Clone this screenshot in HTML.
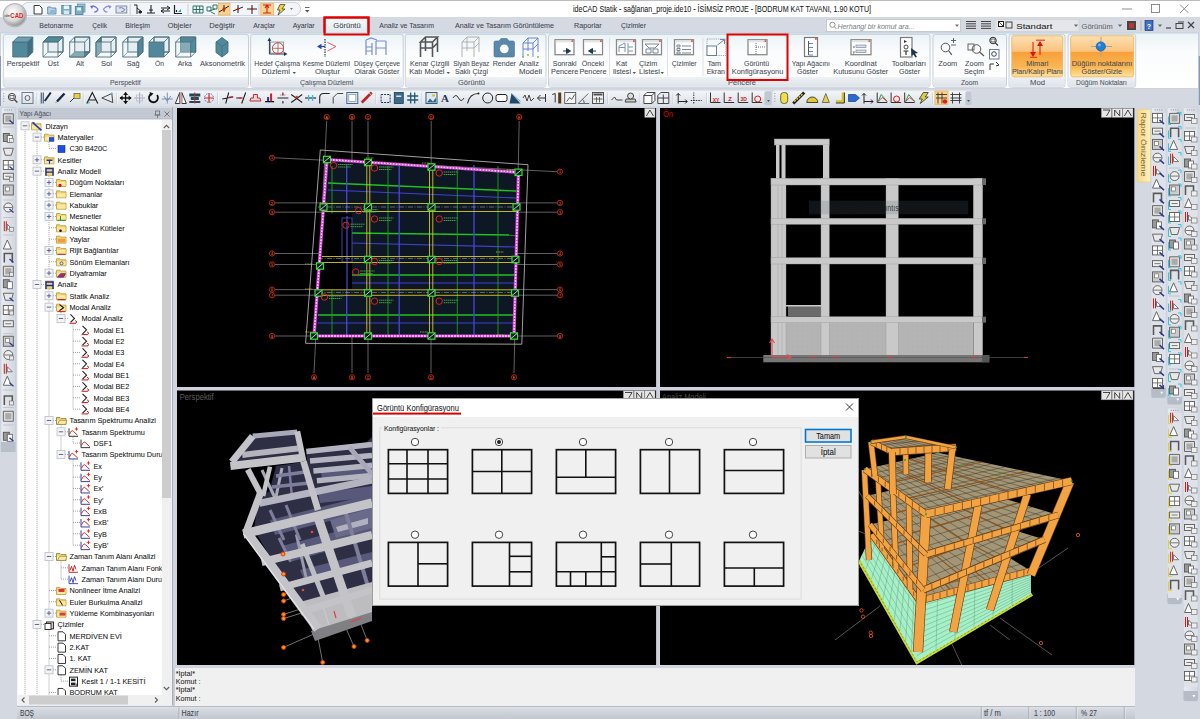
<!DOCTYPE html>
<html><head><meta charset="utf-8"><title>ideCAD Statik</title>
<style>html,body{margin:0;padding:0;width:1200px;height:719px;overflow:hidden;background:#d3d8e1;}
svg{display:block;font-family:"Liberation Sans",sans-serif;}</style></head>
<body><svg width="1200" height="719" viewBox="0 0 1200 719">
<defs>
<linearGradient id="gRib" x1="0" y1="0" x2="0" y2="1"><stop offset="0" stop-color="#eaf3f6"/><stop offset="0.35" stop-color="#fbfcfd"/><stop offset="1" stop-color="#ffffff"/></linearGradient>
<linearGradient id="gGrpLbl" x1="0" y1="0" x2="0" y2="1"><stop offset="0" stop-color="#eef1f5"/><stop offset="1" stop-color="#dde3ea"/></linearGradient>
<linearGradient id="gTb" x1="0" y1="0" x2="0" y2="1"><stop offset="0" stop-color="#f4f6f9"/><stop offset="1" stop-color="#d9dee6"/></linearGradient>
<linearGradient id="gStat" x1="0" y1="0" x2="0" y2="1"><stop offset="0" stop-color="#e3e6eb"/><stop offset="0.3" stop-color="#d3d7de"/><stop offset="1" stop-color="#c3c8d0"/></linearGradient>
<linearGradient id="gOrange" x1="0" y1="0" x2="0" y2="1"><stop offset="0" stop-color="#fde0b2"/><stop offset="0.38" stop-color="#fbc27e"/><stop offset="0.4" stop-color="#f8a03a"/><stop offset="0.75" stop-color="#fab552"/><stop offset="1" stop-color="#fde39c"/></linearGradient>
<linearGradient id="gTab" x1="0" y1="0" x2="0" y2="1"><stop offset="0" stop-color="#f6f9fb"/><stop offset="1" stop-color="#dfe9ee"/></linearGradient>
<linearGradient id="gYel" x1="1" y1="0" x2="0" y2="0"><stop offset="0" stop-color="#fdf0c0"/><stop offset="1" stop-color="#f8d77f"/></linearGradient>
<radialGradient id="gLogo" cx="0.4" cy="0.35" r="0.7"><stop offset="0" stop-color="#ffffff"/><stop offset="0.6" stop-color="#d8d8d8"/><stop offset="1" stop-color="#8a8a8a"/></radialGradient>
<linearGradient id="gCol" x1="0" y1="0" x2="1" y2="0"><stop offset="0" stop-color="#e9ecf1"/><stop offset="1" stop-color="#d2d7df"/></linearGradient>
</defs>
<rect x="0" y="0" width="1200" height="719" fill="#d3d8e1"/>
<rect x="0" y="0" width="1200" height="17" fill="#ffffff"/>
<text x="573" y="12" font-size="8.2" fill="#1a1a1a" text-anchor="start" font-weight="normal" textLength="298" lengthAdjust="spacingAndGlyphs" stroke="#1a1a1a" stroke-width="0.06">ideCAD Statik - sağlanan_proje.ide10 - İSİMSİZ PROJE - [BODRUM KAT TAVANI,  1.90 KOTU]</text>
<line x1="1122" y1="9" x2="1132" y2="9" stroke="#808080" stroke-width="0.9"/>
<rect x="1151.5" y="4.5" width="8" height="8" fill="none" stroke="#808080" stroke-width="0.9"/>
<line x1="1180" y1="4.5" x2="1188.5" y2="13" stroke="#808080" stroke-width="0.9"/>
<line x1="1188.5" y1="4.5" x2="1180" y2="13" stroke="#808080" stroke-width="0.9"/>
<rect x="22" y="2.3" width="278.5" height="13.4" rx="6.5" fill="#f1f4f8" stroke="#c3cad5" stroke-width="0.9"/>
<rect x="0" y="17" width="1200" height="16" fill="#d4d9e2"/>
<path d="M325,34 L325,19 Q325,17.5 327,17.5 L366,17.5 Q368,17.5 368,19 L368,34 Z" fill="url(#gTab)" stroke="#bcc8d4" stroke-width="0.8"/>
<text x="39.3" y="28.4" font-size="7.3" fill="#41444e" text-anchor="start" font-weight="normal" textLength="34.0" lengthAdjust="spacingAndGlyphs" stroke="#41444e" stroke-width="0.06">Betonarme</text>
<text x="92.3" y="28.4" font-size="7.3" fill="#41444e" text-anchor="start" font-weight="normal" textLength="14.7" lengthAdjust="spacingAndGlyphs" stroke="#41444e" stroke-width="0.06">Çelik</text>
<text x="125.3" y="28.4" font-size="7.3" fill="#41444e" text-anchor="start" font-weight="normal" textLength="24.7" lengthAdjust="spacingAndGlyphs" stroke="#41444e" stroke-width="0.06">Birleşim</text>
<text x="167.7" y="28.4" font-size="7.3" fill="#41444e" text-anchor="start" font-weight="normal" textLength="24.0" lengthAdjust="spacingAndGlyphs" stroke="#41444e" stroke-width="0.06">Objeler</text>
<text x="209.3" y="28.4" font-size="7.3" fill="#41444e" text-anchor="start" font-weight="normal" textLength="25.7" lengthAdjust="spacingAndGlyphs" stroke="#41444e" stroke-width="0.06">Değiştir</text>
<text x="253.3" y="28.4" font-size="7.3" fill="#41444e" text-anchor="start" font-weight="normal" textLength="21.7" lengthAdjust="spacingAndGlyphs" stroke="#41444e" stroke-width="0.06">Araçlar</text>
<text x="292.7" y="28.4" font-size="7.3" fill="#41444e" text-anchor="start" font-weight="normal" textLength="22.0" lengthAdjust="spacingAndGlyphs" stroke="#41444e" stroke-width="0.06">Ayarlar</text>
<text x="333.3" y="28.4" font-size="7.3" fill="#41444e" text-anchor="start" font-weight="normal" textLength="27.4" lengthAdjust="spacingAndGlyphs" stroke="#41444e" stroke-width="0.06">Görüntü</text>
<text x="379.3" y="28.4" font-size="7.3" fill="#41444e" text-anchor="start" font-weight="normal" textLength="54.7" lengthAdjust="spacingAndGlyphs" stroke="#41444e" stroke-width="0.06">Analiz ve Tasarım</text>
<text x="455" y="28.4" font-size="7.3" fill="#41444e" text-anchor="start" font-weight="normal" textLength="99" lengthAdjust="spacingAndGlyphs" stroke="#41444e" stroke-width="0.06">Analiz ve Tasarım Görüntüleme</text>
<text x="574" y="28.4" font-size="7.3" fill="#41444e" text-anchor="start" font-weight="normal" textLength="27.7" lengthAdjust="spacingAndGlyphs" stroke="#41444e" stroke-width="0.06">Raporlar</text>
<text x="621" y="28.4" font-size="7.3" fill="#41444e" text-anchor="start" font-weight="normal" textLength="25" lengthAdjust="spacingAndGlyphs" stroke="#41444e" stroke-width="0.06">Çizimler</text>
<rect x="324.5" y="17.5" width="44" height="17" fill="none" stroke="#e00000" stroke-width="2"/>
<rect x="826.5" y="19.5" width="134" height="12" fill="#ffffff" stroke="#c5cbd4" stroke-width="1"/>
<circle cx="832.5" cy="24.8" r="2.6" fill="none" stroke="#888" stroke-width="0.9"/>
<line x1="834.4" y1="26.8" x2="836.5" y2="29" stroke="#888" stroke-width="1"/>
<text x="837.4" y="28.5" font-size="7.6" fill="#80848c" text-anchor="start" font-weight="normal" textLength="77" lengthAdjust="spacingAndGlyphs" stroke="#80848c" stroke-width="0.06" font-style="italic">Herhangi bir komut ara...</text>
<path d="M955,24.5 L959,24.5 L957,27 Z" fill="#777"/>
<line x1="966" y1="21.5" x2="976" y2="21.5" stroke="#333" stroke-width="0.9"/>
<line x1="966" y1="23.8" x2="976" y2="23.8" stroke="#333" stroke-width="0.9"/>
<line x1="966" y1="26.1" x2="976" y2="26.1" stroke="#333" stroke-width="0.9"/>
<line x1="966" y1="28.4" x2="976" y2="28.4" stroke="#333" stroke-width="0.9"/>
<line x1="981" y1="21.5" x2="991" y2="21.5" stroke="#333" stroke-width="0.9"/>
<line x1="981" y1="23.8" x2="991" y2="23.8" stroke="#333" stroke-width="0.9"/>
<line x1="981" y1="26.1" x2="991" y2="26.1" stroke="#333" stroke-width="0.9"/>
<line x1="981" y1="28.4" x2="991" y2="28.4" stroke="#333" stroke-width="0.9"/>
<rect x="995" y="19.5" width="84" height="12" fill="#e4e6ea" stroke="#cfd3d9" stroke-width="0.8"/>
<rect x="998" y="21" width="6" height="6" fill="#222"/>
<rect x="999" y="22" width="4" height="4" fill="#fff"/>
<line x1="999" y1="22" x2="1003" y2="26" stroke="#222" stroke-width="0.8"/>
<rect x="1006" y="22" width="6" height="6" fill="none" stroke="#333" stroke-width="0.9"/>
<text x="1016.3" y="28.5" font-size="7.6" fill="#222" text-anchor="start" font-weight="normal" textLength="36" lengthAdjust="spacingAndGlyphs" stroke="#222" stroke-width="0.06">Standart</text>
<path d="M1074,24.5 L1078,24.5 L1076,27 Z" fill="#666"/>
<text x="1081.6" y="28.5" font-size="7.6" fill="#666" text-anchor="start" font-weight="normal" textLength="31" lengthAdjust="spacingAndGlyphs" stroke="#666" stroke-width="0.06">Görünüm</text>
<path d="M1118,24.5 L1122,24.5 L1120,27 Z" fill="#666"/>
<rect x="1127" y="21" width="9" height="9" fill="#444"/>
<rect x="1129" y="23" width="5" height="5" fill="#b33"/>
<line x1="1141" y1="20" x2="1141" y2="31" stroke="#aab" stroke-width="0.8"/>
<rect x="1145" y="20.5" width="8" height="10" fill="#3b6fd0" stroke="#224" stroke-width="0.6"/>
<text x="1149" y="28.5" font-size="7" fill="#fff" text-anchor="middle" font-weight="bold">?</text>
<path d="M1158,24.5 L1162,24.5 L1160,27 Z" fill="#666"/>
<line x1="1166" y1="28" x2="1171" y2="28" stroke="#444" stroke-width="1.2"/>
<rect x="1176" y="23.5" width="7" height="5" fill="none" stroke="#444" stroke-width="1"/>
<line x1="1178" y1="22" x2="1184" y2="22" stroke="#444" stroke-width="1"/>
<line x1="1188" y1="22" x2="1194" y2="28" stroke="#444" stroke-width="1.2"/>
<line x1="1194" y1="22" x2="1188" y2="28" stroke="#444" stroke-width="1.2"/>
<rect x="0.5" y="33" width="1198" height="55.5" fill="url(#gRib)" stroke="#c8ced8" stroke-width="0.8"/>
<line x1="1" y1="33.5" x2="1198" y2="33.5" stroke="#cfe6ee" stroke-width="1"/>
<rect x="3.3" y="34.3" width="245.2" height="53" rx="2.5" fill="url(#gRib)" stroke="#c3c9d2" stroke-width="0.9"/>
<path d="M3.8,77 L248.0,77 L248.0,85 Q248.0,86.8 246.0,86.8 L5.8,86.8 Q3.8,86.8 3.8,85 Z" fill="url(#gGrpLbl)"/>
<rect x="250.7" y="34.3" width="152.5" height="53" rx="2.5" fill="url(#gRib)" stroke="#c3c9d2" stroke-width="0.9"/>
<path d="M251.2,77 L402.7,77 L402.7,85 Q402.7,86.8 400.7,86.8 L253.2,86.8 Q251.2,86.8 251.2,85 Z" fill="url(#gGrpLbl)"/>
<rect x="405.3" y="34.3" width="140.7" height="53" rx="2.5" fill="url(#gRib)" stroke="#c3c9d2" stroke-width="0.9"/>
<path d="M405.8,77 L545.5,77 L545.5,85 Q545.5,86.8 543.5,86.8 L407.8,86.8 Q405.8,86.8 405.8,85 Z" fill="url(#gGrpLbl)"/>
<rect x="548.5" y="34.3" width="381.5" height="53" rx="2.5" fill="url(#gRib)" stroke="#c3c9d2" stroke-width="0.9"/>
<path d="M549.0,77 L929.5,77 L929.5,85 Q929.5,86.8 927.5,86.8 L551.0,86.8 Q549.0,86.8 549.0,85 Z" fill="url(#gGrpLbl)"/>
<rect x="933" y="34.3" width="73.5" height="53" rx="2.5" fill="url(#gRib)" stroke="#c3c9d2" stroke-width="0.9"/>
<path d="M933.5,77 L1006.0,77 L1006.0,85 Q1006.0,86.8 1004.0,86.8 L935.5,86.8 Q933.5,86.8 933.5,85 Z" fill="url(#gGrpLbl)"/>
<rect x="1009" y="34.3" width="56.0" height="53" rx="2.5" fill="url(#gRib)" stroke="#c3c9d2" stroke-width="0.9"/>
<path d="M1009.5,77 L1064.5,77 L1064.5,85 Q1064.5,86.8 1062.5,86.8 L1011.5,86.8 Q1009.5,86.8 1009.5,85 Z" fill="url(#gGrpLbl)"/>
<rect x="1068" y="34.3" width="67.7" height="53" rx="2.5" fill="url(#gRib)" stroke="#c3c9d2" stroke-width="0.9"/>
<path d="M1068.5,77 L1135.2,77 L1135.2,85 Q1135.2,86.8 1133.2,86.8 L1070.5,86.8 Q1068.5,86.8 1068.5,85 Z" fill="url(#gGrpLbl)"/>
<text x="110" y="84.6" font-size="7.3" fill="#51545c" text-anchor="start" font-weight="normal" textLength="30.7" lengthAdjust="spacingAndGlyphs" stroke="#51545c" stroke-width="0.06">Perspektif</text>
<text x="300" y="84.6" font-size="7.3" fill="#51545c" text-anchor="start" font-weight="normal" textLength="53.3" lengthAdjust="spacingAndGlyphs" stroke="#51545c" stroke-width="0.06">Çalışma Düzlemi</text>
<text x="458" y="84.6" font-size="7.3" fill="#51545c" text-anchor="start" font-weight="normal" textLength="27" lengthAdjust="spacingAndGlyphs" stroke="#51545c" stroke-width="0.06">Görüntü</text>
<text x="728" y="84.6" font-size="7.3" fill="#51545c" text-anchor="start" font-weight="normal" textLength="28" lengthAdjust="spacingAndGlyphs" stroke="#51545c" stroke-width="0.06">Pencere</text>
<text x="961" y="84.6" font-size="7.3" fill="#51545c" text-anchor="start" font-weight="normal" textLength="17" lengthAdjust="spacingAndGlyphs" stroke="#51545c" stroke-width="0.06">Zoom</text>
<text x="1030" y="84.6" font-size="7.3" fill="#51545c" text-anchor="start" font-weight="normal" textLength="15" lengthAdjust="spacingAndGlyphs" stroke="#51545c" stroke-width="0.06">Mod</text>
<text x="1076" y="84.6" font-size="7.3" fill="#51545c" text-anchor="start" font-weight="normal" textLength="51" lengthAdjust="spacingAndGlyphs" stroke="#51545c" stroke-width="0.06">Düğüm Noktaları</text>
<text x="6.7" y="65.8" font-size="7.3" fill="#474a56" text-anchor="start" font-weight="normal" textLength="32.6" lengthAdjust="spacingAndGlyphs" stroke="#474a56" stroke-width="0.06">Perspektif</text>
<text x="47.8" y="65.8" font-size="7.3" fill="#474a56" text-anchor="start" font-weight="normal" textLength="10.9" lengthAdjust="spacingAndGlyphs" stroke="#474a56" stroke-width="0.06">Üst</text>
<text x="76" y="65.8" font-size="7.3" fill="#474a56" text-anchor="start" font-weight="normal" textLength="8" lengthAdjust="spacingAndGlyphs" stroke="#474a56" stroke-width="0.06">Alt</text>
<text x="101" y="65.8" font-size="7.3" fill="#474a56" text-anchor="start" font-weight="normal" textLength="11" lengthAdjust="spacingAndGlyphs" stroke="#474a56" stroke-width="0.06">Sol</text>
<text x="126.7" y="65.8" font-size="7.3" fill="#474a56" text-anchor="start" font-weight="normal" textLength="13.0" lengthAdjust="spacingAndGlyphs" stroke="#474a56" stroke-width="0.06">Sağ</text>
<text x="155" y="65.8" font-size="7.3" fill="#474a56" text-anchor="start" font-weight="normal" textLength="9" lengthAdjust="spacingAndGlyphs" stroke="#474a56" stroke-width="0.06">Ön</text>
<text x="177.7" y="65.8" font-size="7.3" fill="#474a56" text-anchor="start" font-weight="normal" textLength="14.3" lengthAdjust="spacingAndGlyphs" stroke="#474a56" stroke-width="0.06">Arka</text>
<text x="200" y="65.8" font-size="7.3" fill="#474a56" text-anchor="start" font-weight="normal" textLength="45" lengthAdjust="spacingAndGlyphs" stroke="#474a56" stroke-width="0.06">Aksonometrik</text>
<text x="254.3" y="65.8" font-size="7.3" fill="#474a56" text-anchor="start" font-weight="normal" textLength="45.7" lengthAdjust="spacingAndGlyphs" stroke="#474a56" stroke-width="0.06">Hedef Çalışma</text>
<text x="261.7" y="74.05" font-size="7.3" fill="#474a56" text-anchor="start" font-weight="normal" textLength="28.3" lengthAdjust="spacingAndGlyphs" stroke="#474a56" stroke-width="0.06">Düzlemi</text>
<text x="302.7" y="65.8" font-size="7.3" fill="#474a56" text-anchor="start" font-weight="normal" textLength="47.3" lengthAdjust="spacingAndGlyphs" stroke="#474a56" stroke-width="0.06">Kesme Düzlemi</text>
<text x="315" y="74.05" font-size="7.3" fill="#474a56" text-anchor="start" font-weight="normal" textLength="25" lengthAdjust="spacingAndGlyphs" stroke="#474a56" stroke-width="0.06">Oluştur</text>
<text x="354" y="65.8" font-size="7.3" fill="#474a56" text-anchor="start" font-weight="normal" textLength="46" lengthAdjust="spacingAndGlyphs" stroke="#474a56" stroke-width="0.06">Düşey Çerçeve</text>
<text x="354.5" y="74.05" font-size="7.3" fill="#474a56" text-anchor="start" font-weight="normal" textLength="45.0" lengthAdjust="spacingAndGlyphs" stroke="#474a56" stroke-width="0.06">Olarak Göster</text>
<text x="410" y="65.8" font-size="7.3" fill="#474a56" text-anchor="start" font-weight="normal" textLength="39.3" lengthAdjust="spacingAndGlyphs" stroke="#474a56" stroke-width="0.06">Kenar Çizgili</text>
<text x="409.3" y="74.05" font-size="7.3" fill="#474a56" text-anchor="start" font-weight="normal" textLength="35.2" lengthAdjust="spacingAndGlyphs" stroke="#474a56" stroke-width="0.06">Katı Model</text>
<text x="453.3" y="65.8" font-size="7.3" fill="#474a56" text-anchor="start" font-weight="normal" textLength="36.0" lengthAdjust="spacingAndGlyphs" stroke="#474a56" stroke-width="0.06">Siyah Beyaz</text>
<text x="455" y="74.05" font-size="7.3" fill="#474a56" text-anchor="start" font-weight="normal" textLength="33" lengthAdjust="spacingAndGlyphs" stroke="#474a56" stroke-width="0.06">Saklı Çizgi</text>
<text x="492.7" y="65.8" font-size="7.3" fill="#474a56" text-anchor="start" font-weight="normal" textLength="23.3" lengthAdjust="spacingAndGlyphs" stroke="#474a56" stroke-width="0.06">Render</text>
<text x="518.9" y="65.8" font-size="7.3" fill="#474a56" text-anchor="start" font-weight="normal" textLength="19.9" lengthAdjust="spacingAndGlyphs" stroke="#474a56" stroke-width="0.06">Analiz</text>
<text x="519" y="74.05" font-size="7.3" fill="#474a56" text-anchor="start" font-weight="normal" textLength="23" lengthAdjust="spacingAndGlyphs" stroke="#474a56" stroke-width="0.06">Modeli</text>
<text x="552.7" y="65.8" font-size="7.3" fill="#474a56" text-anchor="start" font-weight="normal" textLength="24.0" lengthAdjust="spacingAndGlyphs" stroke="#474a56" stroke-width="0.06">Sonraki</text>
<text x="551.1" y="74.05" font-size="7.3" fill="#474a56" text-anchor="start" font-weight="normal" textLength="27.2" lengthAdjust="spacingAndGlyphs" stroke="#474a56" stroke-width="0.06">Pencere</text>
<text x="581.7" y="65.8" font-size="7.3" fill="#474a56" text-anchor="start" font-weight="normal" textLength="22.3" lengthAdjust="spacingAndGlyphs" stroke="#474a56" stroke-width="0.06">Önceki</text>
<text x="579.4" y="74.05" font-size="7.3" fill="#474a56" text-anchor="start" font-weight="normal" textLength="27.2" lengthAdjust="spacingAndGlyphs" stroke="#474a56" stroke-width="0.06">Pencere</text>
<text x="616.0" y="65.8" font-size="7.3" fill="#474a56" text-anchor="start" font-weight="normal" textLength="11.0" lengthAdjust="spacingAndGlyphs" stroke="#474a56" stroke-width="0.06">Kat</text>
<text x="613" y="74.05" font-size="7.3" fill="#474a56" text-anchor="start" font-weight="normal" textLength="18" lengthAdjust="spacingAndGlyphs" stroke="#474a56" stroke-width="0.06">listesi</text>
<text x="639.1" y="65.8" font-size="7.3" fill="#474a56" text-anchor="start" font-weight="normal" textLength="18.2" lengthAdjust="spacingAndGlyphs" stroke="#474a56" stroke-width="0.06">Çizim</text>
<text x="639.1" y="74.05" font-size="7.3" fill="#474a56" text-anchor="start" font-weight="normal" textLength="20.7" lengthAdjust="spacingAndGlyphs" stroke="#474a56" stroke-width="0.06">Listesi</text>
<text x="671.7" y="65.8" font-size="7.3" fill="#474a56" text-anchor="start" font-weight="normal" textLength="25.0" lengthAdjust="spacingAndGlyphs" stroke="#474a56" stroke-width="0.06">Çizimler</text>
<text x="707.4" y="65.8" font-size="7.3" fill="#474a56" text-anchor="start" font-weight="normal" textLength="13.8" lengthAdjust="spacingAndGlyphs" stroke="#474a56" stroke-width="0.06">Tam</text>
<text x="706.7" y="74.05" font-size="7.3" fill="#474a56" text-anchor="start" font-weight="normal" textLength="18.3" lengthAdjust="spacingAndGlyphs" stroke="#474a56" stroke-width="0.06">Ekran</text>
<text x="744" y="65.8" font-size="7.3" fill="#474a56" text-anchor="start" font-weight="normal" textLength="25" lengthAdjust="spacingAndGlyphs" stroke="#474a56" stroke-width="0.06">Görüntü</text>
<text x="731.7" y="74.05" font-size="7.3" fill="#474a56" text-anchor="start" font-weight="normal" textLength="51.6" lengthAdjust="spacingAndGlyphs" stroke="#474a56" stroke-width="0.06">Konfigürasyonu</text>
<text x="791.7" y="65.8" font-size="7.3" fill="#474a56" text-anchor="start" font-weight="normal" textLength="38.3" lengthAdjust="spacingAndGlyphs" stroke="#474a56" stroke-width="0.06">Yapı Ağacını</text>
<text x="797" y="74.05" font-size="7.3" fill="#474a56" text-anchor="start" font-weight="normal" textLength="21" lengthAdjust="spacingAndGlyphs" stroke="#474a56" stroke-width="0.06">Göster</text>
<text x="844.7" y="65.8" font-size="7.3" fill="#474a56" text-anchor="start" font-weight="normal" textLength="32.1" lengthAdjust="spacingAndGlyphs" stroke="#474a56" stroke-width="0.06">Koordinat</text>
<text x="833.3" y="74.05" font-size="7.3" fill="#474a56" text-anchor="start" font-weight="normal" textLength="55.0" lengthAdjust="spacingAndGlyphs" stroke="#474a56" stroke-width="0.06">Kutusunu Göster</text>
<text x="891.7" y="65.8" font-size="7.3" fill="#474a56" text-anchor="start" font-weight="normal" textLength="34.3" lengthAdjust="spacingAndGlyphs" stroke="#474a56" stroke-width="0.06">Toolbarları</text>
<text x="899" y="74.05" font-size="7.3" fill="#474a56" text-anchor="start" font-weight="normal" textLength="21" lengthAdjust="spacingAndGlyphs" stroke="#474a56" stroke-width="0.06">Göster</text>
<text x="938.3" y="65.8" font-size="7.3" fill="#474a56" text-anchor="start" font-weight="normal" textLength="19.0" lengthAdjust="spacingAndGlyphs" stroke="#474a56" stroke-width="0.06">Zoom</text>
<text x="965.1" y="65.8" font-size="7.3" fill="#474a56" text-anchor="start" font-weight="normal" textLength="18.7" lengthAdjust="spacingAndGlyphs" stroke="#474a56" stroke-width="0.06">Zoom</text>
<text x="964.0" y="74.05" font-size="7.3" fill="#474a56" text-anchor="start" font-weight="normal" textLength="20.3" lengthAdjust="spacingAndGlyphs" stroke="#474a56" stroke-width="0.06">Seçim</text>
<text x="1026.3" y="65.8" font-size="7.3" fill="#474a56" text-anchor="start" font-weight="normal" textLength="22.0" lengthAdjust="spacingAndGlyphs" stroke="#474a56" stroke-width="0.06">Mimari</text>
<text x="1012" y="74.05" font-size="7.3" fill="#474a56" text-anchor="start" font-weight="normal" textLength="50.7" lengthAdjust="spacingAndGlyphs" stroke="#474a56" stroke-width="0.06">Plan/Kalıp Planı</text>
<text x="1071.7" y="65.8" font-size="7.3" fill="#474a56" text-anchor="start" font-weight="normal" textLength="60.6" lengthAdjust="spacingAndGlyphs" stroke="#474a56" stroke-width="0.06">Düğüm noktalarını</text>
<text x="1081.5" y="74.05" font-size="7.3" fill="#474a56" text-anchor="start" font-weight="normal" textLength="40.5" lengthAdjust="spacingAndGlyphs" stroke="#474a56" stroke-width="0.06">Göster/Gizle</text>
<path d="M292.5,72 L296.0,72 L294.25,74 Z" fill="#555"/>
<path d="M446.5,72 L450.0,72 L448.25,74 Z" fill="#555"/>
<path d="M632.5,72 L636.0,72 L634.25,74 Z" fill="#555"/>
<path d="M660.5,72 L664.0,72 L662.25,74 Z" fill="#555"/>
<line x1="609.5" y1="38" x2="609.5" y2="76" stroke="#d5d9df" stroke-width="0.8"/>
<line x1="667.5" y1="38" x2="667.5" y2="76" stroke="#d5d9df" stroke-width="0.8"/>
<line x1="703" y1="38" x2="703" y2="76" stroke="#d5d9df" stroke-width="0.8"/>
<rect x="1011.8" y="35.8" width="51" height="41" rx="2" fill="url(#gOrange)" stroke="#e9b25a" stroke-width="0.8"/>
<rect x="1070.7" y="35.8" width="63" height="41" rx="2" fill="url(#gOrange)" stroke="#e9b25a" stroke-width="0.8"/>
<text x="1026.3" y="65.8" font-size="7.3" fill="#474a56" text-anchor="start" font-weight="normal" textLength="22" lengthAdjust="spacingAndGlyphs" stroke="#474a56" stroke-width="0.06">Mimari</text>
<text x="1012" y="74.05" font-size="7.3" fill="#474a56" text-anchor="start" font-weight="normal" textLength="50.7" lengthAdjust="spacingAndGlyphs" stroke="#474a56" stroke-width="0.06">Plan/Kalıp Planı</text>
<text x="1071.7" y="65.8" font-size="7.3" fill="#474a56" text-anchor="start" font-weight="normal" textLength="60.6" lengthAdjust="spacingAndGlyphs" stroke="#474a56" stroke-width="0.06">Düğüm noktalarını</text>
<text x="1081.5" y="74.05" font-size="7.3" fill="#474a56" text-anchor="start" font-weight="normal" textLength="40.5" lengthAdjust="spacingAndGlyphs" stroke="#474a56" stroke-width="0.06">Göster/Gizle</text>
<rect x="727.5" y="34.5" width="60" height="45.5" fill="none" stroke="#e00000" stroke-width="2"/>
<rect x="1" y="90.8" width="770.5" height="15" rx="2" fill="url(#gTb)" stroke="#e4e8ee" stroke-width="0.6"/>
<rect x="764.4" y="91.3" width="7.3" height="14" fill="#c2c8d1" rx="1.5"/>
<rect x="772.7" y="90.8" width="199" height="15" rx="2" fill="url(#gTb)" stroke="#e4e8ee" stroke-width="0.6"/>
<rect x="965.4" y="91.3" width="6.3" height="14" fill="#c2c8d1" rx="1.5"/>
<rect x="1" y="107.5" width="14.5" height="344" rx="2" fill="url(#gCol)" stroke="#c5cbd5" stroke-width="0.6"/>
<rect x="1" y="442" width="14.5" height="10" fill="#b9bfc9"/>
<rect x="17" y="107" width="156" height="598" fill="#e8ebf0"/>
<rect x="17.5" y="107.5" width="154.5" height="12" fill="#c3c9d3"/>
<text x="19.5" y="116" font-size="7.6" fill="#50545c" text-anchor="start" font-weight="normal" textLength="31.5" lengthAdjust="spacingAndGlyphs" stroke="#50545c" stroke-width="0.06">Yapı Ağacı</text>
<line x1="17.5" y1="119.2" x2="172" y2="119.2" stroke="#a3abb6" stroke-width="0.8"/>
<rect x="155.5" y="111" width="4" height="4" fill="none" stroke="#777" stroke-width="0.9"/>
<line x1="157.5" y1="115" x2="157.5" y2="118" stroke="#777" stroke-width="0.9"/>
<line x1="154.5" y1="115" x2="160.5" y2="115" stroke="#777" stroke-width="0.9"/>
<line x1="164.5" y1="111.5" x2="169.5" y2="116.5" stroke="#777" stroke-width="1"/>
<line x1="169.5" y1="111.5" x2="164.5" y2="116.5" stroke="#777" stroke-width="1"/>
<rect x="17.5" y="119.5" width="154" height="586" fill="#ffffff"/>
<rect x="161.8" y="120" width="10" height="575" fill="#f0f0f0"/>
<rect x="162" y="130" width="9" height="368" fill="#cdcdcd"/>
<path d="M163.8,128 L166.5,125.3 L169.2,128" fill="none" stroke="#606060" stroke-width="1.1"/>
<path d="M163.8,687 L166.5,689.7 L169.2,687" fill="none" stroke="#606060" stroke-width="1.1"/>
<rect x="17.5" y="695" width="144.3" height="10" fill="#f0f0f0"/>
<rect x="29" y="695.5" width="99" height="9" fill="#cdcdcd"/>
<path d="M24.5,697.5 L22,700 L24.5,702.5" fill="none" stroke="#606060" stroke-width="1.1"/>
<path d="M155,697.5 L157.5,700 L155,702.5" fill="none" stroke="#606060" stroke-width="1.1"/>
<rect x="161.8" y="695" width="10" height="10" fill="#f0f0f0"/>
<rect x="172" y="107" width="1.2" height="598" fill="#a9b0bb"/>
<svg x="17.5" y="119.5" width="144.3" height="575.5" overflow="hidden"><g transform="translate(-17.5,-119.5)">
<line x1="25" y1="130.8" x2="25" y2="700" stroke="#a0a0a0" stroke-width="1" stroke-dasharray="1,1"/>
<line x1="37" y1="130.8" x2="37" y2="700" stroke="#a0a0a0" stroke-width="1" stroke-dasharray="1,1"/>
<line x1="49.0" y1="142.13333333333333" x2="49.0" y2="148.46666666666667" stroke="#a0a0a0" stroke-width="1" stroke-dasharray="1,1"/>
<line x1="49.0" y1="176.13333333333333" x2="49.0" y2="273.1333333333333" stroke="#a0a0a0" stroke-width="1" stroke-dasharray="1,1"/>
<line x1="49.0" y1="289.4666666666667" x2="49.0" y2="613.1333333333333" stroke="#a0a0a0" stroke-width="1" stroke-dasharray="1,1"/>
<line x1="49.0" y1="629.4666666666667" x2="49.0" y2="715.1333333333333" stroke="#a0a0a0" stroke-width="1" stroke-dasharray="1,1"/>
<line x1="61.0" y1="312.1333333333333" x2="61.0" y2="318.4666666666667" stroke="#a0a0a0" stroke-width="1" stroke-dasharray="1,1"/>
<line x1="73.0" y1="323.4666666666667" x2="73.0" y2="409.1333333333334" stroke="#a0a0a0" stroke-width="1" stroke-dasharray="1,1"/>
<line x1="61.0" y1="425.4666666666667" x2="61.0" y2="454.4666666666667" stroke="#a0a0a0" stroke-width="1" stroke-dasharray="1,1"/>
<line x1="73.0" y1="436.8" x2="73.0" y2="443.1333333333334" stroke="#a0a0a0" stroke-width="1" stroke-dasharray="1,1"/>
<line x1="73.0" y1="459.4666666666667" x2="73.0" y2="545.1333333333333" stroke="#a0a0a0" stroke-width="1" stroke-dasharray="1,1"/>
<line x1="61.0" y1="561.4666666666667" x2="61.0" y2="579.1333333333333" stroke="#a0a0a0" stroke-width="1" stroke-dasharray="1,1"/>
<line x1="61.0" y1="674.8" x2="61.0" y2="681.1333333333333" stroke="#a0a0a0" stroke-width="1" stroke-dasharray="1,1"/>
<line x1="25.0" y1="125.8" x2="32.5" y2="125.8" stroke="#a0a0a0" stroke-width="1" stroke-dasharray="1,1"/>
<rect x="21.0" y="121.8" width="8" height="8" fill="#f4f4f4" stroke="#b7bec8" stroke-width="0.8"/>
<line x1="22.8" y1="125.8" x2="27.2" y2="125.8" stroke="#4a5a8a" stroke-width="0.9"/>
<path d="M31.5,122.8 L35.0,122.8 L36.0,123.8 L41.0,123.8 L41.0,129.8 L31.5,129.8 Z" fill="#f3d36b" stroke="#b59a3a" stroke-width="0.8"/>
<rect x="32.1" y="125.3" width="8.4" height="4" fill="#fbe9a2"/>
<line x1="32.5" y1="122.3" x2="41.5" y2="130.3" stroke="#1f3fbf" stroke-width="1.6"/>
<text x="45.5" y="128.6" font-size="8.0" fill="#111111" text-anchor="start" font-weight="normal" textLength="22.3" lengthAdjust="spacingAndGlyphs" stroke="#111111" stroke-width="0.06">Dizayn</text>
<line x1="37.0" y1="137.13333333333333" x2="44.5" y2="137.13333333333333" stroke="#a0a0a0" stroke-width="1" stroke-dasharray="1,1"/>
<rect x="33.0" y="133.13333333333333" width="8" height="8" fill="#f4f4f4" stroke="#b7bec8" stroke-width="0.8"/>
<line x1="34.8" y1="137.13333333333333" x2="39.2" y2="137.13333333333333" stroke="#4a5a8a" stroke-width="0.9"/>
<path d="M44.5,134.13333333333333 L48.0,134.13333333333333 L49.0,135.13333333333333 L54.0,135.13333333333333 L54.0,141.13333333333333 L44.5,141.13333333333333 Z" fill="#f3d36b" stroke="#b59a3a" stroke-width="0.8"/>
<rect x="45.1" y="136.63333333333333" width="8.4" height="4" fill="#fbe9a2"/>
<rect x="49.0" y="137.13333333333333" width="5" height="4.5" fill="#1d4fe0"/>
<text x="57.5" y="139.93333333333334" font-size="8.0" fill="#111111" text-anchor="start" font-weight="normal" textLength="36.1" lengthAdjust="spacingAndGlyphs" stroke="#111111" stroke-width="0.06">Materyaller</text>
<line x1="49.0" y1="148.46666666666667" x2="56.5" y2="148.46666666666667" stroke="#a0a0a0" stroke-width="1" stroke-dasharray="1,1"/>
<rect x="58.0" y="145.46666666666667" width="7" height="7" fill="#1d4fe0" stroke="#0a2a90" stroke-width="0.6"/>
<text x="69.5" y="151.26666666666668" font-size="8.0" fill="#111111" text-anchor="start" font-weight="normal" textLength="37.7" lengthAdjust="spacingAndGlyphs" stroke="#111111" stroke-width="0.06">C30 B420C</text>
<line x1="37.0" y1="159.8" x2="44.5" y2="159.8" stroke="#a0a0a0" stroke-width="1" stroke-dasharray="1,1"/>
<rect x="33.0" y="155.8" width="8" height="8" fill="#f4f4f4" stroke="#b7bec8" stroke-width="0.8"/>
<line x1="34.8" y1="159.8" x2="39.2" y2="159.8" stroke="#4a5a8a" stroke-width="0.9"/>
<line x1="37.0" y1="157.60000000000002" x2="37.0" y2="162.0" stroke="#4a5a8a" stroke-width="0.9"/>
<path d="M44.5,156.8 L48.0,156.8 L49.0,157.8 L54.0,157.8 L54.0,163.8 L44.5,163.8 Z" fill="#f3d36b" stroke="#b59a3a" stroke-width="0.8"/>
<rect x="45.1" y="159.3" width="8.4" height="4" fill="#fbe9a2"/>
<line x1="46.5" y1="160.3" x2="52.5" y2="160.3" stroke="#2233aa" stroke-width="1.4"/>
<line x1="49.5" y1="160.3" x2="49.5" y2="163.8" stroke="#2233aa" stroke-width="1.2"/>
<text x="57.5" y="162.60000000000002" font-size="8.0" fill="#111111" text-anchor="start" font-weight="normal" textLength="24.3" lengthAdjust="spacingAndGlyphs" stroke="#111111" stroke-width="0.06">Kesitler</text>
<line x1="37.0" y1="171.13333333333333" x2="44.5" y2="171.13333333333333" stroke="#a0a0a0" stroke-width="1" stroke-dasharray="1,1"/>
<rect x="33.0" y="167.13333333333333" width="8" height="8" fill="#f4f4f4" stroke="#b7bec8" stroke-width="0.8"/>
<line x1="34.8" y1="171.13333333333333" x2="39.2" y2="171.13333333333333" stroke="#4a5a8a" stroke-width="0.9"/>
<rect x="45.5" y="167.63333333333333" width="8" height="8" fill="#f1d66a" stroke="#b59a3a" stroke-width="0.6"/>
<path d="M46.0,175.63333333333333 L46.0,168.63333333333333 L53.0,168.63333333333333 L53.0,175.63333333333333 M46.0,172.13333333333333 L53.0,172.13333333333333" fill="none" stroke="#1a2ba8" stroke-width="1.4"/>
<text x="57.5" y="173.93333333333334" font-size="8.0" fill="#111111" text-anchor="start" font-weight="normal" textLength="43.4" lengthAdjust="spacingAndGlyphs" stroke="#111111" stroke-width="0.06">Analiz Modeli</text>
<line x1="49.0" y1="182.46666666666667" x2="56.5" y2="182.46666666666667" stroke="#a0a0a0" stroke-width="1" stroke-dasharray="1,1"/>
<rect x="45.0" y="178.46666666666667" width="8" height="8" fill="#f4f4f4" stroke="#b7bec8" stroke-width="0.8"/>
<line x1="46.8" y1="182.46666666666667" x2="51.2" y2="182.46666666666667" stroke="#4a5a8a" stroke-width="0.9"/>
<line x1="49.0" y1="180.26666666666668" x2="49.0" y2="184.66666666666666" stroke="#4a5a8a" stroke-width="0.9"/>
<path d="M56.5,179.46666666666667 L60.0,179.46666666666667 L61.0,180.46666666666667 L66.0,180.46666666666667 L66.0,186.46666666666667 L56.5,186.46666666666667 Z" fill="#f3d36b" stroke="#b59a3a" stroke-width="0.8"/>
<rect x="57.1" y="181.96666666666667" width="8.4" height="4" fill="#fbe9a2"/>
<circle cx="60.0" cy="185.46666666666667" r="1.6" fill="#e01010"/>
<text x="69.5" y="185.26666666666668" font-size="8.0" fill="#111111" text-anchor="start" font-weight="normal" textLength="54.8" lengthAdjust="spacingAndGlyphs" stroke="#111111" stroke-width="0.06">Düğüm Noktaları</text>
<line x1="49.0" y1="193.8" x2="56.5" y2="193.8" stroke="#a0a0a0" stroke-width="1" stroke-dasharray="1,1"/>
<rect x="45.0" y="189.8" width="8" height="8" fill="#f4f4f4" stroke="#b7bec8" stroke-width="0.8"/>
<line x1="46.8" y1="193.8" x2="51.2" y2="193.8" stroke="#4a5a8a" stroke-width="0.9"/>
<line x1="49.0" y1="191.60000000000002" x2="49.0" y2="196.0" stroke="#4a5a8a" stroke-width="0.9"/>
<path d="M56.5,190.8 L60.0,190.8 L61.0,191.8 L66.0,191.8 L66.0,197.8 L56.5,197.8 Z" fill="#f3d36b" stroke="#b59a3a" stroke-width="0.8"/>
<rect x="57.1" y="193.3" width="8.4" height="4" fill="#fbe9a2"/>
<text x="69.5" y="196.60000000000002" font-size="8.0" fill="#111111" text-anchor="start" font-weight="normal" textLength="32.9" lengthAdjust="spacingAndGlyphs" stroke="#111111" stroke-width="0.06">Elemanlar</text>
<line x1="49.0" y1="205.13333333333333" x2="56.5" y2="205.13333333333333" stroke="#a0a0a0" stroke-width="1" stroke-dasharray="1,1"/>
<rect x="45.0" y="201.13333333333333" width="8" height="8" fill="#f4f4f4" stroke="#b7bec8" stroke-width="0.8"/>
<line x1="46.8" y1="205.13333333333333" x2="51.2" y2="205.13333333333333" stroke="#4a5a8a" stroke-width="0.9"/>
<line x1="49.0" y1="202.93333333333334" x2="49.0" y2="207.33333333333331" stroke="#4a5a8a" stroke-width="0.9"/>
<path d="M56.5,202.13333333333333 L60.0,202.13333333333333 L61.0,203.13333333333333 L66.0,203.13333333333333 L66.0,209.13333333333333 L56.5,209.13333333333333 Z" fill="#f3d36b" stroke="#b59a3a" stroke-width="0.8"/>
<rect x="57.1" y="204.63333333333333" width="8.4" height="4" fill="#fbe9a2"/>
<text x="69.5" y="207.93333333333334" font-size="8.0" fill="#111111" text-anchor="start" font-weight="normal" textLength="28.8" lengthAdjust="spacingAndGlyphs" stroke="#111111" stroke-width="0.06">Kabuklar</text>
<line x1="49.0" y1="216.46666666666667" x2="56.5" y2="216.46666666666667" stroke="#a0a0a0" stroke-width="1" stroke-dasharray="1,1"/>
<rect x="45.0" y="212.46666666666667" width="8" height="8" fill="#f4f4f4" stroke="#b7bec8" stroke-width="0.8"/>
<line x1="46.8" y1="216.46666666666667" x2="51.2" y2="216.46666666666667" stroke="#4a5a8a" stroke-width="0.9"/>
<line x1="49.0" y1="214.26666666666668" x2="49.0" y2="218.66666666666666" stroke="#4a5a8a" stroke-width="0.9"/>
<path d="M56.5,213.46666666666667 L60.0,213.46666666666667 L61.0,214.46666666666667 L66.0,214.46666666666667 L66.0,220.46666666666667 L56.5,220.46666666666667 Z" fill="#f3d36b" stroke="#b59a3a" stroke-width="0.8"/>
<rect x="57.1" y="215.96666666666667" width="8.4" height="4" fill="#fbe9a2"/>
<line x1="57.5" y1="220.26666666666668" x2="65.5" y2="220.26666666666668" stroke="#1a9a1a" stroke-width="1.2"/>
<line x1="60.5" y1="215.96666666666667" x2="60.5" y2="219.96666666666667" stroke="#1a9a1a" stroke-width="1"/>
<text x="69.5" y="219.26666666666668" font-size="8.0" fill="#111111" text-anchor="start" font-weight="normal" textLength="32.0" lengthAdjust="spacingAndGlyphs" stroke="#111111" stroke-width="0.06">Mesnetler</text>
<line x1="49.0" y1="227.8" x2="56.5" y2="227.8" stroke="#a0a0a0" stroke-width="1" stroke-dasharray="1,1"/>
<path d="M56.5,224.8 L60.0,224.8 L61.0,225.8 L66.0,225.8 L66.0,231.8 L56.5,231.8 Z" fill="#f3d36b" stroke="#b59a3a" stroke-width="0.8"/>
<rect x="57.1" y="227.3" width="8.4" height="4" fill="#fbe9a2"/>
<circle cx="60.5" cy="230.8" r="1.3" fill="#400"/>
<text x="69.5" y="230.60000000000002" font-size="8.0" fill="#111111" text-anchor="start" font-weight="normal" textLength="55.2" lengthAdjust="spacingAndGlyphs" stroke="#111111" stroke-width="0.06">Noktasal Kütleler</text>
<line x1="49.0" y1="239.13333333333333" x2="56.5" y2="239.13333333333333" stroke="#a0a0a0" stroke-width="1" stroke-dasharray="1,1"/>
<path d="M56.5,236.13333333333333 L60.0,236.13333333333333 L61.0,237.13333333333333 L66.0,237.13333333333333 L66.0,243.13333333333333 L56.5,243.13333333333333 Z" fill="#f3d36b" stroke="#b59a3a" stroke-width="0.8"/>
<rect x="57.1" y="238.63333333333333" width="8.4" height="4" fill="#fbe9a2"/>
<rect x="57.5" y="238.63333333333333" width="8" height="4" fill="#f39a3a"/>
<text x="69.5" y="241.93333333333334" font-size="8.0" fill="#111111" text-anchor="start" font-weight="normal" textLength="20.1" lengthAdjust="spacingAndGlyphs" stroke="#111111" stroke-width="0.06">Yaylar</text>
<line x1="49.0" y1="250.46666666666667" x2="56.5" y2="250.46666666666667" stroke="#a0a0a0" stroke-width="1" stroke-dasharray="1,1"/>
<rect x="45.0" y="246.46666666666667" width="8" height="8" fill="#f4f4f4" stroke="#b7bec8" stroke-width="0.8"/>
<line x1="46.8" y1="250.46666666666667" x2="51.2" y2="250.46666666666667" stroke="#4a5a8a" stroke-width="0.9"/>
<line x1="49.0" y1="248.26666666666668" x2="49.0" y2="252.66666666666666" stroke="#4a5a8a" stroke-width="0.9"/>
<path d="M56.5,247.46666666666667 L60.0,247.46666666666667 L61.0,248.46666666666667 L66.0,248.46666666666667 L66.0,254.46666666666667 L56.5,254.46666666666667 Z" fill="#f3d36b" stroke="#b59a3a" stroke-width="0.8"/>
<rect x="57.1" y="249.96666666666667" width="8.4" height="4" fill="#fbe9a2"/>
<line x1="57.5" y1="254.26666666666668" x2="65.5" y2="254.26666666666668" stroke="#d02020" stroke-width="1.2"/>
<text x="69.5" y="253.26666666666668" font-size="8.0" fill="#111111" text-anchor="start" font-weight="normal" textLength="49.1" lengthAdjust="spacingAndGlyphs" stroke="#111111" stroke-width="0.06">Rijit Bağlantılar</text>
<line x1="49.0" y1="261.8" x2="56.5" y2="261.8" stroke="#a0a0a0" stroke-width="1" stroke-dasharray="1,1"/>
<path d="M56.5,258.8 L60.0,258.8 L61.0,259.8 L66.0,259.8 L66.0,265.8 L56.5,265.8 Z" fill="#f3d36b" stroke="#b59a3a" stroke-width="0.8"/>
<rect x="57.1" y="261.3" width="8.4" height="4" fill="#fbe9a2"/>
<circle cx="61.5" cy="263.3" r="1.5" fill="none" stroke="#3344aa" stroke-width="0.8"/>
<text x="69.5" y="264.6" font-size="8.0" fill="#111111" text-anchor="start" font-weight="normal" textLength="60.0" lengthAdjust="spacingAndGlyphs" stroke="#111111" stroke-width="0.06">Sönüm Elemanları</text>
<line x1="49.0" y1="273.1333333333333" x2="56.5" y2="273.1333333333333" stroke="#a0a0a0" stroke-width="1" stroke-dasharray="1,1"/>
<rect x="45.0" y="269.1333333333333" width="8" height="8" fill="#f4f4f4" stroke="#b7bec8" stroke-width="0.8"/>
<line x1="46.8" y1="273.1333333333333" x2="51.2" y2="273.1333333333333" stroke="#4a5a8a" stroke-width="0.9"/>
<line x1="49.0" y1="270.93333333333334" x2="49.0" y2="275.3333333333333" stroke="#4a5a8a" stroke-width="0.9"/>
<path d="M56.5,270.1333333333333 L60.0,270.1333333333333 L61.0,271.1333333333333 L66.0,271.1333333333333 L66.0,277.1333333333333 L56.5,277.1333333333333 Z" fill="#f3d36b" stroke="#b59a3a" stroke-width="0.8"/>
<rect x="57.1" y="272.6333333333333" width="8.4" height="4" fill="#fbe9a2"/>
<path d="M57.5,277.1333333333333 L60.5,273.6333333333333 L65.5,273.6333333333333 L63.5,277.1333333333333 Z" fill="#cc2244" stroke="#3333aa" stroke-width="0.8"/>
<text x="69.5" y="275.93333333333334" font-size="8.0" fill="#111111" text-anchor="start" font-weight="normal" textLength="37.3" lengthAdjust="spacingAndGlyphs" stroke="#111111" stroke-width="0.06">Diyaframlar</text>
<line x1="37.0" y1="284.4666666666667" x2="44.5" y2="284.4666666666667" stroke="#a0a0a0" stroke-width="1" stroke-dasharray="1,1"/>
<rect x="33.0" y="280.4666666666667" width="8" height="8" fill="#f4f4f4" stroke="#b7bec8" stroke-width="0.8"/>
<line x1="34.8" y1="284.4666666666667" x2="39.2" y2="284.4666666666667" stroke="#4a5a8a" stroke-width="0.9"/>
<rect x="45.5" y="280.9666666666667" width="8" height="8" fill="#f1d66a" stroke="#b59a3a" stroke-width="0.6"/>
<path d="M46.0,288.9666666666667 L46.0,281.9666666666667 L53.0,281.9666666666667 L53.0,288.9666666666667 M46.0,285.4666666666667 L53.0,285.4666666666667" fill="none" stroke="#1a2ba8" stroke-width="1.4"/>
<text x="57.5" y="287.2666666666667" font-size="8.0" fill="#111111" text-anchor="start" font-weight="normal" textLength="19.9" lengthAdjust="spacingAndGlyphs" stroke="#111111" stroke-width="0.06">Analiz</text>
<line x1="49.0" y1="295.8" x2="56.5" y2="295.8" stroke="#a0a0a0" stroke-width="1" stroke-dasharray="1,1"/>
<rect x="45.0" y="291.8" width="8" height="8" fill="#f4f4f4" stroke="#b7bec8" stroke-width="0.8"/>
<line x1="46.8" y1="295.8" x2="51.2" y2="295.8" stroke="#4a5a8a" stroke-width="0.9"/>
<line x1="49.0" y1="293.6" x2="49.0" y2="298.0" stroke="#4a5a8a" stroke-width="0.9"/>
<path d="M56.5,292.8 L60.0,292.8 L61.0,293.8 L66.0,293.8 L66.0,299.8 L56.5,299.8 Z" fill="#f3d36b" stroke="#b59a3a" stroke-width="0.8"/>
<rect x="57.1" y="295.3" width="8.4" height="4" fill="#fbe9a2"/>
<line x1="57.5" y1="299.6" x2="65.5" y2="299.6" stroke="#d02020" stroke-width="1.4"/>
<text x="69.5" y="298.6" font-size="8.0" fill="#111111" text-anchor="start" font-weight="normal" textLength="39.8" lengthAdjust="spacingAndGlyphs" stroke="#111111" stroke-width="0.06">Statik Analiz</text>
<line x1="49.0" y1="307.1333333333333" x2="56.5" y2="307.1333333333333" stroke="#a0a0a0" stroke-width="1" stroke-dasharray="1,1"/>
<rect x="45.0" y="303.1333333333333" width="8" height="8" fill="#f4f4f4" stroke="#b7bec8" stroke-width="0.8"/>
<line x1="46.8" y1="307.1333333333333" x2="51.2" y2="307.1333333333333" stroke="#4a5a8a" stroke-width="0.9"/>
<path d="M56.5,304.1333333333333 L60.0,304.1333333333333 L61.0,305.1333333333333 L66.0,305.1333333333333 L66.0,311.1333333333333 L56.5,311.1333333333333 Z" fill="#f3d36b" stroke="#b59a3a" stroke-width="0.8"/>
<rect x="57.1" y="306.6333333333333" width="8.4" height="4" fill="#fbe9a2"/>
<path d="M59.5,304.6333333333333 L63.5,307.6333333333333 L59.5,310.6333333333333" fill="none" stroke="#111" stroke-width="1.2"/>
<line x1="57.5" y1="311.6333333333333" x2="65.5" y2="311.6333333333333" stroke="#c22" stroke-width="1"/>
<text x="69.5" y="309.93333333333334" font-size="8.0" fill="#111111" text-anchor="start" font-weight="normal" textLength="41.4" lengthAdjust="spacingAndGlyphs" stroke="#111111" stroke-width="0.06">Modal Analiz</text>
<line x1="61.0" y1="318.4666666666667" x2="68.5" y2="318.4666666666667" stroke="#a0a0a0" stroke-width="1" stroke-dasharray="1,1"/>
<rect x="57.0" y="314.4666666666667" width="8" height="8" fill="#f4f4f4" stroke="#b7bec8" stroke-width="0.8"/>
<line x1="58.8" y1="318.4666666666667" x2="63.2" y2="318.4666666666667" stroke="#4a5a8a" stroke-width="0.9"/>
<path d="M70.5,314.4666666666667 L74.5,318.4666666666667 L70.5,322.4666666666667" fill="none" stroke="#222" stroke-width="1.1"/>
<line x1="69.5" y1="323.2666666666667" x2="75.5" y2="323.2666666666667" stroke="#d01818" stroke-width="1"/>
<path d="M75.0,320.4666666666667 L77.0,321.9666666666667 L75.0,323.4666666666667" fill="none" stroke="#e02020" stroke-width="1"/>
<text x="81.5" y="321.2666666666667" font-size="8.0" fill="#111111" text-anchor="start" font-weight="normal" textLength="41.4" lengthAdjust="spacingAndGlyphs" stroke="#111111" stroke-width="0.06">Modal Analiz</text>
<line x1="73.0" y1="329.8" x2="80.5" y2="329.8" stroke="#a0a0a0" stroke-width="1" stroke-dasharray="1,1"/>
<path d="M82.5,325.8 L86.5,329.8 L82.5,333.8" fill="none" stroke="#222" stroke-width="1.1"/>
<line x1="81.5" y1="334.6" x2="87.5" y2="334.6" stroke="#d01818" stroke-width="1"/>
<path d="M87.0,331.8 L89.0,333.3 L87.0,334.8" fill="none" stroke="#e02020" stroke-width="1"/>
<text x="93.5" y="332.6" font-size="8.0" fill="#111111" text-anchor="start" font-weight="normal" textLength="30.8" lengthAdjust="spacingAndGlyphs" stroke="#111111" stroke-width="0.06">Modal E1</text>
<line x1="73.0" y1="341.1333333333333" x2="80.5" y2="341.1333333333333" stroke="#a0a0a0" stroke-width="1" stroke-dasharray="1,1"/>
<path d="M82.5,337.1333333333333 L86.5,341.1333333333333 L82.5,345.1333333333333" fill="none" stroke="#222" stroke-width="1.1"/>
<line x1="81.5" y1="345.93333333333334" x2="87.5" y2="345.93333333333334" stroke="#d01818" stroke-width="1"/>
<path d="M87.0,343.1333333333333 L89.0,344.6333333333333 L87.0,346.1333333333333" fill="none" stroke="#e02020" stroke-width="1"/>
<text x="93.5" y="343.93333333333334" font-size="8.0" fill="#111111" text-anchor="start" font-weight="normal" textLength="30.8" lengthAdjust="spacingAndGlyphs" stroke="#111111" stroke-width="0.06">Modal E2</text>
<line x1="73.0" y1="352.4666666666667" x2="80.5" y2="352.4666666666667" stroke="#a0a0a0" stroke-width="1" stroke-dasharray="1,1"/>
<path d="M82.5,348.4666666666667 L86.5,352.4666666666667 L82.5,356.4666666666667" fill="none" stroke="#222" stroke-width="1.1"/>
<line x1="81.5" y1="357.2666666666667" x2="87.5" y2="357.2666666666667" stroke="#d01818" stroke-width="1"/>
<path d="M87.0,354.4666666666667 L89.0,355.9666666666667 L87.0,357.4666666666667" fill="none" stroke="#e02020" stroke-width="1"/>
<text x="93.5" y="355.2666666666667" font-size="8.0" fill="#111111" text-anchor="start" font-weight="normal" textLength="30.8" lengthAdjust="spacingAndGlyphs" stroke="#111111" stroke-width="0.06">Modal E3</text>
<line x1="73.0" y1="363.8" x2="80.5" y2="363.8" stroke="#a0a0a0" stroke-width="1" stroke-dasharray="1,1"/>
<path d="M82.5,359.8 L86.5,363.8 L82.5,367.8" fill="none" stroke="#222" stroke-width="1.1"/>
<line x1="81.5" y1="368.6" x2="87.5" y2="368.6" stroke="#d01818" stroke-width="1"/>
<path d="M87.0,365.8 L89.0,367.3 L87.0,368.8" fill="none" stroke="#e02020" stroke-width="1"/>
<text x="93.5" y="366.6" font-size="8.0" fill="#111111" text-anchor="start" font-weight="normal" textLength="30.8" lengthAdjust="spacingAndGlyphs" stroke="#111111" stroke-width="0.06">Modal E4</text>
<line x1="73.0" y1="375.1333333333333" x2="80.5" y2="375.1333333333333" stroke="#a0a0a0" stroke-width="1" stroke-dasharray="1,1"/>
<path d="M82.5,371.1333333333333 L86.5,375.1333333333333 L82.5,379.1333333333333" fill="none" stroke="#222" stroke-width="1.1"/>
<line x1="81.5" y1="379.93333333333334" x2="87.5" y2="379.93333333333334" stroke="#d01818" stroke-width="1"/>
<path d="M87.0,377.1333333333333 L89.0,378.6333333333333 L87.0,380.1333333333333" fill="none" stroke="#e02020" stroke-width="1"/>
<text x="93.5" y="377.93333333333334" font-size="8.0" fill="#111111" text-anchor="start" font-weight="normal" textLength="35.7" lengthAdjust="spacingAndGlyphs" stroke="#111111" stroke-width="0.06">Modal BE1</text>
<line x1="73.0" y1="386.4666666666667" x2="80.5" y2="386.4666666666667" stroke="#a0a0a0" stroke-width="1" stroke-dasharray="1,1"/>
<path d="M82.5,382.4666666666667 L86.5,386.4666666666667 L82.5,390.4666666666667" fill="none" stroke="#222" stroke-width="1.1"/>
<line x1="81.5" y1="391.2666666666667" x2="87.5" y2="391.2666666666667" stroke="#d01818" stroke-width="1"/>
<path d="M87.0,388.4666666666667 L89.0,389.9666666666667 L87.0,391.4666666666667" fill="none" stroke="#e02020" stroke-width="1"/>
<text x="93.5" y="389.2666666666667" font-size="8.0" fill="#111111" text-anchor="start" font-weight="normal" textLength="35.7" lengthAdjust="spacingAndGlyphs" stroke="#111111" stroke-width="0.06">Modal BE2</text>
<line x1="73.0" y1="397.8" x2="80.5" y2="397.8" stroke="#a0a0a0" stroke-width="1" stroke-dasharray="1,1"/>
<path d="M82.5,393.8 L86.5,397.8 L82.5,401.8" fill="none" stroke="#222" stroke-width="1.1"/>
<line x1="81.5" y1="402.6" x2="87.5" y2="402.6" stroke="#d01818" stroke-width="1"/>
<path d="M87.0,399.8 L89.0,401.3 L87.0,402.8" fill="none" stroke="#e02020" stroke-width="1"/>
<text x="93.5" y="400.6" font-size="8.0" fill="#111111" text-anchor="start" font-weight="normal" textLength="35.7" lengthAdjust="spacingAndGlyphs" stroke="#111111" stroke-width="0.06">Modal BE3</text>
<line x1="73.0" y1="409.1333333333334" x2="80.5" y2="409.1333333333334" stroke="#a0a0a0" stroke-width="1" stroke-dasharray="1,1"/>
<path d="M82.5,405.1333333333334 L86.5,409.1333333333334 L82.5,413.1333333333334" fill="none" stroke="#222" stroke-width="1.1"/>
<line x1="81.5" y1="413.9333333333334" x2="87.5" y2="413.9333333333334" stroke="#d01818" stroke-width="1"/>
<path d="M87.0,411.1333333333334 L89.0,412.6333333333334 L87.0,414.1333333333334" fill="none" stroke="#e02020" stroke-width="1"/>
<text x="93.5" y="411.9333333333334" font-size="8.0" fill="#111111" text-anchor="start" font-weight="normal" textLength="35.7" lengthAdjust="spacingAndGlyphs" stroke="#111111" stroke-width="0.06">Modal BE4</text>
<line x1="49.0" y1="420.4666666666667" x2="56.5" y2="420.4666666666667" stroke="#a0a0a0" stroke-width="1" stroke-dasharray="1,1"/>
<rect x="45.0" y="416.4666666666667" width="8" height="8" fill="#f4f4f4" stroke="#b7bec8" stroke-width="0.8"/>
<line x1="46.8" y1="420.4666666666667" x2="51.2" y2="420.4666666666667" stroke="#4a5a8a" stroke-width="0.9"/>
<path d="M56.5,417.4666666666667 L60.0,417.4666666666667 L61.0,418.4666666666667 L66.0,418.4666666666667 L66.0,424.4666666666667 L56.5,424.4666666666667 Z" fill="#e9d27a" stroke="#8a7a2a" stroke-width="0.8"/>
<rect x="57.1" y="419.9666666666667" width="8.4" height="4" fill="#fbe9a2"/>
<path d="M57.5,424.4666666666667 L59.5,420.4666666666667 L67.0,420.4666666666667 L65.5,424.4666666666667 Z" fill="#f7e9a8" stroke="#8a7a2a" stroke-width="0.6"/>
<text x="69.5" y="423.2666666666667" font-size="8.0" fill="#111111" text-anchor="start" font-weight="normal" textLength="86.4" lengthAdjust="spacingAndGlyphs" stroke="#111111" stroke-width="0.06">Tasarım Spektrumu Analizi</text>
<line x1="61.0" y1="431.8" x2="68.5" y2="431.8" stroke="#a0a0a0" stroke-width="1" stroke-dasharray="1,1"/>
<rect x="57.0" y="427.8" width="8" height="8" fill="#f4f4f4" stroke="#b7bec8" stroke-width="0.8"/>
<line x1="58.8" y1="431.8" x2="63.2" y2="431.8" stroke="#4a5a8a" stroke-width="0.9"/>
<path d="M69.0,428.3 L69.0,436.3 L78.0,436.3" fill="none" stroke="#222" stroke-width="0.9"/>
<path d="M69.5,434.3 Q71.5,429.3 73.5,431.3 T77.5,435.3" fill="none" stroke="#d02020" stroke-width="1"/>
<line x1="76.5" y1="427.3" x2="76.5" y2="430.8" stroke="#e02020" stroke-width="0.9"/>
<line x1="74.8" y1="429.0" x2="78.2" y2="429.0" stroke="#e02020" stroke-width="0.9"/>
<text x="81.5" y="434.6" font-size="8.0" fill="#111111" text-anchor="start" font-weight="normal" textLength="63.3" lengthAdjust="spacingAndGlyphs" stroke="#111111" stroke-width="0.06">Tasarım Spektrumu</text>
<line x1="73.0" y1="443.1333333333334" x2="80.5" y2="443.1333333333334" stroke="#a0a0a0" stroke-width="1" stroke-dasharray="1,1"/>
<path d="M81.0,439.6333333333334 L81.0,447.6333333333334 L90.0,447.6333333333334" fill="none" stroke="#222" stroke-width="0.9"/>
<path d="M81.5,445.6333333333334 Q83.5,440.6333333333334 85.5,442.6333333333334 T89.5,446.6333333333334" fill="none" stroke="#d02020" stroke-width="1"/>
<text x="93.5" y="445.9333333333334" font-size="8.0" fill="#111111" text-anchor="start" font-weight="normal" textLength="18.7" lengthAdjust="spacingAndGlyphs" stroke="#111111" stroke-width="0.06">DSF1</text>
<line x1="61.0" y1="454.4666666666667" x2="68.5" y2="454.4666666666667" stroke="#a0a0a0" stroke-width="1" stroke-dasharray="1,1"/>
<rect x="57.0" y="450.4666666666667" width="8" height="8" fill="#f4f4f4" stroke="#b7bec8" stroke-width="0.8"/>
<line x1="58.8" y1="454.4666666666667" x2="63.2" y2="454.4666666666667" stroke="#4a5a8a" stroke-width="0.9"/>
<path d="M69.0,450.9666666666667 L69.0,458.9666666666667 L78.0,458.9666666666667" fill="none" stroke="#1d2d9a" stroke-width="0.9"/>
<path d="M69.5,456.9666666666667 Q71.5,451.9666666666667 73.5,453.9666666666667 T77.5,457.9666666666667" fill="none" stroke="#d02020" stroke-width="1"/>
<line x1="76.5" y1="449.9666666666667" x2="76.5" y2="453.4666666666667" stroke="#e02020" stroke-width="0.9"/>
<line x1="74.8" y1="451.6666666666667" x2="78.2" y2="451.6666666666667" stroke="#e02020" stroke-width="0.9"/>
<text x="81.5" y="457.2666666666667" font-size="8.0" fill="#111111" text-anchor="start" font-weight="normal" textLength="97.4" lengthAdjust="spacingAndGlyphs" stroke="#111111" stroke-width="0.06">Tasarım Spektrumu Durumları</text>
<line x1="73.0" y1="465.8" x2="80.5" y2="465.8" stroke="#a0a0a0" stroke-width="1" stroke-dasharray="1,1"/>
<path d="M81.0,462.3 L81.0,470.3 L90.0,470.3" fill="none" stroke="#1d2d9a" stroke-width="0.9"/>
<path d="M81.5,468.3 Q83.5,463.3 85.5,465.3 T89.5,469.3" fill="none" stroke="#d02020" stroke-width="1"/>
<line x1="88.5" y1="461.3" x2="88.5" y2="464.8" stroke="#e02020" stroke-width="0.9"/>
<line x1="86.8" y1="463.0" x2="90.2" y2="463.0" stroke="#e02020" stroke-width="0.9"/>
<text x="93.5" y="468.6" font-size="8.0" fill="#111111" text-anchor="start" font-weight="normal" textLength="8.5" lengthAdjust="spacingAndGlyphs" stroke="#111111" stroke-width="0.06">Ex</text>
<line x1="73.0" y1="477.1333333333334" x2="80.5" y2="477.1333333333334" stroke="#a0a0a0" stroke-width="1" stroke-dasharray="1,1"/>
<path d="M81.0,473.6333333333334 L81.0,481.6333333333334 L90.0,481.6333333333334" fill="none" stroke="#1d2d9a" stroke-width="0.9"/>
<path d="M81.5,479.6333333333334 Q83.5,474.6333333333334 85.5,476.6333333333334 T89.5,480.6333333333334" fill="none" stroke="#d02020" stroke-width="1"/>
<line x1="88.5" y1="472.6333333333334" x2="88.5" y2="476.1333333333334" stroke="#e02020" stroke-width="0.9"/>
<line x1="86.8" y1="474.33333333333337" x2="90.2" y2="474.33333333333337" stroke="#e02020" stroke-width="0.9"/>
<text x="93.5" y="479.9333333333334" font-size="8.0" fill="#111111" text-anchor="start" font-weight="normal" textLength="8.5" lengthAdjust="spacingAndGlyphs" stroke="#111111" stroke-width="0.06">Ey</text>
<line x1="73.0" y1="488.4666666666667" x2="80.5" y2="488.4666666666667" stroke="#a0a0a0" stroke-width="1" stroke-dasharray="1,1"/>
<path d="M81.0,484.9666666666667 L81.0,492.9666666666667 L90.0,492.9666666666667" fill="none" stroke="#1d2d9a" stroke-width="0.9"/>
<path d="M81.5,490.9666666666667 Q83.5,485.9666666666667 85.5,487.9666666666667 T89.5,491.9666666666667" fill="none" stroke="#d02020" stroke-width="1"/>
<line x1="88.5" y1="483.9666666666667" x2="88.5" y2="487.4666666666667" stroke="#e02020" stroke-width="0.9"/>
<line x1="86.8" y1="485.6666666666667" x2="90.2" y2="485.6666666666667" stroke="#e02020" stroke-width="0.9"/>
<text x="93.5" y="491.2666666666667" font-size="8.0" fill="#111111" text-anchor="start" font-weight="normal" textLength="9.9" lengthAdjust="spacingAndGlyphs" stroke="#111111" stroke-width="0.06">Ex'</text>
<line x1="73.0" y1="499.8" x2="80.5" y2="499.8" stroke="#a0a0a0" stroke-width="1" stroke-dasharray="1,1"/>
<path d="M81.0,496.3 L81.0,504.3 L90.0,504.3" fill="none" stroke="#1d2d9a" stroke-width="0.9"/>
<path d="M81.5,502.3 Q83.5,497.3 85.5,499.3 T89.5,503.3" fill="none" stroke="#d02020" stroke-width="1"/>
<line x1="88.5" y1="495.3" x2="88.5" y2="498.8" stroke="#e02020" stroke-width="0.9"/>
<line x1="86.8" y1="497.0" x2="90.2" y2="497.0" stroke="#e02020" stroke-width="0.9"/>
<text x="93.5" y="502.6" font-size="8.0" fill="#111111" text-anchor="start" font-weight="normal" textLength="9.9" lengthAdjust="spacingAndGlyphs" stroke="#111111" stroke-width="0.06">Ey'</text>
<line x1="73.0" y1="511.1333333333334" x2="80.5" y2="511.1333333333334" stroke="#a0a0a0" stroke-width="1" stroke-dasharray="1,1"/>
<path d="M81.0,507.6333333333334 L81.0,515.6333333333334 L90.0,515.6333333333334" fill="none" stroke="#1d2d9a" stroke-width="0.9"/>
<path d="M81.5,513.6333333333334 Q83.5,508.6333333333334 85.5,510.6333333333334 T89.5,514.6333333333334" fill="none" stroke="#d02020" stroke-width="1"/>
<line x1="88.5" y1="506.6333333333334" x2="88.5" y2="510.1333333333334" stroke="#e02020" stroke-width="0.9"/>
<line x1="86.8" y1="508.33333333333337" x2="90.2" y2="508.33333333333337" stroke="#e02020" stroke-width="0.9"/>
<text x="93.5" y="513.9333333333334" font-size="8.0" fill="#111111" text-anchor="start" font-weight="normal" textLength="13.4" lengthAdjust="spacingAndGlyphs" stroke="#111111" stroke-width="0.06">ExB</text>
<line x1="73.0" y1="522.4666666666667" x2="80.5" y2="522.4666666666667" stroke="#a0a0a0" stroke-width="1" stroke-dasharray="1,1"/>
<path d="M81.0,518.9666666666667 L81.0,526.9666666666667 L90.0,526.9666666666667" fill="none" stroke="#1d2d9a" stroke-width="0.9"/>
<path d="M81.5,524.9666666666667 Q83.5,519.9666666666667 85.5,521.9666666666667 T89.5,525.9666666666667" fill="none" stroke="#d02020" stroke-width="1"/>
<line x1="88.5" y1="517.9666666666667" x2="88.5" y2="521.4666666666667" stroke="#e02020" stroke-width="0.9"/>
<line x1="86.8" y1="519.6666666666667" x2="90.2" y2="519.6666666666667" stroke="#e02020" stroke-width="0.9"/>
<text x="93.5" y="525.2666666666667" font-size="8.0" fill="#111111" text-anchor="start" font-weight="normal" textLength="14.8" lengthAdjust="spacingAndGlyphs" stroke="#111111" stroke-width="0.06">ExB'</text>
<line x1="73.0" y1="533.8" x2="80.5" y2="533.8" stroke="#a0a0a0" stroke-width="1" stroke-dasharray="1,1"/>
<path d="M81.0,530.3 L81.0,538.3 L90.0,538.3" fill="none" stroke="#1d2d9a" stroke-width="0.9"/>
<path d="M81.5,536.3 Q83.5,531.3 85.5,533.3 T89.5,537.3" fill="none" stroke="#d02020" stroke-width="1"/>
<line x1="88.5" y1="529.3" x2="88.5" y2="532.8" stroke="#e02020" stroke-width="0.9"/>
<line x1="86.8" y1="531.0" x2="90.2" y2="531.0" stroke="#e02020" stroke-width="0.9"/>
<text x="93.5" y="536.5999999999999" font-size="8.0" fill="#111111" text-anchor="start" font-weight="normal" textLength="13.4" lengthAdjust="spacingAndGlyphs" stroke="#111111" stroke-width="0.06">EyB</text>
<line x1="73.0" y1="545.1333333333333" x2="80.5" y2="545.1333333333333" stroke="#a0a0a0" stroke-width="1" stroke-dasharray="1,1"/>
<path d="M81.0,541.6333333333333 L81.0,549.6333333333333 L90.0,549.6333333333333" fill="none" stroke="#1d2d9a" stroke-width="0.9"/>
<path d="M81.5,547.6333333333333 Q83.5,542.6333333333333 85.5,544.6333333333333 T89.5,548.6333333333333" fill="none" stroke="#d02020" stroke-width="1"/>
<line x1="88.5" y1="540.6333333333333" x2="88.5" y2="544.1333333333333" stroke="#e02020" stroke-width="0.9"/>
<line x1="86.8" y1="542.3333333333334" x2="90.2" y2="542.3333333333334" stroke="#e02020" stroke-width="0.9"/>
<text x="93.5" y="547.9333333333333" font-size="8.0" fill="#111111" text-anchor="start" font-weight="normal" textLength="14.8" lengthAdjust="spacingAndGlyphs" stroke="#111111" stroke-width="0.06">EyB'</text>
<line x1="49.0" y1="556.4666666666667" x2="56.5" y2="556.4666666666667" stroke="#a0a0a0" stroke-width="1" stroke-dasharray="1,1"/>
<rect x="45.0" y="552.4666666666667" width="8" height="8" fill="#f4f4f4" stroke="#b7bec8" stroke-width="0.8"/>
<line x1="46.8" y1="556.4666666666667" x2="51.2" y2="556.4666666666667" stroke="#4a5a8a" stroke-width="0.9"/>
<path d="M56.5,553.4666666666667 L60.0,553.4666666666667 L61.0,554.4666666666667 L66.0,554.4666666666667 L66.0,560.4666666666667 L56.5,560.4666666666667 Z" fill="#e9d27a" stroke="#8a7a2a" stroke-width="0.8"/>
<rect x="57.1" y="555.9666666666667" width="8.4" height="4" fill="#fbe9a2"/>
<path d="M57.5,560.4666666666667 L59.5,556.4666666666667 L67.0,556.4666666666667 L65.5,560.4666666666667 Z" fill="#f7e9a8" stroke="#8a7a2a" stroke-width="0.6"/>
<text x="69.5" y="559.2666666666667" font-size="8.0" fill="#111111" text-anchor="start" font-weight="normal" textLength="85.9" lengthAdjust="spacingAndGlyphs" stroke="#111111" stroke-width="0.06">Zaman Tanım Alanı Analizi</text>
<line x1="61.0" y1="567.8" x2="68.5" y2="567.8" stroke="#a0a0a0" stroke-width="1" stroke-dasharray="1,1"/>
<path d="M69.0,564.3 L69.0,572.3 L78.0,572.3 M70.0,570.3 L71.5,566.3 L73.0,571.3 L74.5,565.3 L76.0,569.3" fill="none" stroke="#c01818" stroke-width="0.9"/>
<text x="81.5" y="570.5999999999999" font-size="8.0" fill="#111111" text-anchor="start" font-weight="normal" textLength="108.2" lengthAdjust="spacingAndGlyphs" stroke="#111111" stroke-width="0.06">Zaman Tanım Alanı Fonksiyonları</text>
<line x1="61.0" y1="579.1333333333333" x2="68.5" y2="579.1333333333333" stroke="#a0a0a0" stroke-width="1" stroke-dasharray="1,1"/>
<path d="M69.0,575.6333333333333 L69.0,583.6333333333333 L78.0,583.6333333333333 M70.0,581.6333333333333 L71.5,577.6333333333333 L73.0,582.6333333333333 L74.5,576.6333333333333 L76.0,580.6333333333333" fill="none" stroke="#2a3ab0" stroke-width="0.9"/>
<text x="81.5" y="581.9333333333333" font-size="8.0" fill="#111111" text-anchor="start" font-weight="normal" textLength="96.8" lengthAdjust="spacingAndGlyphs" stroke="#111111" stroke-width="0.06">Zaman Tanım Alanı Durumları</text>
<line x1="49.0" y1="590.4666666666667" x2="56.5" y2="590.4666666666667" stroke="#a0a0a0" stroke-width="1" stroke-dasharray="1,1"/>
<path d="M56.5,587.4666666666667 L60.0,587.4666666666667 L61.0,588.4666666666667 L66.0,588.4666666666667 L66.0,594.4666666666667 L56.5,594.4666666666667 Z" fill="#f3d36b" stroke="#b59a3a" stroke-width="0.8"/>
<rect x="57.1" y="589.9666666666667" width="8.4" height="4" fill="#fbe9a2"/>
<rect x="58.5" y="588.9666666666667" width="6" height="3" fill="#e03030"/>
<text x="69.5" y="593.2666666666667" font-size="8.0" fill="#111111" text-anchor="start" font-weight="normal" textLength="70.6" lengthAdjust="spacingAndGlyphs" stroke="#111111" stroke-width="0.06">Nonlineer İtme Analizi</text>
<line x1="49.0" y1="601.8" x2="56.5" y2="601.8" stroke="#a0a0a0" stroke-width="1" stroke-dasharray="1,1"/>
<path d="M56.5,598.8 L60.0,598.8 L61.0,599.8 L66.0,599.8 L66.0,605.8 L56.5,605.8 Z" fill="#f3d36b" stroke="#b59a3a" stroke-width="0.8"/>
<rect x="57.1" y="601.3" width="8.4" height="4" fill="#fbe9a2"/>
<line x1="59.5" y1="600.3" x2="62.5" y2="605.3" stroke="#111" stroke-width="1"/>
<text x="69.5" y="604.5999999999999" font-size="8.0" fill="#111111" text-anchor="start" font-weight="normal" textLength="73.0" lengthAdjust="spacingAndGlyphs" stroke="#111111" stroke-width="0.06">Euler Burkulma Analizi</text>
<line x1="49.0" y1="613.1333333333333" x2="56.5" y2="613.1333333333333" stroke="#a0a0a0" stroke-width="1" stroke-dasharray="1,1"/>
<rect x="45.0" y="609.1333333333333" width="8" height="8" fill="#f4f4f4" stroke="#b7bec8" stroke-width="0.8"/>
<line x1="46.8" y1="613.1333333333333" x2="51.2" y2="613.1333333333333" stroke="#4a5a8a" stroke-width="0.9"/>
<line x1="49.0" y1="610.9333333333333" x2="49.0" y2="615.3333333333334" stroke="#4a5a8a" stroke-width="0.9"/>
<path d="M56.5,610.1333333333333 L60.0,610.1333333333333 L61.0,611.1333333333333 L66.0,611.1333333333333 L66.0,617.1333333333333 L56.5,617.1333333333333 Z" fill="#f3d36b" stroke="#b59a3a" stroke-width="0.8"/>
<rect x="57.1" y="612.6333333333333" width="8.4" height="4" fill="#fbe9a2"/>
<rect x="59.5" y="612.6333333333333" width="6" height="3" fill="#d04040"/>
<text x="69.5" y="615.9333333333333" font-size="8.0" fill="#111111" text-anchor="start" font-weight="normal" textLength="84.8" lengthAdjust="spacingAndGlyphs" stroke="#111111" stroke-width="0.06">Yükleme Kombinasyonları</text>
<line x1="37.0" y1="624.4666666666667" x2="44.5" y2="624.4666666666667" stroke="#a0a0a0" stroke-width="1" stroke-dasharray="1,1"/>
<rect x="33.0" y="620.4666666666667" width="8" height="8" fill="#f4f4f4" stroke="#b7bec8" stroke-width="0.8"/>
<line x1="34.8" y1="624.4666666666667" x2="39.2" y2="624.4666666666667" stroke="#4a5a8a" stroke-width="0.9"/>
<rect x="46.5" y="621.9666666666667" width="7" height="7" fill="#ccc" stroke="#222" stroke-width="0.9"/>
<rect x="45.0" y="623.4666666666667" width="6" height="6" fill="#fff" stroke="#222" stroke-width="0.9"/>
<text x="57.5" y="627.2666666666667" font-size="8.0" fill="#111111" text-anchor="start" font-weight="normal" textLength="26.4" lengthAdjust="spacingAndGlyphs" stroke="#111111" stroke-width="0.06">Çizimler</text>
<line x1="49.0" y1="635.8" x2="56.5" y2="635.8" stroke="#a0a0a0" stroke-width="1" stroke-dasharray="1,1"/>
<path d="M58.0,631.8 L63.0,631.8 L65.5,634.3 L65.5,640.8 L58.0,640.8 Z" fill="#fff" stroke="#222" stroke-width="0.9"/>
<text x="69.5" y="638.5999999999999" font-size="8.0" fill="#111111" text-anchor="start" font-weight="normal" textLength="52.3" lengthAdjust="spacingAndGlyphs" stroke="#111111" stroke-width="0.06">MERDİVEN EVİ</text>
<line x1="49.0" y1="647.1333333333333" x2="56.5" y2="647.1333333333333" stroke="#a0a0a0" stroke-width="1" stroke-dasharray="1,1"/>
<path d="M58.0,643.1333333333333 L63.0,643.1333333333333 L65.5,645.6333333333333 L65.5,652.1333333333333 L58.0,652.1333333333333 Z" fill="#fff" stroke="#222" stroke-width="0.9"/>
<text x="69.5" y="649.9333333333333" font-size="8.0" fill="#111111" text-anchor="start" font-weight="normal" textLength="19.7" lengthAdjust="spacingAndGlyphs" stroke="#111111" stroke-width="0.06">2.KAT</text>
<line x1="49.0" y1="658.4666666666667" x2="56.5" y2="658.4666666666667" stroke="#a0a0a0" stroke-width="1" stroke-dasharray="1,1"/>
<path d="M58.0,654.4666666666667 L63.0,654.4666666666667 L65.5,656.9666666666667 L65.5,663.4666666666667 L58.0,663.4666666666667 Z" fill="#fff" stroke="#222" stroke-width="0.9"/>
<text x="69.5" y="661.2666666666667" font-size="8.0" fill="#111111" text-anchor="start" font-weight="normal" textLength="21.8" lengthAdjust="spacingAndGlyphs" stroke="#111111" stroke-width="0.06">1. KAT</text>
<line x1="49.0" y1="669.8" x2="56.5" y2="669.8" stroke="#a0a0a0" stroke-width="1" stroke-dasharray="1,1"/>
<rect x="45.0" y="665.8" width="8" height="8" fill="#f4f4f4" stroke="#b7bec8" stroke-width="0.8"/>
<line x1="46.8" y1="669.8" x2="51.2" y2="669.8" stroke="#4a5a8a" stroke-width="0.9"/>
<path d="M58.0,665.8 L63.0,665.8 L65.5,668.3 L65.5,674.8 L58.0,674.8 Z" fill="#fff" stroke="#222" stroke-width="0.9"/>
<text x="69.5" y="672.5999999999999" font-size="8.0" fill="#111111" text-anchor="start" font-weight="normal" textLength="38.4" lengthAdjust="spacingAndGlyphs" stroke="#111111" stroke-width="0.06">ZEMİN KAT</text>
<line x1="61.0" y1="681.1333333333333" x2="68.5" y2="681.1333333333333" stroke="#a0a0a0" stroke-width="1" stroke-dasharray="1,1"/>
<rect x="69.5" y="677.1333333333333" width="8" height="9" fill="#fff" stroke="#222" stroke-width="1"/>
<rect x="71.0" y="678.6333333333333" width="4.5" height="2.5" fill="#222"/>
<rect x="71.0" y="682.6333333333333" width="4.5" height="2.5" fill="#222"/>
<line x1="76.5" y1="683.6333333333333" x2="76.5" y2="686.1333333333333" stroke="#d02020" stroke-width="0.8"/>
<text x="81.5" y="683.9333333333333" font-size="8.0" fill="#111111" text-anchor="start" font-weight="normal" textLength="64.1" lengthAdjust="spacingAndGlyphs" stroke="#111111" stroke-width="0.06">Kesit 1 / 1-1 KESİTİ</text>
<line x1="49.0" y1="692.4666666666667" x2="56.5" y2="692.4666666666667" stroke="#a0a0a0" stroke-width="1" stroke-dasharray="1,1"/>
<path d="M58.0,688.4666666666667 L63.0,688.4666666666667 L65.5,690.9666666666667 L65.5,697.4666666666667 L58.0,697.4666666666667 Z" fill="#fff" stroke="#222" stroke-width="0.9"/>
<text x="69.5" y="695.2666666666667" font-size="8.0" fill="#111111" text-anchor="start" font-weight="normal" textLength="48.1" lengthAdjust="spacingAndGlyphs" stroke="#111111" stroke-width="0.06">BODRUM KAT</text>
</g></svg>
<rect x="173.2" y="107" width="962" height="561" fill="#d0d5de"/>
<rect x="177" y="108" width="479.3" height="279" fill="#000"/>
<rect x="660" y="108" width="474.3" height="279" fill="#000"/>
<rect x="177" y="390.3" width="479.3" height="274.7" fill="#000"/>
<rect x="660" y="390.3" width="474.3" height="274.7" fill="#000"/>
<rect x="656.3" y="108" width="3.7" height="557" fill="#cdd1dc"/>
<rect x="177" y="387" width="957.3" height="3.3" fill="#cdd1dc"/>
<rect x="644.8" y="108.3" width="10.2" height="9" fill="#e6e6e6" stroke="#9a9a9a" stroke-width="0.5"/>
<path d="M646.4,116 L649.9,110 L653.4,116" fill="none" stroke="#333" stroke-width="0.9"/>
<rect x="1101.4" y="108.3" width="10.2" height="9" fill="#e6e6e6" stroke="#9a9a9a" stroke-width="0.5"/>
<path d="M1103.0,110 L1110.0,110 L1106.5,116" fill="none" stroke="#333" stroke-width="0.9"/>
<rect x="1112.1000000000001" y="108.3" width="10.2" height="9" fill="#e6e6e6" stroke="#9a9a9a" stroke-width="0.5"/>
<path d="M1114.7,116 L1114.7,110 L1119.7,116 L1119.7,110" fill="none" stroke="#333" stroke-width="0.9"/>
<rect x="1122.8000000000002" y="108.3" width="10.2" height="9" fill="#e6e6e6" stroke="#9a9a9a" stroke-width="0.5"/>
<path d="M1124.4,116 L1127.9,110 L1131.4,116" fill="none" stroke="#333" stroke-width="0.9"/>
<rect x="623.4" y="390.8" width="10.2" height="9" fill="#e6e6e6" stroke="#9a9a9a" stroke-width="0.5"/>
<path d="M625.0,392.5 L632.0,392.5 L628.5,398.5" fill="none" stroke="#333" stroke-width="0.9"/>
<rect x="634.1" y="390.8" width="10.2" height="9" fill="#e6e6e6" stroke="#9a9a9a" stroke-width="0.5"/>
<path d="M636.7,398.5 L636.7,392.5 L641.7,398.5 L641.7,392.5" fill="none" stroke="#333" stroke-width="0.9"/>
<rect x="644.8" y="390.8" width="10.2" height="9" fill="#e6e6e6" stroke="#9a9a9a" stroke-width="0.5"/>
<path d="M646.4,398.5 L649.9,392.5 L653.4,398.5" fill="none" stroke="#333" stroke-width="0.9"/>
<rect x="1101.4" y="390.8" width="10.2" height="9" fill="#e6e6e6" stroke="#9a9a9a" stroke-width="0.5"/>
<path d="M1103.0,392.5 L1110.0,392.5 L1106.5,398.5" fill="none" stroke="#333" stroke-width="0.9"/>
<rect x="1112.1000000000001" y="390.8" width="10.2" height="9" fill="#e6e6e6" stroke="#9a9a9a" stroke-width="0.5"/>
<path d="M1114.7,398.5 L1114.7,392.5 L1119.7,398.5 L1119.7,392.5" fill="none" stroke="#333" stroke-width="0.9"/>
<rect x="1122.8000000000002" y="390.8" width="10.2" height="9" fill="#e6e6e6" stroke="#9a9a9a" stroke-width="0.5"/>
<path d="M1124.4,398.5 L1127.9,392.5 L1131.4,398.5" fill="none" stroke="#333" stroke-width="0.9"/>
<text x="663" y="117" font-size="9" fill="#d00000" text-anchor="start" font-weight="normal" textLength="10" lengthAdjust="spacingAndGlyphs" stroke="#d00000" stroke-width="0.06">Ön</text>
<text x="179.7" y="400" font-size="8.6" fill="#5a5a5a" text-anchor="start" font-weight="normal" textLength="34" lengthAdjust="spacingAndGlyphs" stroke="#5a5a5a" stroke-width="0.06">Perspektif</text>
<text x="662" y="399.5" font-size="8.6" fill="#4a4a4a" text-anchor="start" font-weight="normal" textLength="44" lengthAdjust="spacingAndGlyphs" stroke="#4a4a4a" stroke-width="0.06">Analiz Modeli</text>
<rect x="173.5" y="668" width="961.5" height="38" fill="#f0f0f0"/>
<line x1="174" y1="668" x2="174" y2="706" stroke="#a8aeb8" stroke-width="1"/>
<text x="175.8" y="676.0" font-size="7.8" fill="#222" text-anchor="start" font-weight="normal" textLength="19.2" lengthAdjust="spacingAndGlyphs" stroke="#222" stroke-width="0.06">*İptal*</text>
<text x="175.8" y="684.2" font-size="7.8" fill="#222" text-anchor="start" font-weight="normal" textLength="24.8" lengthAdjust="spacingAndGlyphs" stroke="#222" stroke-width="0.06">Komut :</text>
<text x="175.8" y="692.4" font-size="7.8" fill="#222" text-anchor="start" font-weight="normal" textLength="19.2" lengthAdjust="spacingAndGlyphs" stroke="#222" stroke-width="0.06">*İptal*</text>
<text x="175.8" y="700.6" font-size="7.8" fill="#222" text-anchor="start" font-weight="normal" textLength="24.8" lengthAdjust="spacingAndGlyphs" stroke="#222" stroke-width="0.06">Komut :</text>
<rect x="17" y="706" width="1118" height="13" fill="url(#gStat)"/>
<line x1="17" y1="706.5" x2="1135" y2="706.5" stroke="#aab0ba" stroke-width="0.8"/>
<line x1="179" y1="707" x2="179" y2="719" stroke="#9aa0aa" stroke-width="0.8"/>
<line x1="180" y1="707" x2="180" y2="719" stroke="#eef0f3" stroke-width="0.6"/>
<line x1="981.3" y1="707" x2="981.3" y2="719" stroke="#9aa0aa" stroke-width="0.8"/>
<line x1="982.3" y1="707" x2="982.3" y2="719" stroke="#eef0f3" stroke-width="0.6"/>
<line x1="1028.8" y1="707" x2="1028.8" y2="719" stroke="#9aa0aa" stroke-width="0.8"/>
<line x1="1029.8" y1="707" x2="1029.8" y2="719" stroke="#eef0f3" stroke-width="0.6"/>
<line x1="1076.3" y1="707" x2="1076.3" y2="719" stroke="#9aa0aa" stroke-width="0.8"/>
<line x1="1077.3" y1="707" x2="1077.3" y2="719" stroke="#eef0f3" stroke-width="0.6"/>
<line x1="1124.3" y1="707" x2="1124.3" y2="719" stroke="#9aa0aa" stroke-width="0.8"/>
<line x1="1125.3" y1="707" x2="1125.3" y2="719" stroke="#eef0f3" stroke-width="0.6"/>
<text x="20" y="716" font-size="8.2" fill="#40444c" text-anchor="start" font-weight="normal" textLength="14" lengthAdjust="spacingAndGlyphs" stroke="#40444c" stroke-width="0.06">BOŞ</text>
<text x="181.5" y="716" font-size="8.2" fill="#40444c" text-anchor="start" font-weight="normal" textLength="17" lengthAdjust="spacingAndGlyphs" stroke="#40444c" stroke-width="0.06">Hazır</text>
<text x="984" y="716" font-size="8.2" fill="#40444c" text-anchor="start" font-weight="normal" textLength="17" lengthAdjust="spacingAndGlyphs" stroke="#40444c" stroke-width="0.06">tf / m</text>
<text x="1034" y="716" font-size="8.2" fill="#40444c" text-anchor="start" font-weight="normal" textLength="21" lengthAdjust="spacingAndGlyphs" stroke="#40444c" stroke-width="0.06">1 : 100</text>
<text x="1081" y="716" font-size="8.2" fill="#40444c" text-anchor="start" font-weight="normal" textLength="16" lengthAdjust="spacingAndGlyphs" stroke="#40444c" stroke-width="0.06">% 27</text>
<rect x="1137.3" y="109.6" width="13.2" height="72.4" rx="1" fill="url(#gYel)" stroke="#e9cf7f" stroke-width="0.6"/>
<text x="0" y="0" font-size="7.4" fill="#7a6440" transform="translate(1141.3,112.5) rotate(90)" textLength="64" lengthAdjust="spacingAndGlyphs">Rapor Önizleme</text>
<rect x="1151.2" y="107.4" width="14.6" height="290.4" rx="2" fill="url(#gCol)" stroke="#c9cfd8" stroke-width="0.6"/>
<rect x="1154.7" y="109.4" width="1" height="1" fill="#8a909a"/>
<rect x="1156.9" y="109.4" width="1" height="1" fill="#8a909a"/>
<rect x="1159.1000000000001" y="109.4" width="1" height="1" fill="#8a909a"/>
<rect x="1161.3" y="109.4" width="1" height="1" fill="#8a909a"/>
<path d="M1151.2,387.8 L1165.8,387.8 L1165.8,395.8 Q1165.8,397.8 1163.8,397.8 L1153.2,397.8 Q1151.2,397.8 1151.2,395.8 Z" fill="#b6bcc6"/>
<path d="M1160.2,391.8 L1163.2,391.8 L1161.7,394.3 Z" fill="#fff"/>
<rect x="1167.3" y="107.4" width="14.6" height="297.0" rx="2" fill="url(#gCol)" stroke="#c9cfd8" stroke-width="0.6"/>
<rect x="1170.8" y="109.4" width="1" height="1" fill="#8a909a"/>
<rect x="1173.0" y="109.4" width="1" height="1" fill="#8a909a"/>
<rect x="1175.2" y="109.4" width="1" height="1" fill="#8a909a"/>
<rect x="1177.3999999999999" y="109.4" width="1" height="1" fill="#8a909a"/>
<path d="M1167.3,394.4 L1181.8999999999999,394.4 L1181.8999999999999,402.4 Q1181.8999999999999,404.4 1179.8999999999999,404.4 L1169.3,404.4 Q1167.3,404.4 1167.3,402.4 Z" fill="#b6bcc6"/>
<path d="M1176.3,398.4 L1179.3,398.4 L1177.8,400.9 Z" fill="#fff"/>
<rect x="1167.3" y="407.8" width="14.6" height="196.2" rx="2" fill="url(#gCol)" stroke="#c9cfd8" stroke-width="0.6"/>
<rect x="1170.8" y="409.8" width="1" height="1" fill="#8a909a"/>
<rect x="1173.0" y="409.8" width="1" height="1" fill="#8a909a"/>
<rect x="1175.2" y="409.8" width="1" height="1" fill="#8a909a"/>
<rect x="1177.3999999999999" y="409.8" width="1" height="1" fill="#8a909a"/>
<path d="M1167.3,594 L1181.8999999999999,594 L1181.8999999999999,602 Q1181.8999999999999,604 1179.8999999999999,604 L1169.3,604 Q1167.3,604 1167.3,602 Z" fill="#b6bcc6"/>
<path d="M1176.3,598 L1179.3,598 L1177.8,600.5 Z" fill="#fff"/>
<rect x="1183.4" y="107.4" width="14.6" height="593.6" rx="2" fill="url(#gCol)" stroke="#c9cfd8" stroke-width="0.6"/>
<rect x="1186.9" y="109.4" width="1" height="1" fill="#8a909a"/>
<rect x="1189.1000000000001" y="109.4" width="1" height="1" fill="#8a909a"/>
<rect x="1191.3000000000002" y="109.4" width="1" height="1" fill="#8a909a"/>
<rect x="1193.5" y="109.4" width="1" height="1" fill="#8a909a"/>
<path d="M1183.4,691 L1198.0,691 L1198.0,699 Q1198.0,701 1196.0,701 L1185.4,701 Q1183.4,701 1183.4,699 Z" fill="#b6bcc6"/>
<path d="M1192.4,695 L1195.4,695 L1193.9,697.5 Z" fill="#fff"/>
<rect x="1153.5" y="114.4" width="10" height="8" fill="#fff" stroke="#333" stroke-width="0.9"/>
<line x1="1153.5" y1="118.4" x2="1163.5" y2="118.4" stroke="#333" stroke-width="0.8"/>
<line x1="1158.5" y1="114.4" x2="1158.5" y2="122.4" stroke="#333" stroke-width="0.8"/>
<rect x="1153.5" y="127.65" width="8" height="7" fill="#888" stroke="#222" stroke-width="0.8"/>
<path d="M1158.5,132.65 L1163.5,136.65 L1159.5,136.65Z" fill="#1a2aa0"/>
<line x1="1154.5" y1="139.9" x2="1154.5" y2="149.9" stroke="#222" stroke-width="1.4"/>
<line x1="1154.5" y1="148.9" x2="1162.5" y2="148.9" stroke="#222" stroke-width="1.2"/>
<path d="M1158.5,144.9 L1163.5,149.9 L1158.5,149.9Z" fill="#2233aa"/>
<rect x="1153.5" y="155.15" width="10" height="6" fill="#ddd" stroke="#333" stroke-width="0.9"/>
<line x1="1155.5" y1="158.15" x2="1161.5" y2="158.15" stroke="#d22" stroke-width="1"/>
<path d="M1154.5,176.4 L1154.5,167.4 L1162.5,167.4 L1162.5,176.4" fill="none" stroke="#222" stroke-width="1.3"/>
<rect x="1156.5" y="167.4" width="4" height="9" fill="#bbb"/>
<path d="M1153.5,188.65 L1158.5,180.65 L1163.5,188.65Z" fill="#ccc" stroke="#333" stroke-width="0.8"/>
<circle cx="1161.5" cy="187.65" r="2" fill="#e02020"/>
<rect x="1153.5" y="192.9" width="10" height="10" fill="#5566aa" stroke="#222" stroke-width="0.8"/>
<rect x="1155.5" y="194.9" width="6" height="6" fill="#dde" stroke="#333" stroke-width="0.6"/>
<line x1="1153.5" y1="211.15" x2="1163.5" y2="211.15" stroke="#222" stroke-width="1.2"/>
<line x1="1158.5" y1="206.15" x2="1158.5" y2="216.15" stroke="#222" stroke-width="1.2"/>
<rect x="1153.5" y="220.4" width="10" height="9" fill="#eee" stroke="#333" stroke-width="0.9"/>
<line x1="1153.5" y1="220.4" x2="1163.5" y2="229.4" stroke="#b22" stroke-width="0.9"/>
<rect x="1154.5" y="232.65" width="4" height="10" fill="#2a7a2a"/>
<rect x="1159.5" y="235.65" width="4" height="7" fill="#eee" stroke="#333" stroke-width="0.8"/>
<path d="M1153.5,253.9 L1156.5,246.9 L1163.5,246.9 L1160.5,253.9Z" fill="#f5f5f5" stroke="#333" stroke-width="0.8"/>
<line x1="1154.5" y1="255.9" x2="1162.5" y2="255.9" stroke="#1a2aa0" stroke-width="1.2"/>
<rect x="1153.5" y="259.15" width="10" height="10" fill="#ccd" stroke="#333" stroke-width="0.8"/>
<line x1="1155.5" y1="263.15" x2="1161.5" y2="263.15" stroke="#333" stroke-width="0.8"/>
<line x1="1155.5" y1="266.15" x2="1161.5" y2="266.15" stroke="#333" stroke-width="0.8"/>
<rect x="1153.5" y="273.4" width="10" height="8" fill="#fff" stroke="#333" stroke-width="0.9"/>
<line x1="1153.5" y1="277.4" x2="1163.5" y2="277.4" stroke="#333" stroke-width="0.8"/>
<line x1="1158.5" y1="273.4" x2="1158.5" y2="281.4" stroke="#333" stroke-width="0.8"/>
<rect x="1153.5" y="286.65" width="8" height="7" fill="#888" stroke="#222" stroke-width="0.8"/>
<path d="M1158.5,291.65 L1163.5,295.65 L1159.5,295.65Z" fill="#1a2aa0"/>
<line x1="1154.5" y1="298.9" x2="1154.5" y2="308.9" stroke="#222" stroke-width="1.4"/>
<line x1="1154.5" y1="307.9" x2="1162.5" y2="307.9" stroke="#222" stroke-width="1.2"/>
<path d="M1158.5,303.9 L1163.5,308.9 L1158.5,308.9Z" fill="#2233aa"/>
<rect x="1153.5" y="314.15" width="10" height="6" fill="#ddd" stroke="#333" stroke-width="0.9"/>
<line x1="1155.5" y1="317.15" x2="1161.5" y2="317.15" stroke="#d22" stroke-width="1"/>
<path d="M1154.5,335.4 L1154.5,326.4 L1162.5,326.4 L1162.5,335.4" fill="none" stroke="#222" stroke-width="1.3"/>
<rect x="1156.5" y="326.4" width="4" height="9" fill="#bbb"/>
<path d="M1153.5,347.65 L1158.5,339.65 L1163.5,347.65Z" fill="#ccc" stroke="#333" stroke-width="0.8"/>
<circle cx="1161.5" cy="346.65" r="2" fill="#e02020"/>
<rect x="1153.5" y="351.9" width="10" height="10" fill="#5566aa" stroke="#222" stroke-width="0.8"/>
<rect x="1155.5" y="353.9" width="6" height="6" fill="#dde" stroke="#333" stroke-width="0.6"/>
<line x1="1153.5" y1="370.15" x2="1163.5" y2="370.15" stroke="#222" stroke-width="1.2"/>
<line x1="1158.5" y1="365.15" x2="1158.5" y2="375.15" stroke="#222" stroke-width="1.2"/>
<rect x="1153.5" y="379.4" width="10" height="9" fill="#eee" stroke="#333" stroke-width="0.9"/>
<line x1="1153.5" y1="379.4" x2="1163.5" y2="388.4" stroke="#b22" stroke-width="0.9"/>
<rect x="1169.6" y="115.4" width="10" height="6" fill="#ddd" stroke="#333" stroke-width="0.9"/>
<line x1="1171.6" y1="118.4" x2="1177.6" y2="118.4" stroke="#d22" stroke-width="1"/>
<path d="M1176.6,112.4 L1180.6,112.4 L1180.6,116.4" fill="none" stroke="#36c6e0" stroke-width="1"/>
<path d="M1168.6,120.4 L1168.6,124.4 L1172.6,124.4" fill="none" stroke="#36c6e0" stroke-width="1"/>
<path d="M1170.6,137.3 L1170.6,128.3 L1178.6,128.3 L1178.6,137.3" fill="none" stroke="#222" stroke-width="1.3"/>
<rect x="1172.6" y="128.3" width="4" height="9" fill="#bbb"/>
<path d="M1176.6,126.30000000000001 L1180.6,126.30000000000001 L1180.6,130.3" fill="none" stroke="#36c6e0" stroke-width="1"/>
<path d="M1168.6,134.3 L1168.6,138.3 L1172.6,138.3" fill="none" stroke="#36c6e0" stroke-width="1"/>
<path d="M1169.6,149.4 L1174.6,141.4 L1179.6,149.4Z" fill="#ccc" stroke="#333" stroke-width="0.8"/>
<circle cx="1177.6" cy="148.4" r="2" fill="#e02020"/>
<path d="M1176.6,139.4 L1180.6,139.4 L1180.6,143.4" fill="none" stroke="#36c6e0" stroke-width="1"/>
<path d="M1168.6,147.4 L1168.6,151.4 L1172.6,151.4" fill="none" stroke="#36c6e0" stroke-width="1"/>
<rect x="1169.6" y="153.6" width="10" height="10" fill="#5566aa" stroke="#222" stroke-width="0.8"/>
<rect x="1171.6" y="155.6" width="6" height="6" fill="#dde" stroke="#333" stroke-width="0.6"/>
<path d="M1176.6,152.6 L1180.6,152.6 L1180.6,156.6" fill="none" stroke="#36c6e0" stroke-width="1"/>
<path d="M1168.6,160.6 L1168.6,164.6 L1172.6,164.6" fill="none" stroke="#36c6e0" stroke-width="1"/>
<line x1="1169.6" y1="176.1" x2="1179.6" y2="176.1" stroke="#222" stroke-width="1.2"/>
<line x1="1174.6" y1="171.1" x2="1174.6" y2="181.1" stroke="#222" stroke-width="1.2"/>
<path d="M1176.6,170.1 L1180.6,170.1 L1180.6,174.1" fill="none" stroke="#36c6e0" stroke-width="1"/>
<path d="M1168.6,178.1 L1168.6,182.1 L1172.6,182.1" fill="none" stroke="#36c6e0" stroke-width="1"/>
<rect x="1169.6" y="186" width="10" height="9" fill="#eee" stroke="#333" stroke-width="0.9"/>
<line x1="1169.6" y1="186" x2="1179.6" y2="195" stroke="#b22" stroke-width="0.9"/>
<path d="M1176.6,184 L1180.6,184 L1180.6,188" fill="none" stroke="#36c6e0" stroke-width="1"/>
<path d="M1168.6,192 L1168.6,196 L1172.6,196" fill="none" stroke="#36c6e0" stroke-width="1"/>
<rect x="1170.6" y="198.5" width="4" height="10" fill="#2a7a2a"/>
<rect x="1175.6" y="201.5" width="4" height="7" fill="#eee" stroke="#333" stroke-width="0.8"/>
<path d="M1176.6,197.5 L1180.6,197.5 L1180.6,201.5" fill="none" stroke="#36c6e0" stroke-width="1"/>
<path d="M1168.6,205.5 L1168.6,209.5 L1172.6,209.5" fill="none" stroke="#36c6e0" stroke-width="1"/>
<path d="M1169.6,220 L1172.6,213 L1179.6,213 L1176.6,220Z" fill="#f5f5f5" stroke="#333" stroke-width="0.8"/>
<line x1="1170.6" y1="222" x2="1178.6" y2="222" stroke="#1a2aa0" stroke-width="1.2"/>
<path d="M1176.6,211 L1180.6,211 L1180.6,215" fill="none" stroke="#36c6e0" stroke-width="1"/>
<path d="M1168.6,219 L1168.6,223 L1172.6,223" fill="none" stroke="#36c6e0" stroke-width="1"/>
<rect x="1169.6" y="225.5" width="10" height="10" fill="#ccd" stroke="#333" stroke-width="0.8"/>
<line x1="1171.6" y1="229.5" x2="1177.6" y2="229.5" stroke="#333" stroke-width="0.8"/>
<line x1="1171.6" y1="232.5" x2="1177.6" y2="232.5" stroke="#333" stroke-width="0.8"/>
<path d="M1176.6,224.5 L1180.6,224.5 L1180.6,228.5" fill="none" stroke="#36c6e0" stroke-width="1"/>
<path d="M1168.6,232.5 L1168.6,236.5 L1172.6,236.5" fill="none" stroke="#36c6e0" stroke-width="1"/>
<rect x="1169.6" y="240" width="10" height="8" fill="#fff" stroke="#333" stroke-width="0.9"/>
<line x1="1169.6" y1="244" x2="1179.6" y2="244" stroke="#333" stroke-width="0.8"/>
<line x1="1174.6" y1="240" x2="1174.6" y2="248" stroke="#333" stroke-width="0.8"/>
<path d="M1176.6,238 L1180.6,238 L1180.6,242" fill="none" stroke="#36c6e0" stroke-width="1"/>
<path d="M1168.6,246 L1168.6,250 L1172.6,250" fill="none" stroke="#36c6e0" stroke-width="1"/>
<rect x="1169.6" y="257.8" width="8" height="7" fill="#888" stroke="#222" stroke-width="0.8"/>
<path d="M1174.6,262.8 L1179.6,266.8 L1175.6,266.8Z" fill="#1a2aa0"/>
<path d="M1176.6,255.8 L1180.6,255.8 L1180.6,259.8" fill="none" stroke="#36c6e0" stroke-width="1"/>
<path d="M1168.6,263.8 L1168.6,267.8 L1172.6,267.8" fill="none" stroke="#36c6e0" stroke-width="1"/>
<line x1="1170.6" y1="269.4" x2="1170.6" y2="279.4" stroke="#222" stroke-width="1.4"/>
<line x1="1170.6" y1="278.4" x2="1178.6" y2="278.4" stroke="#222" stroke-width="1.2"/>
<path d="M1174.6,274.4 L1179.6,279.4 L1174.6,279.4Z" fill="#2233aa"/>
<path d="M1176.6,268.4 L1180.6,268.4 L1180.6,272.4" fill="none" stroke="#36c6e0" stroke-width="1"/>
<path d="M1168.6,276.4 L1168.6,280.4 L1172.6,280.4" fill="none" stroke="#36c6e0" stroke-width="1"/>
<rect x="1169.6" y="284.8" width="10" height="6" fill="#ddd" stroke="#333" stroke-width="0.9"/>
<line x1="1171.6" y1="287.8" x2="1177.6" y2="287.8" stroke="#d22" stroke-width="1"/>
<path d="M1176.6,281.8 L1180.6,281.8 L1180.6,285.8" fill="none" stroke="#36c6e0" stroke-width="1"/>
<path d="M1168.6,289.8 L1168.6,293.8 L1172.6,293.8" fill="none" stroke="#36c6e0" stroke-width="1"/>
<path d="M1170.6,310.6 L1170.6,301.6 L1178.6,301.6 L1178.6,310.6" fill="none" stroke="#222" stroke-width="1.3"/>
<rect x="1172.6" y="301.6" width="4" height="9" fill="#bbb"/>
<path d="M1176.6,299.6 L1180.6,299.6 L1180.6,303.6" fill="none" stroke="#36c6e0" stroke-width="1"/>
<path d="M1168.6,307.6 L1168.6,311.6 L1172.6,311.6" fill="none" stroke="#36c6e0" stroke-width="1"/>
<path d="M1169.6,322.9 L1174.6,314.9 L1179.6,322.9Z" fill="#ccc" stroke="#333" stroke-width="0.8"/>
<circle cx="1177.6" cy="321.9" r="2" fill="#e02020"/>
<path d="M1176.6,312.9 L1180.6,312.9 L1180.6,316.9" fill="none" stroke="#36c6e0" stroke-width="1"/>
<path d="M1168.6,320.9 L1168.6,324.9 L1172.6,324.9" fill="none" stroke="#36c6e0" stroke-width="1"/>
<rect x="1169.6" y="327.2" width="10" height="10" fill="#5566aa" stroke="#222" stroke-width="0.8"/>
<rect x="1171.6" y="329.2" width="6" height="6" fill="#dde" stroke="#333" stroke-width="0.6"/>
<path d="M1176.6,326.2 L1180.6,326.2 L1180.6,330.2" fill="none" stroke="#36c6e0" stroke-width="1"/>
<path d="M1168.6,334.2 L1168.6,338.2 L1172.6,338.2" fill="none" stroke="#36c6e0" stroke-width="1"/>
<line x1="1169.6" y1="345.6" x2="1179.6" y2="345.6" stroke="#222" stroke-width="1.2"/>
<line x1="1174.6" y1="340.6" x2="1174.6" y2="350.6" stroke="#222" stroke-width="1.2"/>
<path d="M1176.6,339.6 L1180.6,339.6 L1180.6,343.6" fill="none" stroke="#36c6e0" stroke-width="1"/>
<path d="M1168.6,347.6 L1168.6,351.6 L1172.6,351.6" fill="none" stroke="#36c6e0" stroke-width="1"/>
<rect x="1169.6" y="354.9" width="10" height="9" fill="#eee" stroke="#333" stroke-width="0.9"/>
<line x1="1169.6" y1="354.9" x2="1179.6" y2="363.9" stroke="#b22" stroke-width="0.9"/>
<path d="M1176.6,352.9 L1180.6,352.9 L1180.6,356.9" fill="none" stroke="#36c6e0" stroke-width="1"/>
<path d="M1168.6,360.9 L1168.6,364.9 L1172.6,364.9" fill="none" stroke="#36c6e0" stroke-width="1"/>
<rect x="1170.6" y="370.6" width="4" height="10" fill="#2a7a2a"/>
<rect x="1175.6" y="373.6" width="4" height="7" fill="#eee" stroke="#333" stroke-width="0.8"/>
<path d="M1176.6,369.6 L1180.6,369.6 L1180.6,373.6" fill="none" stroke="#36c6e0" stroke-width="1"/>
<path d="M1168.6,377.6 L1168.6,381.6 L1172.6,381.6" fill="none" stroke="#36c6e0" stroke-width="1"/>
<path d="M1169.6,393 L1172.6,386 L1179.6,386 L1176.6,393Z" fill="#f5f5f5" stroke="#333" stroke-width="0.8"/>
<line x1="1170.6" y1="395" x2="1178.6" y2="395" stroke="#1a2aa0" stroke-width="1.2"/>
<path d="M1176.6,384 L1180.6,384 L1180.6,388" fill="none" stroke="#36c6e0" stroke-width="1"/>
<path d="M1168.6,392 L1168.6,396 L1172.6,396" fill="none" stroke="#36c6e0" stroke-width="1"/>
<line x1="1169" y1="168" x2="1180" y2="168" stroke="#b5bbc5" stroke-width="0.8"/>
<line x1="1169" y1="296" x2="1180" y2="296" stroke="#b5bbc5" stroke-width="0.8"/>
<line x1="1169" y1="369" x2="1180" y2="369" stroke="#b5bbc5" stroke-width="0.8"/>
<path d="M1169.6,421.7 L1174.6,413.7 L1179.6,421.7Z" fill="#ccc" stroke="#333" stroke-width="0.8"/>
<circle cx="1177.6" cy="420.7" r="2" fill="#e02020"/>
<path d="M1168.5,414.7 L1168.5,423.7 L1172,423.7" fill="none" stroke="#e8cf3a" stroke-width="1"/>
<rect x="1169.6" y="426.59999999999997" width="10" height="10" fill="#5566aa" stroke="#222" stroke-width="0.8"/>
<rect x="1171.6" y="428.59999999999997" width="6" height="6" fill="#dde" stroke="#333" stroke-width="0.6"/>
<path d="M1168.5,428.59999999999997 L1168.5,437.59999999999997 L1172,437.59999999999997" fill="none" stroke="#e8cf3a" stroke-width="1"/>
<line x1="1169.6" y1="445.5" x2="1179.6" y2="445.5" stroke="#222" stroke-width="1.2"/>
<line x1="1174.6" y1="440.5" x2="1174.6" y2="450.5" stroke="#222" stroke-width="1.2"/>
<path d="M1168.5,442.5 L1168.5,451.5 L1172,451.5" fill="none" stroke="#e8cf3a" stroke-width="1"/>
<rect x="1169.6" y="455.4" width="10" height="9" fill="#eee" stroke="#333" stroke-width="0.9"/>
<line x1="1169.6" y1="455.4" x2="1179.6" y2="464.4" stroke="#b22" stroke-width="0.9"/>
<path d="M1168.5,456.4 L1168.5,465.4 L1172,465.4" fill="none" stroke="#e8cf3a" stroke-width="1"/>
<rect x="1170.6" y="468.3" width="4" height="10" fill="#2a7a2a"/>
<rect x="1175.6" y="471.3" width="4" height="7" fill="#eee" stroke="#333" stroke-width="0.8"/>
<path d="M1168.5,470.3 L1168.5,479.3 L1172,479.3" fill="none" stroke="#e8cf3a" stroke-width="1"/>
<path d="M1169.6,490.2 L1172.6,483.2 L1179.6,483.2 L1176.6,490.2Z" fill="#f5f5f5" stroke="#333" stroke-width="0.8"/>
<line x1="1170.6" y1="492.2" x2="1178.6" y2="492.2" stroke="#1a2aa0" stroke-width="1.2"/>
<path d="M1168.5,484.2 L1168.5,493.2 L1172,493.2" fill="none" stroke="#e8cf3a" stroke-width="1"/>
<rect x="1169.6" y="496.1" width="10" height="10" fill="#ccd" stroke="#333" stroke-width="0.8"/>
<line x1="1171.6" y1="500.1" x2="1177.6" y2="500.1" stroke="#333" stroke-width="0.8"/>
<line x1="1171.6" y1="503.1" x2="1177.6" y2="503.1" stroke="#333" stroke-width="0.8"/>
<path d="M1168.5,498.1 L1168.5,507.1 L1172,507.1" fill="none" stroke="#e8cf3a" stroke-width="1"/>
<rect x="1169.6" y="511.0" width="10" height="8" fill="#fff" stroke="#333" stroke-width="0.9"/>
<line x1="1169.6" y1="515.0" x2="1179.6" y2="515.0" stroke="#333" stroke-width="0.8"/>
<line x1="1174.6" y1="511.0" x2="1174.6" y2="519.0" stroke="#333" stroke-width="0.8"/>
<path d="M1168.5,512.0 L1168.5,521.0 L1172,521.0" fill="none" stroke="#e8cf3a" stroke-width="1"/>
<rect x="1169.6" y="524.9" width="8" height="7" fill="#888" stroke="#222" stroke-width="0.8"/>
<path d="M1174.6,529.9 L1179.6,533.9 L1175.6,533.9Z" fill="#1a2aa0"/>
<path d="M1168.5,525.9 L1168.5,534.9 L1172,534.9" fill="none" stroke="#e8cf3a" stroke-width="1"/>
<line x1="1170.6" y1="537.8" x2="1170.6" y2="547.8" stroke="#222" stroke-width="1.4"/>
<line x1="1170.6" y1="546.8" x2="1178.6" y2="546.8" stroke="#222" stroke-width="1.2"/>
<path d="M1174.6,542.8 L1179.6,547.8 L1174.6,547.8Z" fill="#2233aa"/>
<path d="M1168.5,539.8 L1168.5,548.8 L1172,548.8" fill="none" stroke="#e8cf3a" stroke-width="1"/>
<rect x="1169.6" y="553.7" width="10" height="6" fill="#ddd" stroke="#333" stroke-width="0.9"/>
<line x1="1171.6" y1="556.7" x2="1177.6" y2="556.7" stroke="#d22" stroke-width="1"/>
<path d="M1168.5,553.7 L1168.5,562.7 L1172,562.7" fill="none" stroke="#e8cf3a" stroke-width="1"/>
<path d="M1170.6,575.6 L1170.6,566.6 L1178.6,566.6 L1178.6,575.6" fill="none" stroke="#222" stroke-width="1.3"/>
<rect x="1172.6" y="566.6" width="4" height="9" fill="#bbb"/>
<path d="M1168.5,567.6 L1168.5,576.6 L1172,576.6" fill="none" stroke="#e8cf3a" stroke-width="1"/>
<path d="M1169.6,588.5 L1174.6,580.5 L1179.6,588.5Z" fill="#ccc" stroke="#333" stroke-width="0.8"/>
<circle cx="1177.6" cy="587.5" r="2" fill="#e02020"/>
<path d="M1168.5,581.5 L1168.5,590.5 L1172,590.5" fill="none" stroke="#e8cf3a" stroke-width="1"/>
<rect x="1185.7" y="114" width="8" height="7" fill="#888" stroke="#222" stroke-width="0.8"/>
<path d="M1190.7,119 L1195.7,123 L1191.7,123Z" fill="#1a2aa0"/>
<line x1="1186.7" y1="131.5" x2="1186.7" y2="141.5" stroke="#222" stroke-width="1.4"/>
<line x1="1186.7" y1="140.5" x2="1194.7" y2="140.5" stroke="#222" stroke-width="1.2"/>
<path d="M1190.7,136.5 L1195.7,141.5 L1190.7,141.5Z" fill="#2233aa"/>
<rect x="1185.7" y="147.0" width="10" height="6" fill="#ddd" stroke="#333" stroke-width="0.9"/>
<line x1="1187.7" y1="150.0" x2="1193.7" y2="150.0" stroke="#d22" stroke-width="1"/>
<path d="M1186.7,168.5 L1186.7,159.5 L1194.7,159.5 L1194.7,168.5" fill="none" stroke="#222" stroke-width="1.3"/>
<rect x="1188.7" y="159.5" width="4" height="9" fill="#bbb"/>
<path d="M1185.7,181.0 L1190.7,173.0 L1195.7,181.0Z" fill="#ccc" stroke="#333" stroke-width="0.8"/>
<circle cx="1193.7" cy="180.0" r="2" fill="#e02020"/>
<rect x="1185.7" y="185.5" width="10" height="10" fill="#5566aa" stroke="#222" stroke-width="0.8"/>
<rect x="1187.7" y="187.5" width="6" height="6" fill="#dde" stroke="#333" stroke-width="0.6"/>
<line x1="1185.7" y1="204.0" x2="1195.7" y2="204.0" stroke="#222" stroke-width="1.2"/>
<line x1="1190.7" y1="199.0" x2="1190.7" y2="209.0" stroke="#222" stroke-width="1.2"/>
<rect x="1185.7" y="213.5" width="10" height="9" fill="#eee" stroke="#333" stroke-width="0.9"/>
<line x1="1185.7" y1="213.5" x2="1195.7" y2="222.5" stroke="#b22" stroke-width="0.9"/>
<rect x="1186.7" y="226.0" width="4" height="10" fill="#2a7a2a"/>
<rect x="1191.7" y="229.0" width="4" height="7" fill="#eee" stroke="#333" stroke-width="0.8"/>
<path d="M1185.7,247.5 L1188.7,240.5 L1195.7,240.5 L1192.7,247.5Z" fill="#f5f5f5" stroke="#333" stroke-width="0.8"/>
<line x1="1186.7" y1="249.5" x2="1194.7" y2="249.5" stroke="#1a2aa0" stroke-width="1.2"/>
<rect x="1185.7" y="253.0" width="10" height="10" fill="#ccd" stroke="#333" stroke-width="0.8"/>
<line x1="1187.7" y1="257.0" x2="1193.7" y2="257.0" stroke="#333" stroke-width="0.8"/>
<line x1="1187.7" y1="260.0" x2="1193.7" y2="260.0" stroke="#333" stroke-width="0.8"/>
<rect x="1185.7" y="267.5" width="10" height="8" fill="#fff" stroke="#333" stroke-width="0.9"/>
<line x1="1185.7" y1="271.5" x2="1195.7" y2="271.5" stroke="#333" stroke-width="0.8"/>
<line x1="1190.7" y1="267.5" x2="1190.7" y2="275.5" stroke="#333" stroke-width="0.8"/>
<rect x="1185.7" y="281.0" width="8" height="7" fill="#888" stroke="#222" stroke-width="0.8"/>
<path d="M1190.7,286.0 L1195.7,290.0 L1191.7,290.0Z" fill="#1a2aa0"/>
<line x1="1186.7" y1="293.5" x2="1186.7" y2="303.5" stroke="#222" stroke-width="1.4"/>
<line x1="1186.7" y1="302.5" x2="1194.7" y2="302.5" stroke="#222" stroke-width="1.2"/>
<path d="M1190.7,298.5 L1195.7,303.5 L1190.7,303.5Z" fill="#2233aa"/>
<rect x="1185.7" y="309.0" width="10" height="6" fill="#ddd" stroke="#333" stroke-width="0.9"/>
<line x1="1187.7" y1="312.0" x2="1193.7" y2="312.0" stroke="#d22" stroke-width="1"/>
<path d="M1186.7,330.5 L1186.7,321.5 L1194.7,321.5 L1194.7,330.5" fill="none" stroke="#222" stroke-width="1.3"/>
<rect x="1188.7" y="321.5" width="4" height="9" fill="#bbb"/>
<path d="M1185.7,343.0 L1190.7,335.0 L1195.7,343.0Z" fill="#ccc" stroke="#333" stroke-width="0.8"/>
<circle cx="1193.7" cy="342.0" r="2" fill="#e02020"/>
<rect x="1185.7" y="347.5" width="10" height="10" fill="#5566aa" stroke="#222" stroke-width="0.8"/>
<rect x="1187.7" y="349.5" width="6" height="6" fill="#dde" stroke="#333" stroke-width="0.6"/>
<line x1="1185.7" y1="366.0" x2="1195.7" y2="366.0" stroke="#222" stroke-width="1.2"/>
<line x1="1190.7" y1="361.0" x2="1190.7" y2="371.0" stroke="#222" stroke-width="1.2"/>
<rect x="1185.7" y="375.5" width="10" height="9" fill="#eee" stroke="#333" stroke-width="0.9"/>
<line x1="1185.7" y1="375.5" x2="1195.7" y2="384.5" stroke="#b22" stroke-width="0.9"/>
<rect x="1186.7" y="388.0" width="4" height="10" fill="#2a7a2a"/>
<rect x="1191.7" y="391.0" width="4" height="7" fill="#eee" stroke="#333" stroke-width="0.8"/>
<path d="M1185.7,409.5 L1188.7,402.5 L1195.7,402.5 L1192.7,409.5Z" fill="#f5f5f5" stroke="#333" stroke-width="0.8"/>
<line x1="1186.7" y1="411.5" x2="1194.7" y2="411.5" stroke="#1a2aa0" stroke-width="1.2"/>
<rect x="1185.7" y="415.0" width="10" height="10" fill="#ccd" stroke="#333" stroke-width="0.8"/>
<line x1="1187.7" y1="419.0" x2="1193.7" y2="419.0" stroke="#333" stroke-width="0.8"/>
<line x1="1187.7" y1="422.0" x2="1193.7" y2="422.0" stroke="#333" stroke-width="0.8"/>
<rect x="1185.7" y="429.5" width="10" height="8" fill="#fff" stroke="#333" stroke-width="0.9"/>
<line x1="1185.7" y1="433.5" x2="1195.7" y2="433.5" stroke="#333" stroke-width="0.8"/>
<line x1="1190.7" y1="429.5" x2="1190.7" y2="437.5" stroke="#333" stroke-width="0.8"/>
<rect x="1185.7" y="443.0" width="8" height="7" fill="#888" stroke="#222" stroke-width="0.8"/>
<path d="M1190.7,448.0 L1195.7,452.0 L1191.7,452.0Z" fill="#1a2aa0"/>
<line x1="1186.7" y1="455.5" x2="1186.7" y2="465.5" stroke="#222" stroke-width="1.4"/>
<line x1="1186.7" y1="464.5" x2="1194.7" y2="464.5" stroke="#222" stroke-width="1.2"/>
<path d="M1190.7,460.5 L1195.7,465.5 L1190.7,465.5Z" fill="#2233aa"/>
<rect x="1185.7" y="471.0" width="10" height="6" fill="#ddd" stroke="#333" stroke-width="0.9"/>
<line x1="1187.7" y1="474.0" x2="1193.7" y2="474.0" stroke="#d22" stroke-width="1"/>
<path d="M1186.7,492.5 L1186.7,483.5 L1194.7,483.5 L1194.7,492.5" fill="none" stroke="#222" stroke-width="1.3"/>
<rect x="1188.7" y="483.5" width="4" height="9" fill="#bbb"/>
<path d="M1185.7,505.0 L1190.7,497.0 L1195.7,505.0Z" fill="#ccc" stroke="#333" stroke-width="0.8"/>
<circle cx="1193.7" cy="504.0" r="2" fill="#e02020"/>
<rect x="1185.7" y="509.5" width="10" height="10" fill="#5566aa" stroke="#222" stroke-width="0.8"/>
<rect x="1187.7" y="511.5" width="6" height="6" fill="#dde" stroke="#333" stroke-width="0.6"/>
<line x1="1185.7" y1="528.0" x2="1195.7" y2="528.0" stroke="#222" stroke-width="1.2"/>
<line x1="1190.7" y1="523.0" x2="1190.7" y2="533.0" stroke="#222" stroke-width="1.2"/>
<rect x="1185.7" y="537.5" width="10" height="9" fill="#eee" stroke="#333" stroke-width="0.9"/>
<line x1="1185.7" y1="537.5" x2="1195.7" y2="546.5" stroke="#b22" stroke-width="0.9"/>
<rect x="1186.7" y="550.0" width="4" height="10" fill="#2a7a2a"/>
<rect x="1191.7" y="553.0" width="4" height="7" fill="#eee" stroke="#333" stroke-width="0.8"/>
<path d="M1185.7,571.5 L1188.7,564.5 L1195.7,564.5 L1192.7,571.5Z" fill="#f5f5f5" stroke="#333" stroke-width="0.8"/>
<line x1="1186.7" y1="573.5" x2="1194.7" y2="573.5" stroke="#1a2aa0" stroke-width="1.2"/>
<rect x="1185.7" y="577.0" width="10" height="10" fill="#ccd" stroke="#333" stroke-width="0.8"/>
<line x1="1187.7" y1="581.0" x2="1193.7" y2="581.0" stroke="#333" stroke-width="0.8"/>
<line x1="1187.7" y1="584.0" x2="1193.7" y2="584.0" stroke="#333" stroke-width="0.8"/>
<rect x="1185.7" y="591.5" width="10" height="8" fill="#fff" stroke="#333" stroke-width="0.9"/>
<line x1="1185.7" y1="595.5" x2="1195.7" y2="595.5" stroke="#333" stroke-width="0.8"/>
<line x1="1190.7" y1="591.5" x2="1190.7" y2="599.5" stroke="#333" stroke-width="0.8"/>
<rect x="1185.7" y="605.0" width="8" height="7" fill="#888" stroke="#222" stroke-width="0.8"/>
<path d="M1190.7,610.0 L1195.7,614.0 L1191.7,614.0Z" fill="#1a2aa0"/>
<line x1="1186.7" y1="617.5" x2="1186.7" y2="627.5" stroke="#222" stroke-width="1.4"/>
<line x1="1186.7" y1="626.5" x2="1194.7" y2="626.5" stroke="#222" stroke-width="1.2"/>
<path d="M1190.7,622.5 L1195.7,627.5 L1190.7,627.5Z" fill="#2233aa"/>
<rect x="1185.7" y="633.0" width="10" height="6" fill="#ddd" stroke="#333" stroke-width="0.9"/>
<line x1="1187.7" y1="636.0" x2="1193.7" y2="636.0" stroke="#d22" stroke-width="1"/>
<path d="M1186.7,654.5 L1186.7,645.5 L1194.7,645.5 L1194.7,654.5" fill="none" stroke="#222" stroke-width="1.3"/>
<rect x="1188.7" y="645.5" width="4" height="9" fill="#bbb"/>
<path d="M1185.7,667.0 L1190.7,659.0 L1195.7,667.0Z" fill="#ccc" stroke="#333" stroke-width="0.8"/>
<circle cx="1193.7" cy="666.0" r="2" fill="#e02020"/>
<rect x="1185.7" y="671.5" width="10" height="10" fill="#5566aa" stroke="#222" stroke-width="0.8"/>
<rect x="1187.7" y="673.5" width="6" height="6" fill="#dde" stroke="#333" stroke-width="0.6"/>
<line x1="1185" y1="128" x2="1196" y2="128" stroke="#b5bbc5" stroke-width="0.8"/>
<svg x="177" y="108" width="479.3" height="279" overflow="hidden"><g transform="translate(-177,-108)">
<line x1="326.7" y1="121" x2="314" y2="373" stroke="#8a8a8a" stroke-width="0.7"/>
<circle cx="326.7" cy="117" r="2.6" fill="none" stroke="#e02020" stroke-width="0.9"/>
<text x="326.7" y="118.6" font-size="3.6" fill="#e0a020" text-anchor="middle">A</text>
<circle cx="314" cy="377.3" r="2.6" fill="none" stroke="#e02020" stroke-width="0.9"/>
<text x="314" y="378.90000000000003" font-size="3.6" fill="#e0a020" text-anchor="middle">A</text>
<line x1="352" y1="121" x2="352" y2="373" stroke="#8a8a8a" stroke-width="0.7"/>
<circle cx="352" cy="117" r="2.6" fill="none" stroke="#e02020" stroke-width="0.9"/>
<text x="352" y="118.6" font-size="3.6" fill="#e0a020" text-anchor="middle">B</text>
<circle cx="352" cy="377.3" r="2.6" fill="none" stroke="#e02020" stroke-width="0.9"/>
<text x="352" y="378.90000000000003" font-size="3.6" fill="#e0a020" text-anchor="middle">B</text>
<line x1="368" y1="121" x2="368" y2="373" stroke="#8a8a8a" stroke-width="0.7"/>
<circle cx="368" cy="117" r="2.6" fill="none" stroke="#e02020" stroke-width="0.9"/>
<text x="368" y="118.6" font-size="3.6" fill="#e0a020" text-anchor="middle">C</text>
<circle cx="368" cy="377.3" r="2.6" fill="none" stroke="#e02020" stroke-width="0.9"/>
<text x="368" y="378.90000000000003" font-size="3.6" fill="#e0a020" text-anchor="middle">C</text>
<line x1="431.2" y1="121" x2="431" y2="373" stroke="#8a8a8a" stroke-width="0.7"/>
<circle cx="431.2" cy="117" r="2.6" fill="none" stroke="#e02020" stroke-width="0.9"/>
<text x="431.2" y="118.6" font-size="3.6" fill="#e0a020" text-anchor="middle">D</text>
<circle cx="431" cy="377.3" r="2.6" fill="none" stroke="#e02020" stroke-width="0.9"/>
<text x="431" y="378.90000000000003" font-size="3.6" fill="#e0a020" text-anchor="middle">D</text>
<line x1="519.2" y1="121" x2="514" y2="373" stroke="#8a8a8a" stroke-width="0.7"/>
<circle cx="519.2" cy="117" r="2.6" fill="none" stroke="#e02020" stroke-width="0.9"/>
<text x="519.2" y="118.6" font-size="3.6" fill="#e0a020" text-anchor="middle">E</text>
<circle cx="514" cy="377.3" r="2.6" fill="none" stroke="#e02020" stroke-width="0.9"/>
<text x="514" y="378.90000000000003" font-size="3.6" fill="#e0a020" text-anchor="middle">E</text>
<line x1="275" y1="157.8" x2="557" y2="171.7" stroke="#8a8a8a" stroke-width="0.7"/>
<circle cx="272" cy="157.8" r="2.6" fill="none" stroke="#e02020" stroke-width="0.9"/>
<text x="272" y="159.4" font-size="3.6" fill="#e0a020" text-anchor="middle">1</text>
<circle cx="560" cy="171.7" r="2.6" fill="none" stroke="#e02020" stroke-width="0.9"/>
<text x="560" y="173.29999999999998" font-size="3.6" fill="#e0a020" text-anchor="middle">1</text>
<line x1="275" y1="202.9" x2="557" y2="202.9" stroke="#8a8a8a" stroke-width="0.7"/>
<circle cx="272" cy="202.9" r="2.6" fill="none" stroke="#e02020" stroke-width="0.9"/>
<text x="272" y="204.5" font-size="3.6" fill="#e0a020" text-anchor="middle">2</text>
<circle cx="560" cy="202.9" r="2.6" fill="none" stroke="#e02020" stroke-width="0.9"/>
<text x="560" y="204.5" font-size="3.6" fill="#e0a020" text-anchor="middle">2</text>
<line x1="275" y1="212.2" x2="557" y2="212.2" stroke="#8a8a8a" stroke-width="0.7"/>
<circle cx="272" cy="212.2" r="2.6" fill="none" stroke="#e02020" stroke-width="0.9"/>
<text x="272" y="213.79999999999998" font-size="3.6" fill="#e0a020" text-anchor="middle">3</text>
<circle cx="560" cy="212.2" r="2.6" fill="none" stroke="#e02020" stroke-width="0.9"/>
<text x="560" y="213.79999999999998" font-size="3.6" fill="#e0a020" text-anchor="middle">3</text>
<line x1="275" y1="253.5" x2="557" y2="253.5" stroke="#8a8a8a" stroke-width="0.7"/>
<circle cx="272" cy="253.5" r="2.6" fill="none" stroke="#e02020" stroke-width="0.9"/>
<text x="272" y="255.1" font-size="3.6" fill="#e0a020" text-anchor="middle">4</text>
<circle cx="560" cy="253.5" r="2.6" fill="none" stroke="#e02020" stroke-width="0.9"/>
<text x="560" y="255.1" font-size="3.6" fill="#e0a020" text-anchor="middle">4</text>
<line x1="275" y1="264.5" x2="557" y2="264.5" stroke="#8a8a8a" stroke-width="0.7"/>
<circle cx="272" cy="264.5" r="2.6" fill="none" stroke="#e02020" stroke-width="0.9"/>
<text x="272" y="266.1" font-size="3.6" fill="#e0a020" text-anchor="middle">5</text>
<circle cx="560" cy="264.5" r="2.6" fill="none" stroke="#e02020" stroke-width="0.9"/>
<text x="560" y="266.1" font-size="3.6" fill="#e0a020" text-anchor="middle">5</text>
<line x1="275" y1="289.6" x2="557" y2="289.6" stroke="#8a8a8a" stroke-width="0.7"/>
<circle cx="272" cy="289.6" r="2.6" fill="none" stroke="#e02020" stroke-width="0.9"/>
<text x="272" y="291.20000000000005" font-size="3.6" fill="#e0a020" text-anchor="middle">6</text>
<circle cx="560" cy="289.6" r="2.6" fill="none" stroke="#e02020" stroke-width="0.9"/>
<text x="560" y="291.20000000000005" font-size="3.6" fill="#e0a020" text-anchor="middle">6</text>
<line x1="275" y1="295.2" x2="557" y2="295.2" stroke="#8a8a8a" stroke-width="0.7"/>
<circle cx="272" cy="295.2" r="2.6" fill="none" stroke="#e02020" stroke-width="0.9"/>
<text x="272" y="296.8" font-size="3.6" fill="#e0a020" text-anchor="middle">7</text>
<circle cx="560" cy="295.2" r="2.6" fill="none" stroke="#e02020" stroke-width="0.9"/>
<text x="560" y="296.8" font-size="3.6" fill="#e0a020" text-anchor="middle">7</text>
<line x1="275" y1="336" x2="557" y2="336" stroke="#8a8a8a" stroke-width="0.7"/>
<circle cx="272" cy="336" r="2.6" fill="none" stroke="#e02020" stroke-width="0.9"/>
<text x="272" y="337.6" font-size="3.6" fill="#e0a020" text-anchor="middle">8</text>
<circle cx="560" cy="336" r="2.6" fill="none" stroke="#e02020" stroke-width="0.9"/>
<text x="560" y="337.6" font-size="3.6" fill="#e0a020" text-anchor="middle">8</text>
<polygon points="320.3,150 528,164.7 521.8,344.2 305.6,343.3" fill="none" stroke="#b0b0b0" stroke-width="0.9"/>
<polygon points="327,159.5 518.5,172.3 514,336 314,336" fill="#0e1824"/>
<line x1="328" y1="183" x2="516" y2="191" stroke="#20c020" stroke-width="1.4"/>
<line x1="350" y1="233" x2="516" y2="235" stroke="#20c020" stroke-width="1.4"/>
<line x1="352" y1="275" x2="516" y2="275" stroke="#20c020" stroke-width="1.4"/>
<line x1="318" y1="315" x2="516" y2="315" stroke="#20c020" stroke-width="1.4"/>
<line x1="328" y1="190" x2="516" y2="198" stroke="#4040d0" stroke-width="1.1"/>
<line x1="350" y1="243" x2="516" y2="247" stroke="#4040d0" stroke-width="1.1"/>
<line x1="352" y1="283" x2="516" y2="283" stroke="#4040d0" stroke-width="1.1"/>
<line x1="318" y1="323" x2="516" y2="323" stroke="#4040d0" stroke-width="1.1"/>
<line x1="346.7" y1="165" x2="346.7" y2="335" stroke="#4848d8" stroke-width="1.3"/>
<line x1="399.2" y1="165" x2="399.2" y2="335" stroke="#4848d8" stroke-width="1.3"/>
<line x1="474" y1="165" x2="474" y2="335" stroke="#4848d8" stroke-width="1.3"/>
<line x1="332" y1="166" x2="332" y2="335" stroke="#18a018" stroke-width="0.9"/>
<line x1="388" y1="166" x2="388" y2="335" stroke="#18a018" stroke-width="0.9"/>
<line x1="457.3" y1="166" x2="457.3" y2="335" stroke="#18a018" stroke-width="0.9"/>
<line x1="498" y1="166" x2="498" y2="335" stroke="#18a018" stroke-width="0.9"/>
<polygon points="322,213.5 352,213.5 352,289.5 318,289.5" fill="#000"/>
<rect x="342" y="218" width="10" height="44" fill="none" stroke="#5050d0" stroke-width="0.8"/>
<line x1="347" y1="216" x2="347" y2="289" stroke="#4848d8" stroke-width="1.2"/>
<line x1="366.8" y1="163" x2="366.8" y2="336" stroke="#d8c818" stroke-width="0.9"/>
<line x1="369.8" y1="163" x2="369.8" y2="336" stroke="#d8c818" stroke-width="0.9"/>
<line x1="429.5" y1="163" x2="429.5" y2="336" stroke="#d8c818" stroke-width="0.9"/>
<line x1="432.8" y1="163" x2="432.8" y2="336" stroke="#d8c818" stroke-width="0.9"/>
<line x1="322" y1="203.5" x2="516" y2="203.5" stroke="#d8c818" stroke-width="0.9"/>
<line x1="322" y1="211.5" x2="516" y2="211.5" stroke="#d8c818" stroke-width="0.9"/>
<line x1="322" y1="256.5" x2="516" y2="256.5" stroke="#d8c818" stroke-width="0.9"/>
<line x1="322" y1="262.5" x2="516" y2="262.5" stroke="#d8c818" stroke-width="0.9"/>
<line x1="322" y1="289.8" x2="516" y2="289.8" stroke="#d8c818" stroke-width="0.9"/>
<line x1="322" y1="295.3" x2="516" y2="295.3" stroke="#d8c818" stroke-width="0.9"/>
<line x1="318" y1="207" x2="518" y2="207" stroke="#9a9a9a" stroke-width="0.6" stroke-dasharray="5,1.5,1,1.5"/>
<line x1="318" y1="258.5" x2="518" y2="258.5" stroke="#9a9a9a" stroke-width="0.6" stroke-dasharray="5,1.5,1,1.5"/>
<line x1="318" y1="292.5" x2="518" y2="292.5" stroke="#9a9a9a" stroke-width="0.6" stroke-dasharray="5,1.5,1,1.5"/>
<polygon points="327,159.5 518.5,172.3 514,336 314,336" fill="none" stroke="#e040e0" stroke-width="3.2"/>
<polygon points="327,159.5 518.5,172.3 514,336 314,336" fill="none" stroke="#ffffff" stroke-width="1.4" stroke-dasharray="1.5,1.5"/>
<polyline points="324,203 320,290" fill="none" stroke="#e040e0" stroke-width="0"/>
<rect x="323.5" y="156.3" width="7" height="6.4" fill="#0e1824" stroke="#30e030" stroke-width="1.2"/>
<path d="M324,162.0 L330,157.0" stroke="#e8ffe8" stroke-width="0.8"/>
<rect x="364.5" y="159.3" width="7" height="6.4" fill="#0e1824" stroke="#30e030" stroke-width="1.2"/>
<path d="M365,165.0 L371,160.0" stroke="#e8ffe8" stroke-width="0.8"/>
<rect x="428.0" y="163.8" width="7" height="6.4" fill="#0e1824" stroke="#30e030" stroke-width="1.2"/>
<path d="M428.5,169.5 L434.5,164.5" stroke="#e8ffe8" stroke-width="0.8"/>
<rect x="515.0" y="169.10000000000002" width="7" height="6.4" fill="#0e1824" stroke="#30e030" stroke-width="1.2"/>
<path d="M515.5,174.8 L521.5,169.8" stroke="#e8ffe8" stroke-width="0.8"/>
<rect x="320.0" y="203.8" width="7" height="6.4" fill="#0e1824" stroke="#30e030" stroke-width="1.2"/>
<path d="M320.5,209.5 L326.5,204.5" stroke="#e8ffe8" stroke-width="0.8"/>
<rect x="364.5" y="203.8" width="7" height="6.4" fill="#0e1824" stroke="#30e030" stroke-width="1.2"/>
<path d="M365,209.5 L371,204.5" stroke="#e8ffe8" stroke-width="0.8"/>
<rect x="428.0" y="203.8" width="7" height="6.4" fill="#0e1824" stroke="#30e030" stroke-width="1.2"/>
<path d="M428.5,209.5 L434.5,204.5" stroke="#e8ffe8" stroke-width="0.8"/>
<rect x="513.0" y="203.8" width="7" height="6.4" fill="#0e1824" stroke="#30e030" stroke-width="1.2"/>
<path d="M513.5,209.5 L519.5,204.5" stroke="#e8ffe8" stroke-width="0.8"/>
<rect x="364.5" y="256.3" width="7" height="6.4" fill="#0e1824" stroke="#30e030" stroke-width="1.2"/>
<path d="M365,262.0 L371,257.0" stroke="#e8ffe8" stroke-width="0.8"/>
<rect x="428.0" y="256.3" width="7" height="6.4" fill="#0e1824" stroke="#30e030" stroke-width="1.2"/>
<path d="M428.5,262.0 L434.5,257.0" stroke="#e8ffe8" stroke-width="0.8"/>
<rect x="512.0" y="256.3" width="7" height="6.4" fill="#0e1824" stroke="#30e030" stroke-width="1.2"/>
<path d="M512.5,262.0 L518.5,257.0" stroke="#e8ffe8" stroke-width="0.8"/>
<rect x="316.5" y="262.8" width="7" height="6.4" fill="#0e1824" stroke="#30e030" stroke-width="1.2"/>
<path d="M317,268.5 L323,263.5" stroke="#e8ffe8" stroke-width="0.8"/>
<rect x="315.0" y="289.8" width="7" height="6.4" fill="#0e1824" stroke="#30e030" stroke-width="1.2"/>
<path d="M315.5,295.5 L321.5,290.5" stroke="#e8ffe8" stroke-width="0.8"/>
<rect x="364.5" y="289.8" width="7" height="6.4" fill="#0e1824" stroke="#30e030" stroke-width="1.2"/>
<path d="M365,295.5 L371,290.5" stroke="#e8ffe8" stroke-width="0.8"/>
<rect x="428.0" y="289.8" width="7" height="6.4" fill="#0e1824" stroke="#30e030" stroke-width="1.2"/>
<path d="M428.5,295.5 L434.5,290.5" stroke="#e8ffe8" stroke-width="0.8"/>
<rect x="511.5" y="289.8" width="7" height="6.4" fill="#0e1824" stroke="#30e030" stroke-width="1.2"/>
<path d="M512,295.5 L518,290.5" stroke="#e8ffe8" stroke-width="0.8"/>
<rect x="310.5" y="332.8" width="7" height="6.4" fill="#0e1824" stroke="#30e030" stroke-width="1.2"/>
<path d="M311,338.5 L317,333.5" stroke="#e8ffe8" stroke-width="0.8"/>
<rect x="364.5" y="332.8" width="7" height="6.4" fill="#0e1824" stroke="#30e030" stroke-width="1.2"/>
<path d="M365,338.5 L371,333.5" stroke="#e8ffe8" stroke-width="0.8"/>
<rect x="428.0" y="332.8" width="7" height="6.4" fill="#0e1824" stroke="#30e030" stroke-width="1.2"/>
<path d="M428.5,338.5 L434.5,333.5" stroke="#e8ffe8" stroke-width="0.8"/>
<rect x="510.5" y="332.8" width="7" height="6.4" fill="#0e1824" stroke="#30e030" stroke-width="1.2"/>
<path d="M511,338.5 L517,333.5" stroke="#e8ffe8" stroke-width="0.8"/>
<circle cx="333.6" cy="165.5" r="3.2" fill="none" stroke="#e02020" stroke-width="1"/>
<line x1="338.1" y1="164.5" x2="352.6" y2="164.5" stroke="#40a040" stroke-width="1" stroke-dasharray="1.5,0.5"/>
<line x1="338.1" y1="167.0" x2="350.6" y2="167.0" stroke="#40a040" stroke-width="1" stroke-dasharray="1.5,0.5"/>
<circle cx="374.5" cy="168" r="3.2" fill="none" stroke="#e02020" stroke-width="1"/>
<line x1="379.0" y1="167" x2="393.5" y2="167" stroke="#40a040" stroke-width="1" stroke-dasharray="1.5,0.5"/>
<line x1="379.0" y1="169.5" x2="391.5" y2="169.5" stroke="#40a040" stroke-width="1" stroke-dasharray="1.5,0.5"/>
<circle cx="439.2" cy="173" r="3.2" fill="none" stroke="#e02020" stroke-width="1"/>
<line x1="443.7" y1="172" x2="458.2" y2="172" stroke="#40a040" stroke-width="1" stroke-dasharray="1.5,0.5"/>
<line x1="443.7" y1="174.5" x2="456.2" y2="174.5" stroke="#40a040" stroke-width="1" stroke-dasharray="1.5,0.5"/>
<circle cx="358.6" cy="210.6" r="3.2" fill="none" stroke="#e02020" stroke-width="1"/>
<line x1="363.1" y1="209.6" x2="377.6" y2="209.6" stroke="#40a040" stroke-width="1" stroke-dasharray="1.5,0.5"/>
<line x1="363.1" y1="212.1" x2="375.6" y2="212.1" stroke="#40a040" stroke-width="1" stroke-dasharray="1.5,0.5"/>
<circle cx="374.5" cy="219" r="3.2" fill="none" stroke="#e02020" stroke-width="1"/>
<line x1="379.0" y1="218" x2="393.5" y2="218" stroke="#40a040" stroke-width="1" stroke-dasharray="1.5,0.5"/>
<line x1="379.0" y1="220.5" x2="391.5" y2="220.5" stroke="#40a040" stroke-width="1" stroke-dasharray="1.5,0.5"/>
<circle cx="439.2" cy="219" r="3.2" fill="none" stroke="#e02020" stroke-width="1"/>
<line x1="443.7" y1="218" x2="458.2" y2="218" stroke="#40a040" stroke-width="1" stroke-dasharray="1.5,0.5"/>
<line x1="443.7" y1="220.5" x2="456.2" y2="220.5" stroke="#40a040" stroke-width="1" stroke-dasharray="1.5,0.5"/>
<circle cx="346" cy="225.2" r="3.2" fill="none" stroke="#e02020" stroke-width="1"/>
<line x1="350.5" y1="224.2" x2="365" y2="224.2" stroke="#40a040" stroke-width="1" stroke-dasharray="1.5,0.5"/>
<line x1="350.5" y1="226.7" x2="363" y2="226.7" stroke="#40a040" stroke-width="1" stroke-dasharray="1.5,0.5"/>
<circle cx="374.5" cy="261.5" r="3.2" fill="none" stroke="#e02020" stroke-width="1"/>
<line x1="379.0" y1="260.5" x2="393.5" y2="260.5" stroke="#40a040" stroke-width="1" stroke-dasharray="1.5,0.5"/>
<line x1="379.0" y1="263.0" x2="391.5" y2="263.0" stroke="#40a040" stroke-width="1" stroke-dasharray="1.5,0.5"/>
<circle cx="439.2" cy="261.5" r="3.2" fill="none" stroke="#e02020" stroke-width="1"/>
<line x1="443.7" y1="260.5" x2="458.2" y2="260.5" stroke="#40a040" stroke-width="1" stroke-dasharray="1.5,0.5"/>
<line x1="443.7" y1="263.0" x2="456.2" y2="263.0" stroke="#40a040" stroke-width="1" stroke-dasharray="1.5,0.5"/>
<circle cx="355.7" cy="272" r="3.2" fill="none" stroke="#e02020" stroke-width="1"/>
<line x1="360.2" y1="271" x2="374.7" y2="271" stroke="#40a040" stroke-width="1" stroke-dasharray="1.5,0.5"/>
<line x1="360.2" y1="273.5" x2="372.7" y2="273.5" stroke="#40a040" stroke-width="1" stroke-dasharray="1.5,0.5"/>
<circle cx="324.4" cy="297" r="3.2" fill="none" stroke="#e02020" stroke-width="1"/>
<line x1="328.9" y1="296" x2="343.4" y2="296" stroke="#40a040" stroke-width="1" stroke-dasharray="1.5,0.5"/>
<line x1="328.9" y1="298.5" x2="341.4" y2="298.5" stroke="#40a040" stroke-width="1" stroke-dasharray="1.5,0.5"/>
<circle cx="374.5" cy="301.2" r="3.2" fill="none" stroke="#e02020" stroke-width="1"/>
<line x1="379.0" y1="300.2" x2="393.5" y2="300.2" stroke="#40a040" stroke-width="1" stroke-dasharray="1.5,0.5"/>
<line x1="379.0" y1="302.7" x2="391.5" y2="302.7" stroke="#40a040" stroke-width="1" stroke-dasharray="1.5,0.5"/>
<circle cx="439.2" cy="301.2" r="3.2" fill="none" stroke="#e02020" stroke-width="1"/>
<line x1="443.7" y1="300.2" x2="458.2" y2="300.2" stroke="#40a040" stroke-width="1" stroke-dasharray="1.5,0.5"/>
<line x1="443.7" y1="302.7" x2="456.2" y2="302.7" stroke="#40a040" stroke-width="1" stroke-dasharray="1.5,0.5"/>
<line x1="366" y1="158" x2="374" y2="158" stroke="#c0c040" stroke-width="0.8" stroke-dasharray="1,0.6"/>
<line x1="422" y1="163" x2="430" y2="163" stroke="#c0c040" stroke-width="0.8" stroke-dasharray="1,0.6"/>
<line x1="507" y1="170" x2="515" y2="170" stroke="#c0c040" stroke-width="0.8" stroke-dasharray="1,0.6"/>
<line x1="320" y1="203" x2="328" y2="203" stroke="#c0c040" stroke-width="0.8" stroke-dasharray="1,0.6"/>
<line x1="496" y1="252" x2="504" y2="252" stroke="#c0c040" stroke-width="0.8" stroke-dasharray="1,0.6"/>
<line x1="305" y1="264" x2="313" y2="264" stroke="#c0c040" stroke-width="0.8" stroke-dasharray="1,0.6"/>
<line x1="305" y1="289" x2="313" y2="289" stroke="#c0c040" stroke-width="0.8" stroke-dasharray="1,0.6"/>
<line x1="497" y1="335" x2="505" y2="335" stroke="#c0c040" stroke-width="0.8" stroke-dasharray="1,0.6"/>
<line x1="305" y1="332" x2="313" y2="332" stroke="#c0c040" stroke-width="0.8" stroke-dasharray="1,0.6"/>
<line x1="420" y1="332" x2="428" y2="332" stroke="#c0c040" stroke-width="0.8" stroke-dasharray="1,0.6"/>
</g></svg>
<svg x="660" y="108" width="474.3" height="279" overflow="hidden"><g transform="translate(-660,-108)">
<rect x="786" y="322" width="187" height="33" fill="#b4b4b4"/>
<line x1="787" y1="326" x2="972" y2="326" stroke="#a6a6a6" stroke-width="0.5" stroke-dasharray="1,4"/>
<line x1="787" y1="331" x2="972" y2="331" stroke="#a6a6a6" stroke-width="0.5" stroke-dasharray="1,4"/>
<line x1="787" y1="336" x2="972" y2="336" stroke="#a6a6a6" stroke-width="0.5" stroke-dasharray="1,4"/>
<line x1="787" y1="341" x2="972" y2="341" stroke="#a6a6a6" stroke-width="0.5" stroke-dasharray="1,4"/>
<line x1="787" y1="346" x2="972" y2="346" stroke="#a6a6a6" stroke-width="0.5" stroke-dasharray="1,4"/>
<line x1="787" y1="351" x2="972" y2="351" stroke="#a6a6a6" stroke-width="0.5" stroke-dasharray="1,4"/>
<rect x="788" y="306" width="33" height="10" fill="#6a6a6a"/>
<rect x="774.3" y="139" width="55" height="6" fill="#c9c9c9" stroke="#9a9a9a" stroke-width="0.5"/>
<rect x="776" y="145" width="3.5" height="34" fill="#c9c9c9"/><rect x="781.5" y="145" width="4" height="34" fill="#c9c9c9"/><rect x="823" y="145" width="6.3" height="34" fill="#c9c9c9"/>
<rect x="771" y="178.3" width="15" height="177" fill="#c9c9c9" stroke="#9a9a9a" stroke-width="0.4"/>
<rect x="821" y="178.3" width="8.299999999999955" height="177" fill="#c9c9c9" stroke="#9a9a9a" stroke-width="0.4"/>
<rect x="886" y="178.3" width="12.299999999999955" height="177" fill="#c9c9c9" stroke="#9a9a9a" stroke-width="0.4"/>
<rect x="973.3" y="178.3" width="9.400000000000091" height="177" fill="#c9c9c9" stroke="#9a9a9a" stroke-width="0.4"/>
<line x1="778" y1="185" x2="778" y2="355" stroke="#a8a8a8" stroke-width="0.6"/><line x1="782" y1="185" x2="782" y2="355" stroke="#a8a8a8" stroke-width="0.6"/>
<rect x="771" y="178.3" width="211.7" height="6.699999999999989" fill="#c9c9c9" stroke="#9a9a9a" stroke-width="0.4"/>
<rect x="982" y="178.3" width="4" height="6.699999999999989" fill="#6a6a6a"/>
<rect x="771" y="218.3" width="211.7" height="6.0" fill="#c9c9c9" stroke="#9a9a9a" stroke-width="0.4"/>
<rect x="982" y="218.3" width="4" height="6.0" fill="#6a6a6a"/>
<rect x="771" y="257.7" width="211.7" height="6.300000000000011" fill="#c9c9c9" stroke="#9a9a9a" stroke-width="0.4"/>
<rect x="982" y="257.7" width="4" height="6.300000000000011" fill="#6a6a6a"/>
<rect x="771" y="316.7" width="211.7" height="6.0" fill="#c9c9c9" stroke="#9a9a9a" stroke-width="0.4"/>
<rect x="982" y="316.7" width="4" height="6.0" fill="#6a6a6a"/>
<rect x="786" y="305" width="35" height="1.5" fill="#c9c9c9"/>
<rect x="763.3" y="355" width="226" height="7.3" fill="#767676"/><rect x="982" y="355" width="7.3" height="7.3" fill="#555"/>
<line x1="727" y1="357.5" x2="1027" y2="357.5" stroke="#555" stroke-width="0.7"/>
<line x1="727" y1="357.5" x2="731" y2="357.5" stroke="#e03030" stroke-width="1.2"/>
<line x1="811" y1="357.5" x2="815" y2="357.5" stroke="#e03030" stroke-width="1.2"/>
<line x1="834" y1="357.5" x2="838" y2="357.5" stroke="#e03030" stroke-width="1.2"/>
<line x1="888" y1="357.5" x2="892" y2="357.5" stroke="#e03030" stroke-width="1.2"/>
<line x1="973" y1="357.5" x2="977" y2="357.5" stroke="#e03030" stroke-width="1.2"/>
<line x1="1024" y1="357.5" x2="1028" y2="357.5" stroke="#e03030" stroke-width="1.2"/>
<path d="M772,357 L772,340 M769.5,343 L772,339 L774.5,343 M772,357 L790,357 M787,354.5 L791,357 L787,359.5" fill="none" stroke="#e05050" stroke-width="1.1"/>
<rect x="809" y="200.7" width="159.3" height="13.6" fill="#5a6878" fill-opacity="0.2"/>
<text x="830.7" y="210.5" font-size="9" fill="#14181c" fill-opacity="0.85" textLength="70" lengthAdjust="spacingAndGlyphs">Pencere Ekran Alıntısı</text>
</g></svg>
<svg x="177" y="390.3" width="479.3" height="274.7" overflow="hidden"><g transform="translate(-177,-390.3)">
<line x1="283.6" y1="594.6" x2="302" y2="588" stroke="#a0a0a0" stroke-width="0.7"/>
<line x1="283.6" y1="601" x2="303" y2="594" stroke="#a0a0a0" stroke-width="0.7"/>
<line x1="283.6" y1="614.4" x2="310" y2="606" stroke="#a0a0a0" stroke-width="0.7"/>
<line x1="283.6" y1="618.6" x2="311" y2="610" stroke="#a0a0a0" stroke-width="0.7"/>
<line x1="283.6" y1="647.4" x2="314" y2="634" stroke="#a0a0a0" stroke-width="0.7"/>
<line x1="322.7" y1="662.4" x2="318" y2="638" stroke="#a0a0a0" stroke-width="0.7"/>
<line x1="354" y1="646.5" x2="345" y2="626" stroke="#a0a0a0" stroke-width="0.7"/>
<line x1="367.2" y1="640.4" x2="360" y2="622" stroke="#a0a0a0" stroke-width="0.7"/>
<line x1="283" y1="554" x2="300" y2="548" stroke="#a0a0a0" stroke-width="0.7"/>
<line x1="283.6" y1="574" x2="296" y2="568" stroke="#a0a0a0" stroke-width="0.7"/>
<polygon points="259,493 318,488 372,437 372,592 306,612 272,560 254,530" fill="#2e2e44"/>
<polygon points="306,449 372,442 372,485 310,497" fill="#2e2e44"/>
<polygon points="276,466 303,462 316,505 268,497" fill="#2e2e44"/>
<polygon points="232,462 252,436 297,432 302,458 230,466" fill="#2e2e44"/>
<polygon points="270,520 372,494 372,510 275,535" fill="#58587a"/>
<polygon points="282,546 372,522 372,538 290,562" fill="#58587a"/>
<polygon points="300,570 372,552 372,566 306,584" fill="#58587a"/>
<polygon points="320,470 372,462 372,474 323,481" fill="#58587a"/>
<polygon points="318,493 372,486 372,497 320,503" fill="#58587a"/>
<polygon points="330,520 372,508 372,528 336,538" fill="#6a6a8a"/>
<polygon points="336,527 368,518 368,524 338,532" fill="#b0b0c0"/>
<line x1="279" y1="538" x2="290.6" y2="561.7" stroke="#7e7e9c" stroke-width="3" stroke-linecap="butt"/>
<line x1="296.4" y1="534.5" x2="306" y2="577" stroke="#9a9ab0" stroke-width="3" stroke-linecap="butt"/>
<line x1="302" y1="544" x2="331" y2="616" stroke="#bdbdc4" stroke-width="5" stroke-linecap="butt"/>
<line x1="270" y1="510" x2="284" y2="540" stroke="#7e7e9c" stroke-width="3" stroke-linecap="butt"/>
<line x1="286" y1="505" x2="300" y2="540" stroke="#7e7e9c" stroke-width="3" stroke-linecap="butt"/>
<line x1="345" y1="510" x2="372" y2="600" stroke="#7e7e9c" stroke-width="4" stroke-linecap="butt"/>
<line x1="262" y1="470" x2="275" y2="498" stroke="#a8a8b8" stroke-width="3" stroke-linecap="butt"/>
<line x1="282" y1="468" x2="276" y2="497" stroke="#a8a8b8" stroke-width="3" stroke-linecap="butt"/>
<line x1="276" y1="476" x2="305" y2="472" stroke="#7e7e9c" stroke-width="3.5" stroke-linecap="butt"/>
<line x1="272" y1="487" x2="309" y2="483" stroke="#7e7e9c" stroke-width="3.5" stroke-linecap="butt"/>
<line x1="289" y1="466" x2="292" y2="497" stroke="#7e7e9c" stroke-width="2.5" stroke-linecap="butt"/>
<line x1="306.4" y1="451.5" x2="372" y2="444.5" stroke="#b4b4c0" stroke-width="5.5" stroke-linecap="butt"/>
<line x1="310" y1="461" x2="372" y2="455.6" stroke="#b4b4c0" stroke-width="5.5" stroke-linecap="butt"/>
<line x1="313.4" y1="471" x2="372" y2="465.5" stroke="#b4b4c0" stroke-width="5.5" stroke-linecap="butt"/>
<line x1="316.9" y1="480.7" x2="372" y2="475.5" stroke="#b4b4c0" stroke-width="5.5" stroke-linecap="butt"/>
<line x1="259.5" y1="503.3" x2="372" y2="480" stroke="#b4b4c0" stroke-width="7" stroke-linecap="butt"/>
<line x1="349.5" y1="447.3" x2="372" y2="474" stroke="#a8a8b8" stroke-width="5" stroke-linecap="butt"/>
<polygon points="300,602 372,582 372,613 313,632" fill="#bdbdc0"/>
<line x1="322" y1="603" x2="330" y2="628" stroke="#d8d8d8" stroke-width="0.6"/><line x1="345" y1="595" x2="352" y2="620" stroke="#d8d8d8" stroke-width="0.6"/>
<polygon points="311,631 372,612 372,621 315,641" fill="#808084"/>
<path d="M351,622 L361,618 M334,611 L336,618" stroke="#e04040" stroke-width="1.2"/>
<line x1="252.7" y1="436.1" x2="297.2" y2="432" stroke="#a8a8b8" stroke-width="5" stroke-linecap="butt"/>
<line x1="242.3" y1="454.9" x2="297.9" y2="448.6" stroke="#b4b4bc" stroke-width="6" stroke-linecap="butt"/>
<line x1="231.8" y1="461.9" x2="252.7" y2="436.1" stroke="#c4c4c8" stroke-width="7" stroke-linecap="butt"/>
<line x1="297.2" y1="431.3" x2="303.4" y2="461.2" stroke="#c4c4c8" stroke-width="6" stroke-linecap="butt"/>
<line x1="230.4" y1="466" x2="302" y2="457.7" stroke="#c4c4c8" stroke-width="8" stroke-linecap="butt"/>
<line x1="247.8" y1="469.5" x2="261.7" y2="495.9" stroke="#c4c4c8" stroke-width="6" stroke-linecap="butt"/>
<line x1="270" y1="466.7" x2="263.1" y2="495.9" stroke="#c4c4c8" stroke-width="4.5" stroke-linecap="butt"/>
<line x1="303.4" y1="461.2" x2="318" y2="510" stroke="#c4c4c8" stroke-width="6.5" stroke-linecap="butt"/>
<line x1="246" y1="532" x2="260.5" y2="493" stroke="#c4c4c8" stroke-width="7" stroke-linecap="butt"/>
<line x1="261.6" y1="562.1" x2="372" y2="535" stroke="#c4c4c8" stroke-width="8" stroke-linecap="butt"/>
<line x1="279.9" y1="587.8" x2="372" y2="563" stroke="#c4c4c8" stroke-width="7" stroke-linecap="butt"/>
<line x1="300.7" y1="612.2" x2="372" y2="590" stroke="#c4c4c8" stroke-width="7" stroke-linecap="butt"/>
<line x1="317.8" y1="516.9" x2="352" y2="617.1" stroke="#c4c4c8" stroke-width="9" stroke-linecap="butt"/>
<line x1="243.2" y1="534" x2="372" y2="503" stroke="#c4c4c8" stroke-width="9" stroke-linecap="butt"/>
<line x1="247.5" y1="533" x2="318" y2="629" stroke="#c4c4c8" stroke-width="9" stroke-linecap="butt"/>
<line x1="243.5" y1="534" x2="314" y2="629" stroke="#e6e6ea" stroke-width="1.2"/>
<circle cx="283.6" cy="594.6" r="2" fill="#e8a020" stroke="#e03010" stroke-width="0.9"/>
<circle cx="283.6" cy="601" r="2" fill="#e8a020" stroke="#e03010" stroke-width="0.9"/>
<circle cx="283.6" cy="614.4" r="2" fill="#e8a020" stroke="#e03010" stroke-width="0.9"/>
<circle cx="283.6" cy="618.6" r="2" fill="#e8a020" stroke="#e03010" stroke-width="0.9"/>
<circle cx="283.6" cy="647.4" r="2" fill="#e8a020" stroke="#e03010" stroke-width="0.9"/>
<circle cx="322.7" cy="662.4" r="2" fill="#e8a020" stroke="#e03010" stroke-width="0.9"/>
<circle cx="354" cy="646.5" r="2" fill="#e8a020" stroke="#e03010" stroke-width="0.9"/>
<circle cx="367.2" cy="640.4" r="2" fill="#e8a020" stroke="#e03010" stroke-width="0.9"/>
<circle cx="283" cy="554" r="2" fill="#e8a020" stroke="#e03010" stroke-width="0.9"/>
<circle cx="283.6" cy="574" r="2" fill="#e8a020" stroke="#e03010" stroke-width="0.9"/>
<circle cx="312" cy="532" r="1.3" fill="#f04040"/>
<circle cx="303" cy="590" r="1.3" fill="#f04040"/>
</g></svg>
<svg x="660" y="390.3" width="474.3" height="274.7" overflow="hidden"><g transform="translate(-660,-390.3)">
<line x1="820" y1="585" x2="862" y2="566" stroke="#8a8a8a" stroke-width="0.6"/>
<line x1="835" y1="640" x2="880" y2="606" stroke="#8a8a8a" stroke-width="0.6"/>
<line x1="1068" y1="548" x2="1030" y2="574" stroke="#8a8a8a" stroke-width="0.6"/>
<line x1="1052" y1="655" x2="1000" y2="618" stroke="#8a8a8a" stroke-width="0.6"/>
<line x1="965" y1="672" x2="950" y2="640" stroke="#8a8a8a" stroke-width="0.6"/>
<line x1="846" y1="470" x2="864" y2="500" stroke="#8a8a8a" stroke-width="0.6"/>
<line x1="842" y1="525" x2="866" y2="534" stroke="#8a8a8a" stroke-width="0.6"/>
<line x1="1010" y1="640" x2="990" y2="625" stroke="#8a8a8a" stroke-width="0.6"/>
<circle cx="861.5" cy="610.4" r="1.7" fill="none" stroke="#e05020" stroke-width="0.9"/>
<circle cx="863" cy="616.7" r="1.7" fill="none" stroke="#e05020" stroke-width="0.9"/>
<circle cx="870.8" cy="632.7" r="1.7" fill="none" stroke="#e05020" stroke-width="0.9"/>
<circle cx="871" cy="636" r="1.7" fill="none" stroke="#e05020" stroke-width="0.9"/>
<circle cx="1043" cy="548" r="1.7" fill="none" stroke="#e05020" stroke-width="0.9"/>
<circle cx="1078" cy="535" r="1.7" fill="none" stroke="#e05020" stroke-width="0.9"/>
<circle cx="1041" cy="643" r="1.7" fill="none" stroke="#e05020" stroke-width="0.9"/>
<circle cx="956" cy="667" r="1.7" fill="none" stroke="#e05020" stroke-width="0.9"/>
<circle cx="863" cy="557" r="1.7" fill="none" stroke="#e05020" stroke-width="0.9"/>
<circle cx="845" cy="540" r="1.7" fill="none" stroke="#e05020" stroke-width="0.9"/>
<polygon points="860.0,559.0 917.0,661.0 1031.0,594.0 940.0,540.0" fill="#a8c030"/>
<polyline points="859,560 917,662 1032,594" fill="none" stroke="#c8d838" stroke-width="4"/>
<polyline points="859,560 917,662 1032,594" fill="none" stroke="#50801a" stroke-width="0.6" stroke-dasharray="2,2"/>
<line x1="864" y1="561" x2="917" y2="656" stroke="#e03020" stroke-width="1.2"/>
<polygon points="871.5,534.5 919.0,601.0 917.0,661.0 860.0,559.0" fill="#a6f0c8"/>
<line x1="869.6" y1="538.6" x2="918.7" y2="611.0" stroke="#4a7a60" stroke-width="0.4" stroke-opacity="0.8"/>
<line x1="867.7" y1="542.7" x2="918.3" y2="621.0" stroke="#4a7a60" stroke-width="0.4" stroke-opacity="0.8"/>
<line x1="865.8" y1="546.8" x2="918.0" y2="631.0" stroke="#4a7a60" stroke-width="0.4" stroke-opacity="0.8"/>
<line x1="863.8" y1="550.8" x2="917.7" y2="641.0" stroke="#4a7a60" stroke-width="0.4" stroke-opacity="0.8"/>
<line x1="861.9" y1="554.9" x2="917.3" y2="651.0" stroke="#4a7a60" stroke-width="0.4" stroke-opacity="0.8"/>
<line x1="876.2" y1="541.1" x2="865.7" y2="569.2" stroke="#4a7a60" stroke-width="0.4" stroke-opacity="0.8"/>
<line x1="881.0" y1="547.8" x2="871.4" y2="579.4" stroke="#4a7a60" stroke-width="0.4" stroke-opacity="0.8"/>
<line x1="885.8" y1="554.5" x2="877.1" y2="589.6" stroke="#4a7a60" stroke-width="0.4" stroke-opacity="0.8"/>
<line x1="890.5" y1="561.1" x2="882.8" y2="599.8" stroke="#4a7a60" stroke-width="0.4" stroke-opacity="0.8"/>
<line x1="895.2" y1="567.8" x2="888.5" y2="610.0" stroke="#4a7a60" stroke-width="0.4" stroke-opacity="0.8"/>
<line x1="900.0" y1="574.4" x2="894.2" y2="620.2" stroke="#4a7a60" stroke-width="0.4" stroke-opacity="0.8"/>
<line x1="904.8" y1="581.0" x2="899.9" y2="630.4" stroke="#4a7a60" stroke-width="0.4" stroke-opacity="0.8"/>
<line x1="909.5" y1="587.7" x2="905.6" y2="640.6" stroke="#4a7a60" stroke-width="0.4" stroke-opacity="0.8"/>
<line x1="914.2" y1="594.4" x2="911.3" y2="650.8" stroke="#4a7a60" stroke-width="0.4" stroke-opacity="0.8"/>
<polygon points="919.0,601.0 1030.9,571.0 1031.0,594.0 917.0,661.0" fill="#a6f0c8"/>
<line x1="918.8" y1="606.5" x2="1030.9" y2="573.1" stroke="#4a7a60" stroke-width="0.4" stroke-opacity="0.8"/>
<line x1="918.6" y1="611.9" x2="1030.9" y2="575.2" stroke="#4a7a60" stroke-width="0.4" stroke-opacity="0.8"/>
<line x1="918.5" y1="617.4" x2="1030.9" y2="577.3" stroke="#4a7a60" stroke-width="0.4" stroke-opacity="0.8"/>
<line x1="918.3" y1="622.8" x2="1030.9" y2="579.4" stroke="#4a7a60" stroke-width="0.4" stroke-opacity="0.8"/>
<line x1="918.1" y1="628.3" x2="1030.9" y2="581.5" stroke="#4a7a60" stroke-width="0.4" stroke-opacity="0.8"/>
<line x1="917.9" y1="633.7" x2="1031.0" y2="583.5" stroke="#4a7a60" stroke-width="0.4" stroke-opacity="0.8"/>
<line x1="917.7" y1="639.2" x2="1031.0" y2="585.6" stroke="#4a7a60" stroke-width="0.4" stroke-opacity="0.8"/>
<line x1="917.5" y1="644.6" x2="1031.0" y2="587.7" stroke="#4a7a60" stroke-width="0.4" stroke-opacity="0.8"/>
<line x1="917.4" y1="650.1" x2="1031.0" y2="589.8" stroke="#4a7a60" stroke-width="0.4" stroke-opacity="0.8"/>
<line x1="917.2" y1="655.5" x2="1031.0" y2="591.9" stroke="#4a7a60" stroke-width="0.4" stroke-opacity="0.8"/>
<line x1="937.6" y1="596.0" x2="936.0" y2="649.8" stroke="#4a7a60" stroke-width="0.4" stroke-opacity="0.8"/>
<line x1="956.3" y1="591.0" x2="955.0" y2="638.7" stroke="#4a7a60" stroke-width="0.4" stroke-opacity="0.8"/>
<line x1="975.0" y1="586.0" x2="974.0" y2="627.5" stroke="#4a7a60" stroke-width="0.4" stroke-opacity="0.8"/>
<line x1="993.6" y1="581.0" x2="993.0" y2="616.3" stroke="#4a7a60" stroke-width="0.4" stroke-opacity="0.8"/>
<line x1="1012.3" y1="576.0" x2="1012.0" y2="605.2" stroke="#4a7a60" stroke-width="0.4" stroke-opacity="0.8"/>
<polygon points="871.5,534.5 944.8,518.0 1030.9,571.0 919.0,601.0" fill="#a39676"/>
<line x1="877.4" y1="542.8" x2="955.5" y2="524.6" stroke="#2e261a" stroke-width="0.5" stroke-opacity="0.8"/>
<line x1="883.4" y1="551.1" x2="966.3" y2="531.2" stroke="#2e261a" stroke-width="0.5" stroke-opacity="0.8"/>
<line x1="889.3" y1="559.4" x2="977.1" y2="537.9" stroke="#2e261a" stroke-width="0.5" stroke-opacity="0.8"/>
<line x1="895.2" y1="567.8" x2="987.8" y2="544.5" stroke="#2e261a" stroke-width="0.5" stroke-opacity="0.8"/>
<line x1="901.2" y1="576.1" x2="998.6" y2="551.1" stroke="#2e261a" stroke-width="0.5" stroke-opacity="0.8"/>
<line x1="907.1" y1="584.4" x2="1009.4" y2="557.8" stroke="#2e261a" stroke-width="0.5" stroke-opacity="0.8"/>
<line x1="913.1" y1="592.7" x2="1020.1" y2="564.4" stroke="#2e261a" stroke-width="0.5" stroke-opacity="0.8"/>
<line x1="877.6" y1="533.1" x2="928.3" y2="598.5" stroke="#2e261a" stroke-width="0.5" stroke-opacity="0.8"/>
<line x1="883.7" y1="531.8" x2="937.6" y2="596.0" stroke="#2e261a" stroke-width="0.5" stroke-opacity="0.8"/>
<line x1="889.8" y1="530.4" x2="947.0" y2="593.5" stroke="#2e261a" stroke-width="0.5" stroke-opacity="0.8"/>
<line x1="895.9" y1="529.0" x2="956.3" y2="591.0" stroke="#2e261a" stroke-width="0.5" stroke-opacity="0.8"/>
<line x1="902.0" y1="527.6" x2="965.6" y2="588.5" stroke="#2e261a" stroke-width="0.5" stroke-opacity="0.8"/>
<line x1="908.1" y1="526.2" x2="975.0" y2="586.0" stroke="#2e261a" stroke-width="0.5" stroke-opacity="0.8"/>
<line x1="914.2" y1="524.9" x2="984.3" y2="583.5" stroke="#2e261a" stroke-width="0.5" stroke-opacity="0.8"/>
<line x1="920.3" y1="523.5" x2="993.6" y2="581.0" stroke="#2e261a" stroke-width="0.5" stroke-opacity="0.8"/>
<line x1="926.4" y1="522.1" x2="1002.9" y2="578.5" stroke="#2e261a" stroke-width="0.5" stroke-opacity="0.8"/>
<line x1="932.5" y1="520.8" x2="1012.3" y2="576.0" stroke="#2e261a" stroke-width="0.5" stroke-opacity="0.8"/>
<line x1="938.6" y1="519.4" x2="1021.6" y2="573.5" stroke="#2e261a" stroke-width="0.5" stroke-opacity="0.8"/>
<line x1="887.2" y1="556.4" x2="973.2" y2="535.5" stroke="#8a5420" stroke-width="1.2"/>
<line x1="902.9" y1="578.4" x2="1001.6" y2="553.0" stroke="#8a5420" stroke-width="1.2"/>
<line x1="893.5" y1="529.5" x2="952.6" y2="592.0" stroke="#8a5420" stroke-width="1.2"/>
<line x1="916.9" y1="524.3" x2="988.4" y2="582.4" stroke="#8a5420" stroke-width="1.2"/>
<line x1="871.5" y1="534.5" x2="919.0" y2="601.0" stroke="#6a3c10" stroke-width="5.8"/>
<line x1="871.5" y1="534.5" x2="919.0" y2="601.0" stroke="#f2a444" stroke-width="4.5"/>
<line x1="876.8" y1="539.6" x2="876.8" y2="544.1" stroke="#6a3c10" stroke-width="0.7"/>
<line x1="882.1" y1="547.0" x2="882.1" y2="551.5" stroke="#6a3c10" stroke-width="0.7"/>
<line x1="887.3" y1="554.4" x2="887.3" y2="558.9" stroke="#6a3c10" stroke-width="0.7"/>
<line x1="892.6" y1="561.8" x2="892.6" y2="566.3" stroke="#6a3c10" stroke-width="0.7"/>
<line x1="897.9" y1="569.2" x2="897.9" y2="573.7" stroke="#6a3c10" stroke-width="0.7"/>
<line x1="903.2" y1="576.6" x2="903.2" y2="581.1" stroke="#6a3c10" stroke-width="0.7"/>
<line x1="908.4" y1="584.0" x2="908.4" y2="588.5" stroke="#6a3c10" stroke-width="0.7"/>
<line x1="913.7" y1="591.4" x2="913.7" y2="595.9" stroke="#6a3c10" stroke-width="0.7"/>
<line x1="919.0" y1="601.0" x2="1030.9" y2="571.0" stroke="#6a3c10" stroke-width="7.3"/>
<line x1="919.0" y1="601.0" x2="1030.9" y2="571.0" stroke="#f2a444" stroke-width="6"/>
<line x1="926.0" y1="596.1" x2="926.0" y2="602.1" stroke="#6a3c10" stroke-width="0.7"/>
<line x1="933.0" y1="594.2" x2="933.0" y2="600.2" stroke="#6a3c10" stroke-width="0.7"/>
<line x1="940.0" y1="592.4" x2="940.0" y2="598.4" stroke="#6a3c10" stroke-width="0.7"/>
<line x1="947.0" y1="590.5" x2="947.0" y2="596.5" stroke="#6a3c10" stroke-width="0.7"/>
<line x1="954.0" y1="588.6" x2="954.0" y2="594.6" stroke="#6a3c10" stroke-width="0.7"/>
<line x1="961.0" y1="586.8" x2="961.0" y2="592.8" stroke="#6a3c10" stroke-width="0.7"/>
<line x1="968.0" y1="584.9" x2="968.0" y2="590.9" stroke="#6a3c10" stroke-width="0.7"/>
<line x1="975.0" y1="583.0" x2="975.0" y2="589.0" stroke="#6a3c10" stroke-width="0.7"/>
<line x1="981.9" y1="581.1" x2="981.9" y2="587.1" stroke="#6a3c10" stroke-width="0.7"/>
<line x1="988.9" y1="579.2" x2="988.9" y2="585.2" stroke="#6a3c10" stroke-width="0.7"/>
<line x1="995.9" y1="577.4" x2="995.9" y2="583.4" stroke="#6a3c10" stroke-width="0.7"/>
<line x1="1002.9" y1="575.5" x2="1002.9" y2="581.5" stroke="#6a3c10" stroke-width="0.7"/>
<line x1="1009.9" y1="573.6" x2="1009.9" y2="579.6" stroke="#6a3c10" stroke-width="0.7"/>
<line x1="1016.9" y1="571.8" x2="1016.9" y2="577.8" stroke="#6a3c10" stroke-width="0.7"/>
<line x1="1023.9" y1="569.9" x2="1023.9" y2="575.9" stroke="#6a3c10" stroke-width="0.7"/>
<polygon points="870.0,524.5 943.0,508.0 1044.5,539.5 923.2,590.0" fill="#a39676"/>
<line x1="876.6" y1="532.7" x2="955.7" y2="511.9" stroke="#2e261a" stroke-width="0.5" stroke-opacity="0.8"/>
<line x1="883.3" y1="540.9" x2="968.4" y2="515.9" stroke="#2e261a" stroke-width="0.5" stroke-opacity="0.8"/>
<line x1="890.0" y1="549.1" x2="981.1" y2="519.8" stroke="#2e261a" stroke-width="0.5" stroke-opacity="0.8"/>
<line x1="896.6" y1="557.2" x2="993.8" y2="523.8" stroke="#2e261a" stroke-width="0.5" stroke-opacity="0.8"/>
<line x1="903.2" y1="565.4" x2="1006.4" y2="527.7" stroke="#2e261a" stroke-width="0.5" stroke-opacity="0.8"/>
<line x1="909.9" y1="573.6" x2="1019.1" y2="531.6" stroke="#2e261a" stroke-width="0.5" stroke-opacity="0.8"/>
<line x1="916.6" y1="581.8" x2="1031.8" y2="535.6" stroke="#2e261a" stroke-width="0.5" stroke-opacity="0.8"/>
<line x1="876.1" y1="523.1" x2="933.3" y2="585.8" stroke="#2e261a" stroke-width="0.5" stroke-opacity="0.8"/>
<line x1="882.2" y1="521.8" x2="943.4" y2="581.6" stroke="#2e261a" stroke-width="0.5" stroke-opacity="0.8"/>
<line x1="888.2" y1="520.4" x2="953.5" y2="577.4" stroke="#2e261a" stroke-width="0.5" stroke-opacity="0.8"/>
<line x1="894.3" y1="519.0" x2="963.6" y2="573.2" stroke="#2e261a" stroke-width="0.5" stroke-opacity="0.8"/>
<line x1="900.4" y1="517.6" x2="973.7" y2="569.0" stroke="#2e261a" stroke-width="0.5" stroke-opacity="0.8"/>
<line x1="906.5" y1="516.2" x2="983.9" y2="564.8" stroke="#2e261a" stroke-width="0.5" stroke-opacity="0.8"/>
<line x1="912.6" y1="514.9" x2="994.0" y2="560.5" stroke="#2e261a" stroke-width="0.5" stroke-opacity="0.8"/>
<line x1="918.7" y1="513.5" x2="1004.1" y2="556.3" stroke="#2e261a" stroke-width="0.5" stroke-opacity="0.8"/>
<line x1="924.8" y1="512.1" x2="1014.2" y2="552.1" stroke="#2e261a" stroke-width="0.5" stroke-opacity="0.8"/>
<line x1="930.8" y1="510.8" x2="1024.3" y2="547.9" stroke="#2e261a" stroke-width="0.5" stroke-opacity="0.8"/>
<line x1="936.9" y1="509.4" x2="1034.4" y2="543.7" stroke="#2e261a" stroke-width="0.5" stroke-opacity="0.8"/>
<line x1="887.6" y1="546.1" x2="976.5" y2="518.4" stroke="#8a5420" stroke-width="1.2"/>
<line x1="905.1" y1="567.7" x2="1010.0" y2="528.8" stroke="#8a5420" stroke-width="1.2"/>
<line x1="891.9" y1="519.5" x2="959.6" y2="574.9" stroke="#8a5420" stroke-width="1.2"/>
<line x1="915.3" y1="514.3" x2="998.4" y2="558.7" stroke="#8a5420" stroke-width="1.2"/>
<line x1="870.0" y1="524.5" x2="923.2" y2="590.0" stroke="#6a3c10" stroke-width="5.8"/>
<line x1="870.0" y1="524.5" x2="923.2" y2="590.0" stroke="#f2a444" stroke-width="4.5"/>
<line x1="875.9" y1="529.5" x2="875.9" y2="534.0" stroke="#6a3c10" stroke-width="0.7"/>
<line x1="881.8" y1="536.8" x2="881.8" y2="541.3" stroke="#6a3c10" stroke-width="0.7"/>
<line x1="887.7" y1="544.1" x2="887.7" y2="548.6" stroke="#6a3c10" stroke-width="0.7"/>
<line x1="893.6" y1="551.4" x2="893.6" y2="555.9" stroke="#6a3c10" stroke-width="0.7"/>
<line x1="899.6" y1="558.6" x2="899.6" y2="563.1" stroke="#6a3c10" stroke-width="0.7"/>
<line x1="905.5" y1="565.9" x2="905.5" y2="570.4" stroke="#6a3c10" stroke-width="0.7"/>
<line x1="911.4" y1="573.2" x2="911.4" y2="577.7" stroke="#6a3c10" stroke-width="0.7"/>
<line x1="917.3" y1="580.5" x2="917.3" y2="585.0" stroke="#6a3c10" stroke-width="0.7"/>
<line x1="923.2" y1="590.0" x2="1044.5" y2="539.5" stroke="#6a3c10" stroke-width="7.3"/>
<line x1="923.2" y1="590.0" x2="1044.5" y2="539.5" stroke="#f2a444" stroke-width="6"/>
<line x1="930.8" y1="583.8" x2="930.8" y2="589.8" stroke="#6a3c10" stroke-width="0.7"/>
<line x1="938.4" y1="580.7" x2="938.4" y2="586.7" stroke="#6a3c10" stroke-width="0.7"/>
<line x1="945.9" y1="577.5" x2="945.9" y2="583.5" stroke="#6a3c10" stroke-width="0.7"/>
<line x1="953.5" y1="574.4" x2="953.5" y2="580.4" stroke="#6a3c10" stroke-width="0.7"/>
<line x1="961.1" y1="571.2" x2="961.1" y2="577.2" stroke="#6a3c10" stroke-width="0.7"/>
<line x1="968.7" y1="568.1" x2="968.7" y2="574.1" stroke="#6a3c10" stroke-width="0.7"/>
<line x1="976.3" y1="564.9" x2="976.3" y2="570.9" stroke="#6a3c10" stroke-width="0.7"/>
<line x1="983.9" y1="561.8" x2="983.9" y2="567.8" stroke="#6a3c10" stroke-width="0.7"/>
<line x1="991.4" y1="558.6" x2="991.4" y2="564.6" stroke="#6a3c10" stroke-width="0.7"/>
<line x1="999.0" y1="555.4" x2="999.0" y2="561.4" stroke="#6a3c10" stroke-width="0.7"/>
<line x1="1006.6" y1="552.3" x2="1006.6" y2="558.3" stroke="#6a3c10" stroke-width="0.7"/>
<line x1="1014.2" y1="549.1" x2="1014.2" y2="555.1" stroke="#6a3c10" stroke-width="0.7"/>
<line x1="1021.8" y1="546.0" x2="1021.8" y2="552.0" stroke="#6a3c10" stroke-width="0.7"/>
<line x1="1029.3" y1="542.8" x2="1029.3" y2="548.8" stroke="#6a3c10" stroke-width="0.7"/>
<line x1="1036.9" y1="539.7" x2="1036.9" y2="545.7" stroke="#6a3c10" stroke-width="0.7"/>
<polygon points="867.2,495.8 940.5,479.2 1058.2,515.0 926.0,554.5" fill="#a39676"/>
<line x1="873.7" y1="502.3" x2="953.6" y2="483.2" stroke="#2e261a" stroke-width="0.5" stroke-opacity="0.8"/>
<line x1="880.3" y1="508.8" x2="966.7" y2="487.2" stroke="#2e261a" stroke-width="0.5" stroke-opacity="0.8"/>
<line x1="886.8" y1="515.4" x2="979.7" y2="491.1" stroke="#2e261a" stroke-width="0.5" stroke-opacity="0.8"/>
<line x1="893.3" y1="521.9" x2="992.8" y2="495.1" stroke="#2e261a" stroke-width="0.5" stroke-opacity="0.8"/>
<line x1="899.9" y1="528.4" x2="1005.9" y2="499.1" stroke="#2e261a" stroke-width="0.5" stroke-opacity="0.8"/>
<line x1="906.4" y1="534.9" x2="1019.0" y2="503.1" stroke="#2e261a" stroke-width="0.5" stroke-opacity="0.8"/>
<line x1="912.9" y1="541.5" x2="1032.0" y2="507.0" stroke="#2e261a" stroke-width="0.5" stroke-opacity="0.8"/>
<line x1="919.5" y1="548.0" x2="1045.1" y2="511.0" stroke="#2e261a" stroke-width="0.5" stroke-opacity="0.8"/>
<line x1="872.8" y1="494.5" x2="936.2" y2="551.5" stroke="#2e261a" stroke-width="0.5" stroke-opacity="0.8"/>
<line x1="878.5" y1="493.2" x2="946.3" y2="548.4" stroke="#2e261a" stroke-width="0.5" stroke-opacity="0.8"/>
<line x1="884.1" y1="492.0" x2="956.5" y2="545.4" stroke="#2e261a" stroke-width="0.5" stroke-opacity="0.8"/>
<line x1="889.8" y1="490.7" x2="966.7" y2="542.3" stroke="#2e261a" stroke-width="0.5" stroke-opacity="0.8"/>
<line x1="895.4" y1="489.4" x2="976.8" y2="539.3" stroke="#2e261a" stroke-width="0.5" stroke-opacity="0.8"/>
<line x1="901.0" y1="488.1" x2="987.0" y2="536.3" stroke="#2e261a" stroke-width="0.5" stroke-opacity="0.8"/>
<line x1="906.7" y1="486.9" x2="997.2" y2="533.2" stroke="#2e261a" stroke-width="0.5" stroke-opacity="0.8"/>
<line x1="912.3" y1="485.6" x2="1007.4" y2="530.2" stroke="#2e261a" stroke-width="0.5" stroke-opacity="0.8"/>
<line x1="917.9" y1="484.3" x2="1017.5" y2="527.2" stroke="#2e261a" stroke-width="0.5" stroke-opacity="0.8"/>
<line x1="923.6" y1="483.0" x2="1027.7" y2="524.1" stroke="#2e261a" stroke-width="0.5" stroke-opacity="0.8"/>
<line x1="929.2" y1="481.8" x2="1037.9" y2="521.1" stroke="#2e261a" stroke-width="0.5" stroke-opacity="0.8"/>
<line x1="934.9" y1="480.5" x2="1048.0" y2="518.0" stroke="#2e261a" stroke-width="0.5" stroke-opacity="0.8"/>
<line x1="886.6" y1="515.2" x2="979.3" y2="491.0" stroke="#8a5420" stroke-width="1.2"/>
<line x1="906.0" y1="534.5" x2="1018.2" y2="502.8" stroke="#8a5420" stroke-width="1.2"/>
<line x1="889.2" y1="490.8" x2="965.7" y2="542.6" stroke="#8a5420" stroke-width="1.2"/>
<line x1="912.6" y1="485.5" x2="1008.0" y2="530.0" stroke="#8a5420" stroke-width="1.2"/>
<line x1="867.2" y1="495.8" x2="926.0" y2="554.5" stroke="#6a3c10" stroke-width="5.8"/>
<line x1="867.2" y1="495.8" x2="926.0" y2="554.5" stroke="#f2a444" stroke-width="4.5"/>
<line x1="873.7" y1="500.1" x2="873.7" y2="504.6" stroke="#6a3c10" stroke-width="0.7"/>
<line x1="880.3" y1="506.6" x2="880.3" y2="511.1" stroke="#6a3c10" stroke-width="0.7"/>
<line x1="886.8" y1="513.1" x2="886.8" y2="517.6" stroke="#6a3c10" stroke-width="0.7"/>
<line x1="893.3" y1="519.6" x2="893.3" y2="524.1" stroke="#6a3c10" stroke-width="0.7"/>
<line x1="899.9" y1="526.2" x2="899.9" y2="530.7" stroke="#6a3c10" stroke-width="0.7"/>
<line x1="906.4" y1="532.7" x2="906.4" y2="537.2" stroke="#6a3c10" stroke-width="0.7"/>
<line x1="912.9" y1="539.2" x2="912.9" y2="543.7" stroke="#6a3c10" stroke-width="0.7"/>
<line x1="919.5" y1="545.7" x2="919.5" y2="550.2" stroke="#6a3c10" stroke-width="0.7"/>
<line x1="926.0" y1="554.5" x2="1058.2" y2="515.0" stroke="#6a3c10" stroke-width="7.3"/>
<line x1="926.0" y1="554.5" x2="1058.2" y2="515.0" stroke="#f2a444" stroke-width="6"/>
<line x1="934.3" y1="549.0" x2="934.3" y2="555.0" stroke="#6a3c10" stroke-width="0.7"/>
<line x1="942.5" y1="546.6" x2="942.5" y2="552.6" stroke="#6a3c10" stroke-width="0.7"/>
<line x1="950.8" y1="544.1" x2="950.8" y2="550.1" stroke="#6a3c10" stroke-width="0.7"/>
<line x1="959.0" y1="541.6" x2="959.0" y2="547.6" stroke="#6a3c10" stroke-width="0.7"/>
<line x1="967.3" y1="539.2" x2="967.3" y2="545.2" stroke="#6a3c10" stroke-width="0.7"/>
<line x1="975.6" y1="536.7" x2="975.6" y2="542.7" stroke="#6a3c10" stroke-width="0.7"/>
<line x1="983.8" y1="534.2" x2="983.8" y2="540.2" stroke="#6a3c10" stroke-width="0.7"/>
<line x1="992.1" y1="531.8" x2="992.1" y2="537.8" stroke="#6a3c10" stroke-width="0.7"/>
<line x1="1000.4" y1="529.3" x2="1000.4" y2="535.3" stroke="#6a3c10" stroke-width="0.7"/>
<line x1="1008.6" y1="526.8" x2="1008.6" y2="532.8" stroke="#6a3c10" stroke-width="0.7"/>
<line x1="1016.9" y1="524.3" x2="1016.9" y2="530.3" stroke="#6a3c10" stroke-width="0.7"/>
<line x1="1025.2" y1="521.9" x2="1025.2" y2="527.9" stroke="#6a3c10" stroke-width="0.7"/>
<line x1="1033.4" y1="519.4" x2="1033.4" y2="525.4" stroke="#6a3c10" stroke-width="0.7"/>
<line x1="1041.7" y1="516.9" x2="1041.7" y2="522.9" stroke="#6a3c10" stroke-width="0.7"/>
<line x1="1049.9" y1="514.5" x2="1049.9" y2="520.5" stroke="#6a3c10" stroke-width="0.7"/>
<polygon points="864.8,469.3 938.0,452.7 1071.7,481.0 926.0,514.0" fill="#a39676"/>
<line x1="870.9" y1="473.8" x2="951.4" y2="455.5" stroke="#2e261a" stroke-width="0.5" stroke-opacity="0.8"/>
<line x1="877.0" y1="478.2" x2="964.7" y2="458.4" stroke="#2e261a" stroke-width="0.5" stroke-opacity="0.8"/>
<line x1="883.1" y1="482.7" x2="978.1" y2="461.2" stroke="#2e261a" stroke-width="0.5" stroke-opacity="0.8"/>
<line x1="889.2" y1="487.2" x2="991.5" y2="464.0" stroke="#2e261a" stroke-width="0.5" stroke-opacity="0.8"/>
<line x1="895.4" y1="491.6" x2="1004.9" y2="466.9" stroke="#2e261a" stroke-width="0.5" stroke-opacity="0.8"/>
<line x1="901.5" y1="496.1" x2="1018.2" y2="469.7" stroke="#2e261a" stroke-width="0.5" stroke-opacity="0.8"/>
<line x1="907.6" y1="500.6" x2="1031.6" y2="472.5" stroke="#2e261a" stroke-width="0.5" stroke-opacity="0.8"/>
<line x1="913.8" y1="505.1" x2="1045.0" y2="475.3" stroke="#2e261a" stroke-width="0.5" stroke-opacity="0.8"/>
<line x1="919.9" y1="509.5" x2="1058.3" y2="478.2" stroke="#2e261a" stroke-width="0.5" stroke-opacity="0.8"/>
<line x1="869.6" y1="468.2" x2="935.7" y2="511.8" stroke="#2e261a" stroke-width="0.5" stroke-opacity="0.8"/>
<line x1="874.5" y1="467.1" x2="945.4" y2="509.6" stroke="#2e261a" stroke-width="0.5" stroke-opacity="0.8"/>
<line x1="879.4" y1="466.0" x2="955.1" y2="507.4" stroke="#2e261a" stroke-width="0.5" stroke-opacity="0.8"/>
<line x1="884.3" y1="464.9" x2="964.9" y2="505.2" stroke="#2e261a" stroke-width="0.5" stroke-opacity="0.8"/>
<line x1="889.2" y1="463.8" x2="974.6" y2="503.0" stroke="#2e261a" stroke-width="0.5" stroke-opacity="0.8"/>
<line x1="894.0" y1="462.7" x2="984.3" y2="500.8" stroke="#2e261a" stroke-width="0.5" stroke-opacity="0.8"/>
<line x1="898.9" y1="461.6" x2="994.0" y2="498.6" stroke="#2e261a" stroke-width="0.5" stroke-opacity="0.8"/>
<line x1="903.8" y1="460.4" x2="1003.7" y2="496.4" stroke="#2e261a" stroke-width="0.5" stroke-opacity="0.8"/>
<line x1="908.7" y1="459.3" x2="1013.4" y2="494.2" stroke="#2e261a" stroke-width="0.5" stroke-opacity="0.8"/>
<line x1="913.6" y1="458.2" x2="1023.1" y2="492.0" stroke="#2e261a" stroke-width="0.5" stroke-opacity="0.8"/>
<line x1="918.5" y1="457.1" x2="1032.8" y2="489.8" stroke="#2e261a" stroke-width="0.5" stroke-opacity="0.8"/>
<line x1="923.4" y1="456.0" x2="1042.6" y2="487.6" stroke="#2e261a" stroke-width="0.5" stroke-opacity="0.8"/>
<line x1="928.2" y1="454.9" x2="1052.3" y2="485.4" stroke="#2e261a" stroke-width="0.5" stroke-opacity="0.8"/>
<line x1="933.1" y1="453.8" x2="1062.0" y2="483.2" stroke="#2e261a" stroke-width="0.5" stroke-opacity="0.8"/>
<line x1="885.0" y1="484.1" x2="982.1" y2="462.0" stroke="#8a5420" stroke-width="1.2"/>
<line x1="905.2" y1="498.8" x2="1026.2" y2="471.4" stroke="#8a5420" stroke-width="1.2"/>
<line x1="886.7" y1="464.3" x2="969.7" y2="504.1" stroke="#8a5420" stroke-width="1.2"/>
<line x1="910.2" y1="459.0" x2="1016.3" y2="493.5" stroke="#8a5420" stroke-width="1.2"/>
<line x1="864.8" y1="469.3" x2="926.0" y2="514.0" stroke="#6a3c10" stroke-width="5.8"/>
<line x1="864.8" y1="469.3" x2="926.0" y2="514.0" stroke="#f2a444" stroke-width="4.5"/>
<line x1="871.6" y1="472.0" x2="871.6" y2="476.5" stroke="#6a3c10" stroke-width="0.7"/>
<line x1="878.4" y1="477.0" x2="878.4" y2="481.5" stroke="#6a3c10" stroke-width="0.7"/>
<line x1="885.2" y1="481.9" x2="885.2" y2="486.4" stroke="#6a3c10" stroke-width="0.7"/>
<line x1="892.0" y1="486.9" x2="892.0" y2="491.4" stroke="#6a3c10" stroke-width="0.7"/>
<line x1="898.8" y1="491.9" x2="898.8" y2="496.4" stroke="#6a3c10" stroke-width="0.7"/>
<line x1="905.6" y1="496.9" x2="905.6" y2="501.4" stroke="#6a3c10" stroke-width="0.7"/>
<line x1="912.4" y1="501.8" x2="912.4" y2="506.3" stroke="#6a3c10" stroke-width="0.7"/>
<line x1="919.2" y1="506.8" x2="919.2" y2="511.3" stroke="#6a3c10" stroke-width="0.7"/>
<line x1="926.0" y1="514.0" x2="1071.7" y2="481.0" stroke="#6a3c10" stroke-width="7.3"/>
<line x1="926.0" y1="514.0" x2="1071.7" y2="481.0" stroke="#f2a444" stroke-width="6"/>
<line x1="935.1" y1="508.9" x2="935.1" y2="514.9" stroke="#6a3c10" stroke-width="0.7"/>
<line x1="944.2" y1="506.9" x2="944.2" y2="512.9" stroke="#6a3c10" stroke-width="0.7"/>
<line x1="953.3" y1="504.8" x2="953.3" y2="510.8" stroke="#6a3c10" stroke-width="0.7"/>
<line x1="962.4" y1="502.8" x2="962.4" y2="508.8" stroke="#6a3c10" stroke-width="0.7"/>
<line x1="971.5" y1="500.7" x2="971.5" y2="506.7" stroke="#6a3c10" stroke-width="0.7"/>
<line x1="980.6" y1="498.6" x2="980.6" y2="504.6" stroke="#6a3c10" stroke-width="0.7"/>
<line x1="989.7" y1="496.6" x2="989.7" y2="502.6" stroke="#6a3c10" stroke-width="0.7"/>
<line x1="998.9" y1="494.5" x2="998.9" y2="500.5" stroke="#6a3c10" stroke-width="0.7"/>
<line x1="1008.0" y1="492.4" x2="1008.0" y2="498.4" stroke="#6a3c10" stroke-width="0.7"/>
<line x1="1017.1" y1="490.4" x2="1017.1" y2="496.4" stroke="#6a3c10" stroke-width="0.7"/>
<line x1="1026.2" y1="488.3" x2="1026.2" y2="494.3" stroke="#6a3c10" stroke-width="0.7"/>
<line x1="1035.3" y1="486.2" x2="1035.3" y2="492.2" stroke="#6a3c10" stroke-width="0.7"/>
<line x1="1044.4" y1="484.2" x2="1044.4" y2="490.2" stroke="#6a3c10" stroke-width="0.7"/>
<line x1="1053.5" y1="482.1" x2="1053.5" y2="488.1" stroke="#6a3c10" stroke-width="0.7"/>
<line x1="1062.6" y1="480.1" x2="1062.6" y2="486.1" stroke="#6a3c10" stroke-width="0.7"/>
<line x1="864.4" y1="470.0" x2="869.0" y2="560.0" stroke="#6a3c10" stroke-width="6.3"/>
<line x1="864.4" y1="470.0" x2="869.0" y2="560.0" stroke="#f2a444" stroke-width="5"/>
<line x1="878.0" y1="480.0" x2="882.0" y2="548.0" stroke="#6a3c10" stroke-width="5.8"/>
<line x1="878.0" y1="480.0" x2="882.0" y2="548.0" stroke="#f2a444" stroke-width="4.5"/>
<line x1="893.0" y1="491.0" x2="896.0" y2="568.0" stroke="#6a3c10" stroke-width="6.3"/>
<line x1="893.0" y1="491.0" x2="896.0" y2="568.0" stroke="#f2a444" stroke-width="5"/>
<line x1="909.0" y1="503.0" x2="910.0" y2="590.0" stroke="#6a3c10" stroke-width="6.3"/>
<line x1="909.0" y1="503.0" x2="910.0" y2="590.0" stroke="#f2a444" stroke-width="5"/>
<line x1="925.9" y1="515.0" x2="918.0" y2="652.0" stroke="#6a3c10" stroke-width="10.3"/>
<line x1="925.9" y1="515.0" x2="918.0" y2="652.0" stroke="#f2a444" stroke-width="9"/>
<line x1="978.3" y1="505.0" x2="953.2" y2="632.0" stroke="#6a3c10" stroke-width="8.3"/>
<line x1="978.3" y1="505.0" x2="953.2" y2="632.0" stroke="#f2a444" stroke-width="7"/>
<line x1="1027.3" y1="494.3" x2="990.0" y2="610.0" stroke="#6a3c10" stroke-width="8.3"/>
<line x1="1027.3" y1="494.3" x2="990.0" y2="610.0" stroke="#f2a444" stroke-width="7"/>
<line x1="1070.0" y1="482.0" x2="1031.0" y2="575.0" stroke="#6a3c10" stroke-width="9.3"/>
<line x1="1070.0" y1="482.0" x2="1031.0" y2="575.0" stroke="#f2a444" stroke-width="8"/>
<line x1="926.0" y1="554.5" x2="1058.2" y2="515.0" stroke="#6a3c10" stroke-width="6.8"/>
<line x1="926.0" y1="554.5" x2="1058.2" y2="515.0" stroke="#f2a444" stroke-width="5.5"/>
<line x1="935.4" y1="548.9" x2="935.4" y2="554.4" stroke="#6a3c10" stroke-width="0.7"/>
<line x1="944.9" y1="546.1" x2="944.9" y2="551.6" stroke="#6a3c10" stroke-width="0.7"/>
<line x1="954.3" y1="543.3" x2="954.3" y2="548.8" stroke="#6a3c10" stroke-width="0.7"/>
<line x1="963.8" y1="540.5" x2="963.8" y2="546.0" stroke="#6a3c10" stroke-width="0.7"/>
<line x1="973.2" y1="537.6" x2="973.2" y2="543.1" stroke="#6a3c10" stroke-width="0.7"/>
<line x1="982.7" y1="534.8" x2="982.7" y2="540.3" stroke="#6a3c10" stroke-width="0.7"/>
<line x1="992.1" y1="532.0" x2="992.1" y2="537.5" stroke="#6a3c10" stroke-width="0.7"/>
<line x1="1001.5" y1="529.2" x2="1001.5" y2="534.7" stroke="#6a3c10" stroke-width="0.7"/>
<line x1="1011.0" y1="526.4" x2="1011.0" y2="531.9" stroke="#6a3c10" stroke-width="0.7"/>
<line x1="1020.4" y1="523.5" x2="1020.4" y2="529.0" stroke="#6a3c10" stroke-width="0.7"/>
<line x1="1029.9" y1="520.7" x2="1029.9" y2="526.2" stroke="#6a3c10" stroke-width="0.7"/>
<line x1="1039.3" y1="517.9" x2="1039.3" y2="523.4" stroke="#6a3c10" stroke-width="0.7"/>
<line x1="1048.8" y1="515.1" x2="1048.8" y2="520.6" stroke="#6a3c10" stroke-width="0.7"/>
<line x1="867.2" y1="495.8" x2="926.0" y2="554.5" stroke="#6a3c10" stroke-width="5.8"/>
<line x1="867.2" y1="495.8" x2="926.0" y2="554.5" stroke="#f2a444" stroke-width="4.5"/>
<line x1="874.6" y1="500.9" x2="874.6" y2="505.4" stroke="#6a3c10" stroke-width="0.7"/>
<line x1="881.9" y1="508.2" x2="881.9" y2="512.7" stroke="#6a3c10" stroke-width="0.7"/>
<line x1="889.2" y1="515.6" x2="889.2" y2="520.1" stroke="#6a3c10" stroke-width="0.7"/>
<line x1="896.6" y1="522.9" x2="896.6" y2="527.4" stroke="#6a3c10" stroke-width="0.7"/>
<line x1="904.0" y1="530.2" x2="904.0" y2="534.7" stroke="#6a3c10" stroke-width="0.7"/>
<line x1="911.3" y1="537.6" x2="911.3" y2="542.1" stroke="#6a3c10" stroke-width="0.7"/>
<line x1="918.6" y1="544.9" x2="918.6" y2="549.4" stroke="#6a3c10" stroke-width="0.7"/>
<line x1="923.2" y1="590.0" x2="1044.5" y2="539.5" stroke="#6a3c10" stroke-width="6.8"/>
<line x1="923.2" y1="590.0" x2="1044.5" y2="539.5" stroke="#f2a444" stroke-width="5.5"/>
<line x1="931.9" y1="583.6" x2="931.9" y2="589.1" stroke="#6a3c10" stroke-width="0.7"/>
<line x1="940.5" y1="580.0" x2="940.5" y2="585.5" stroke="#6a3c10" stroke-width="0.7"/>
<line x1="949.2" y1="576.4" x2="949.2" y2="581.9" stroke="#6a3c10" stroke-width="0.7"/>
<line x1="957.9" y1="572.8" x2="957.9" y2="578.3" stroke="#6a3c10" stroke-width="0.7"/>
<line x1="966.5" y1="569.2" x2="966.5" y2="574.7" stroke="#6a3c10" stroke-width="0.7"/>
<line x1="975.2" y1="565.6" x2="975.2" y2="571.1" stroke="#6a3c10" stroke-width="0.7"/>
<line x1="983.9" y1="562.0" x2="983.9" y2="567.5" stroke="#6a3c10" stroke-width="0.7"/>
<line x1="992.5" y1="558.4" x2="992.5" y2="563.9" stroke="#6a3c10" stroke-width="0.7"/>
<line x1="1001.2" y1="554.8" x2="1001.2" y2="560.3" stroke="#6a3c10" stroke-width="0.7"/>
<line x1="1009.8" y1="551.2" x2="1009.8" y2="556.7" stroke="#6a3c10" stroke-width="0.7"/>
<line x1="1018.5" y1="547.6" x2="1018.5" y2="553.1" stroke="#6a3c10" stroke-width="0.7"/>
<line x1="1027.2" y1="544.0" x2="1027.2" y2="549.5" stroke="#6a3c10" stroke-width="0.7"/>
<line x1="1035.8" y1="540.4" x2="1035.8" y2="545.9" stroke="#6a3c10" stroke-width="0.7"/>
<line x1="870.0" y1="524.5" x2="923.2" y2="590.0" stroke="#6a3c10" stroke-width="5.8"/>
<line x1="870.0" y1="524.5" x2="923.2" y2="590.0" stroke="#f2a444" stroke-width="4.5"/>
<line x1="876.6" y1="530.4" x2="876.6" y2="534.9" stroke="#6a3c10" stroke-width="0.7"/>
<line x1="883.3" y1="538.6" x2="883.3" y2="543.1" stroke="#6a3c10" stroke-width="0.7"/>
<line x1="890.0" y1="546.8" x2="890.0" y2="551.3" stroke="#6a3c10" stroke-width="0.7"/>
<line x1="896.6" y1="555.0" x2="896.6" y2="559.5" stroke="#6a3c10" stroke-width="0.7"/>
<line x1="903.2" y1="563.2" x2="903.2" y2="567.7" stroke="#6a3c10" stroke-width="0.7"/>
<line x1="909.9" y1="571.4" x2="909.9" y2="575.9" stroke="#6a3c10" stroke-width="0.7"/>
<line x1="916.6" y1="579.6" x2="916.6" y2="584.1" stroke="#6a3c10" stroke-width="0.7"/>
<line x1="864.8" y1="469.3" x2="926.0" y2="514.0" stroke="#6a3c10" stroke-width="6.8"/>
<line x1="864.8" y1="469.3" x2="926.0" y2="514.0" stroke="#f2a444" stroke-width="5.5"/>
<line x1="871.6" y1="471.5" x2="871.6" y2="477.0" stroke="#6a3c10" stroke-width="0.7"/>
<line x1="878.4" y1="476.5" x2="878.4" y2="482.0" stroke="#6a3c10" stroke-width="0.7"/>
<line x1="885.2" y1="481.4" x2="885.2" y2="486.9" stroke="#6a3c10" stroke-width="0.7"/>
<line x1="892.0" y1="486.4" x2="892.0" y2="491.9" stroke="#6a3c10" stroke-width="0.7"/>
<line x1="898.8" y1="491.4" x2="898.8" y2="496.9" stroke="#6a3c10" stroke-width="0.7"/>
<line x1="905.6" y1="496.4" x2="905.6" y2="501.9" stroke="#6a3c10" stroke-width="0.7"/>
<line x1="912.4" y1="501.3" x2="912.4" y2="506.8" stroke="#6a3c10" stroke-width="0.7"/>
<line x1="919.2" y1="506.3" x2="919.2" y2="511.8" stroke="#6a3c10" stroke-width="0.7"/>
<line x1="926.0" y1="514.0" x2="1071.7" y2="481.0" stroke="#6a3c10" stroke-width="8.3"/>
<line x1="926.0" y1="514.0" x2="1071.7" y2="481.0" stroke="#f2a444" stroke-width="7"/>
<line x1="935.1" y1="508.4" x2="935.1" y2="515.4" stroke="#6a3c10" stroke-width="0.7"/>
<line x1="944.2" y1="506.4" x2="944.2" y2="513.4" stroke="#6a3c10" stroke-width="0.7"/>
<line x1="953.3" y1="504.3" x2="953.3" y2="511.3" stroke="#6a3c10" stroke-width="0.7"/>
<line x1="962.4" y1="502.2" x2="962.4" y2="509.2" stroke="#6a3c10" stroke-width="0.7"/>
<line x1="971.5" y1="500.2" x2="971.5" y2="507.2" stroke="#6a3c10" stroke-width="0.7"/>
<line x1="980.6" y1="498.1" x2="980.6" y2="505.1" stroke="#6a3c10" stroke-width="0.7"/>
<line x1="989.7" y1="496.1" x2="989.7" y2="503.1" stroke="#6a3c10" stroke-width="0.7"/>
<line x1="998.9" y1="494.0" x2="998.9" y2="501.0" stroke="#6a3c10" stroke-width="0.7"/>
<line x1="1008.0" y1="491.9" x2="1008.0" y2="498.9" stroke="#6a3c10" stroke-width="0.7"/>
<line x1="1017.1" y1="489.9" x2="1017.1" y2="496.9" stroke="#6a3c10" stroke-width="0.7"/>
<line x1="1026.2" y1="487.8" x2="1026.2" y2="494.8" stroke="#6a3c10" stroke-width="0.7"/>
<line x1="1035.3" y1="485.8" x2="1035.3" y2="492.8" stroke="#6a3c10" stroke-width="0.7"/>
<line x1="1044.4" y1="483.7" x2="1044.4" y2="490.7" stroke="#6a3c10" stroke-width="0.7"/>
<line x1="1053.5" y1="481.6" x2="1053.5" y2="488.6" stroke="#6a3c10" stroke-width="0.7"/>
<line x1="1062.6" y1="479.6" x2="1062.6" y2="486.6" stroke="#6a3c10" stroke-width="0.7"/>
<line x1="871.0" y1="442.0" x2="875.0" y2="476.0" stroke="#6a3c10" stroke-width="6.3"/>
<line x1="871.0" y1="442.0" x2="875.0" y2="476.0" stroke="#f2a444" stroke-width="5"/>
<line x1="905.5" y1="446.0" x2="906.0" y2="474.0" stroke="#6a3c10" stroke-width="6.3"/>
<line x1="905.5" y1="446.0" x2="906.0" y2="474.0" stroke="#f2a444" stroke-width="5"/>
<line x1="928.4" y1="450.0" x2="928.0" y2="482.0" stroke="#6a3c10" stroke-width="7.3"/>
<line x1="928.4" y1="450.0" x2="928.0" y2="482.0" stroke="#f2a444" stroke-width="6"/>
<polygon points="871.0,442.0 906.0,437.0 956.0,447.5 892.0,452.0" fill="#a39676"/>
<line x1="878.0" y1="445.3" x2="922.7" y2="440.5" stroke="#2e261a" stroke-width="0.5" stroke-opacity="0.8"/>
<line x1="885.0" y1="448.7" x2="939.3" y2="444.0" stroke="#2e261a" stroke-width="0.5" stroke-opacity="0.8"/>
<line x1="875.4" y1="441.4" x2="900.0" y2="451.4" stroke="#2e261a" stroke-width="0.5" stroke-opacity="0.8"/>
<line x1="879.8" y1="440.8" x2="908.0" y2="450.9" stroke="#2e261a" stroke-width="0.5" stroke-opacity="0.8"/>
<line x1="884.1" y1="440.1" x2="916.0" y2="450.3" stroke="#2e261a" stroke-width="0.5" stroke-opacity="0.8"/>
<line x1="888.5" y1="439.5" x2="924.0" y2="449.8" stroke="#2e261a" stroke-width="0.5" stroke-opacity="0.8"/>
<line x1="892.9" y1="438.9" x2="932.0" y2="449.2" stroke="#2e261a" stroke-width="0.5" stroke-opacity="0.8"/>
<line x1="897.2" y1="438.2" x2="940.0" y2="448.6" stroke="#2e261a" stroke-width="0.5" stroke-opacity="0.8"/>
<line x1="901.6" y1="437.6" x2="948.0" y2="448.1" stroke="#2e261a" stroke-width="0.5" stroke-opacity="0.8"/>
<line x1="871.0" y1="442.0" x2="892.0" y2="452.0" stroke="#6a3c10" stroke-width="6.3"/>
<line x1="871.0" y1="442.0" x2="892.0" y2="452.0" stroke="#f2a444" stroke-width="5"/>
<line x1="876.2" y1="442.0" x2="876.2" y2="447.0" stroke="#6a3c10" stroke-width="0.7"/>
<line x1="881.5" y1="444.5" x2="881.5" y2="449.5" stroke="#6a3c10" stroke-width="0.7"/>
<line x1="886.8" y1="447.0" x2="886.8" y2="452.0" stroke="#6a3c10" stroke-width="0.7"/>
<line x1="892.0" y1="452.0" x2="956.0" y2="447.5" stroke="#6a3c10" stroke-width="7.8"/>
<line x1="892.0" y1="452.0" x2="956.0" y2="447.5" stroke="#f2a444" stroke-width="6.5"/>
<line x1="900.0" y1="448.2" x2="900.0" y2="454.7" stroke="#6a3c10" stroke-width="0.7"/>
<line x1="908.0" y1="447.6" x2="908.0" y2="454.1" stroke="#6a3c10" stroke-width="0.7"/>
<line x1="916.0" y1="447.1" x2="916.0" y2="453.6" stroke="#6a3c10" stroke-width="0.7"/>
<line x1="924.0" y1="446.5" x2="924.0" y2="453.0" stroke="#6a3c10" stroke-width="0.7"/>
<line x1="932.0" y1="445.9" x2="932.0" y2="452.4" stroke="#6a3c10" stroke-width="0.7"/>
<line x1="940.0" y1="445.4" x2="940.0" y2="451.9" stroke="#6a3c10" stroke-width="0.7"/>
<line x1="948.0" y1="444.8" x2="948.0" y2="451.3" stroke="#6a3c10" stroke-width="0.7"/>
<line x1="871.0" y1="442.0" x2="906.0" y2="437.0" stroke="#6a3c10" stroke-width="3.8"/>
<line x1="871.0" y1="442.0" x2="906.0" y2="437.0" stroke="#f2a444" stroke-width="2.5"/>
<line x1="906.0" y1="437.0" x2="956.0" y2="447.5" stroke="#6a3c10" stroke-width="3.8"/>
<line x1="906.0" y1="437.0" x2="956.0" y2="447.5" stroke="#f2a444" stroke-width="2.5"/>
<line x1="892.0" y1="452.0" x2="893.0" y2="494.0" stroke="#6a3c10" stroke-width="7.3"/>
<line x1="892.0" y1="452.0" x2="893.0" y2="494.0" stroke="#f2a444" stroke-width="6"/>
<line x1="952.3" y1="450.0" x2="947.7" y2="489.0" stroke="#6a3c10" stroke-width="7.3"/>
<line x1="952.3" y1="450.0" x2="947.7" y2="489.0" stroke="#f2a444" stroke-width="6"/>
<circle cx="864.75" cy="469.3" r="1" fill="#30a030"/>
<circle cx="938" cy="452.7" r="1" fill="#30a030"/>
<circle cx="1071.7" cy="481" r="1" fill="#30a030"/>
<circle cx="926" cy="514" r="1" fill="#30a030"/>
<circle cx="871" cy="442" r="1" fill="#30a030"/>
<circle cx="956" cy="447.5" r="1" fill="#30a030"/>
<circle cx="906" cy="437" r="1" fill="#30a030"/>
<circle cx="960" cy="466" r="1" fill="#30a030"/>
<circle cx="1000" cy="474" r="1" fill="#30a030"/>
<circle cx="1040" cy="484" r="1" fill="#30a030"/>
<circle cx="905" cy="460" r="1" fill="#30a030"/>
</g></svg>
<rect x="372" y="398" width="487" height="208" fill="#f0f0f0"/>
<rect x="372" y="398" width="487" height="19" fill="#ffffff"/>
<rect x="372.5" y="398.5" width="486" height="207" fill="none" stroke="#8c8c8c" stroke-width="0.8"/>
<text x="377" y="410.5" font-size="8.8" fill="#1a1a1a" text-anchor="start" font-weight="normal" textLength="82" lengthAdjust="spacingAndGlyphs" stroke="#1a1a1a" stroke-width="0.06">Görüntü Konfigürasyonu</text>
<rect x="373" y="412.6" width="88" height="2" fill="#e00000"/>
<line x1="846" y1="403.5" x2="853" y2="410.5" stroke="#222" stroke-width="0.9"/>
<line x1="853" y1="403.5" x2="846" y2="410.5" stroke="#222" stroke-width="0.9"/>
<rect x="379.8" y="427.8" width="421.3" height="171.3" fill="none" stroke="#dcdcdc" stroke-width="1"/>
<rect x="382" y="423" width="59" height="8" fill="#f0f0f0"/>
<text x="384" y="430.5" font-size="8" fill="#1a1a1a" text-anchor="start" font-weight="normal" textLength="55" lengthAdjust="spacingAndGlyphs" stroke="#1a1a1a" stroke-width="0.06">Konfigürasyonlar :</text>
<rect x="805.5" y="429.5" width="45.5" height="12.5" fill="#e1e1e1" stroke="#0078d7" stroke-width="1.6"/>
<text x="828.2" y="438.8" font-size="8.2" fill="#111" text-anchor="middle" font-weight="normal" textLength="24" lengthAdjust="spacingAndGlyphs" stroke="#111" stroke-width="0.06">Tamam</text>
<rect x="805.5" y="445.5" width="45.5" height="12.5" fill="#e1e1e1" stroke="#adadad" stroke-width="1"/>
<text x="828.2" y="454.8" font-size="8.2" fill="#111" text-anchor="middle" font-weight="normal" textLength="15" lengthAdjust="spacingAndGlyphs" stroke="#111" stroke-width="0.06">İptal</text>
<circle cx="415.0" cy="442.0" r="3.7" fill="#fff" stroke="#333" stroke-width="0.9"/>
<rect x="388.4" y="449.7" width="59.2" height="43.7" fill="none" stroke="#111" stroke-width="1.7"/>
<line x1="407" y1="449.3" x2="407" y2="493.8" stroke="#111" stroke-width="1.6"/>
<line x1="428" y1="449.3" x2="428" y2="493.8" stroke="#111" stroke-width="1.6"/>
<line x1="388" y1="463.8" x2="448" y2="463.8" stroke="#111" stroke-width="1.6"/>
<line x1="388" y1="479" x2="448" y2="479" stroke="#111" stroke-width="1.6"/>
<circle cx="499.0" cy="442.0" r="3.7" fill="#fff" stroke="#333" stroke-width="0.9"/>
<circle cx="499.0" cy="442.0" r="2" fill="#222"/>
<rect x="472.4" y="449.7" width="59.2" height="43.7" fill="none" stroke="#111" stroke-width="1.7"/>
<line x1="501.8" y1="449.3" x2="501.8" y2="493.8" stroke="#111" stroke-width="1.6"/>
<line x1="472" y1="471.5" x2="532" y2="471.5" stroke="#111" stroke-width="1.6"/>
<circle cx="583.0" cy="442.0" r="3.7" fill="#fff" stroke="#333" stroke-width="0.9"/>
<rect x="556.4" y="449.7" width="59.2" height="43.7" fill="none" stroke="#111" stroke-width="1.7"/>
<line x1="585.8" y1="449.3" x2="585.8" y2="477.3" stroke="#111" stroke-width="1.6"/>
<line x1="556" y1="477.3" x2="616" y2="477.3" stroke="#111" stroke-width="1.6"/>
<circle cx="669.0" cy="442.0" r="3.7" fill="#fff" stroke="#333" stroke-width="0.9"/>
<rect x="640.4" y="449.7" width="59.2" height="43.7" fill="none" stroke="#111" stroke-width="1.7"/>
<line x1="669.5" y1="449.3" x2="669.5" y2="493.8" stroke="#111" stroke-width="1.6"/>
<circle cx="753.0" cy="442.0" r="3.7" fill="#fff" stroke="#333" stroke-width="0.9"/>
<rect x="724.4" y="449.7" width="59.2" height="43.7" fill="none" stroke="#111" stroke-width="1.7"/>
<line x1="724" y1="470.5" x2="784" y2="470.5" stroke="#111" stroke-width="1.6"/>
<circle cx="415.0" cy="534.7" r="3.7" fill="#fff" stroke="#333" stroke-width="0.9"/>
<rect x="388.4" y="542.4" width="59.2" height="43.7" fill="none" stroke="#111" stroke-width="1.7"/>
<line x1="418" y1="542" x2="418" y2="586.5" stroke="#111" stroke-width="1.6"/>
<line x1="418" y1="563.8" x2="448" y2="563.8" stroke="#111" stroke-width="1.6"/>
<circle cx="499.0" cy="534.7" r="3.7" fill="#fff" stroke="#333" stroke-width="0.9"/>
<rect x="472.4" y="542.4" width="59.2" height="43.7" fill="none" stroke="#111" stroke-width="1.7"/>
<line x1="509.5" y1="542" x2="509.5" y2="586.5" stroke="#111" stroke-width="1.6"/>
<line x1="509.5" y1="556.3" x2="532" y2="556.3" stroke="#111" stroke-width="1.6"/>
<line x1="509.5" y1="571.8" x2="532" y2="571.8" stroke="#111" stroke-width="1.6"/>
<circle cx="583.0" cy="534.7" r="3.7" fill="#fff" stroke="#333" stroke-width="0.9"/>
<rect x="556.4" y="542.4" width="59.2" height="43.7" fill="none" stroke="#111" stroke-width="1.7"/>
<line x1="601.3" y1="542" x2="601.3" y2="586.5" stroke="#111" stroke-width="1.6"/>
<line x1="601.3" y1="556.8" x2="616" y2="556.8" stroke="#111" stroke-width="1.6"/>
<line x1="556" y1="571.8" x2="616" y2="571.8" stroke="#111" stroke-width="1.6"/>
<line x1="570.5" y1="571.8" x2="570.5" y2="586.5" stroke="#111" stroke-width="1.6"/>
<line x1="585.8" y1="571.8" x2="585.8" y2="586.5" stroke="#111" stroke-width="1.6"/>
<circle cx="669.0" cy="534.7" r="3.7" fill="#fff" stroke="#333" stroke-width="0.9"/>
<rect x="640.4" y="542.4" width="59.2" height="43.7" fill="none" stroke="#111" stroke-width="1.7"/>
<line x1="671.3" y1="542" x2="671.3" y2="586.5" stroke="#111" stroke-width="1.6"/>
<line x1="640" y1="564" x2="671.3" y2="564" stroke="#111" stroke-width="1.6"/>
<circle cx="753.0" cy="534.7" r="3.7" fill="#fff" stroke="#333" stroke-width="0.9"/>
<rect x="724.4" y="542.4" width="59.2" height="43.7" fill="none" stroke="#111" stroke-width="1.7"/>
<line x1="724" y1="568" x2="784" y2="568" stroke="#111" stroke-width="1.6"/>
<line x1="754.3" y1="568" x2="754.3" y2="586.5" stroke="#111" stroke-width="1.6"/>
<polygon points="12.8,42 27.8,42 27.8,57 12.8,57" fill="#52889c" fill-opacity="1" stroke="#4a6f7e" stroke-width="0.9" stroke-linejoin="round"/>
<polygon points="12.8,42 17.8,37 32.8,37 27.8,42" fill="#6f9fb0" fill-opacity="1" stroke="#4a6f7e" stroke-width="0.9" stroke-linejoin="round"/>
<polygon points="27.8,42 32.8,37 32.8,52 27.8,57" fill="#3f6f82" fill-opacity="1" stroke="#4a6f7e" stroke-width="0.9" stroke-linejoin="round"/>
<polygon points="48,37 63,37 63,52 48,52" fill="#e6edf0" fill-opacity="0.9" stroke="#4a6f7e" stroke-width="0.9" stroke-linejoin="round"/>
<polygon points="48,37 63,37 63,52 48,52" fill="none" fill-opacity="1" stroke="#4a6f7e" stroke-width="0.9" stroke-linejoin="round"/>
<line x1="43" y1="42" x2="48" y2="37" stroke="#4a6f7e" stroke-width="0.9"/>
<line x1="58" y1="42" x2="63" y2="37" stroke="#4a6f7e" stroke-width="0.9"/>
<line x1="58" y1="57" x2="63" y2="52" stroke="#4a6f7e" stroke-width="0.9"/>
<line x1="43" y1="57" x2="48" y2="52" stroke="#4a6f7e" stroke-width="0.9"/>
<polygon points="43,42 48,37 63,37 58,42" fill="#52889c" fill-opacity="1" stroke="#4a6f7e" stroke-width="0.9" stroke-linejoin="round"/>
<polygon points="43,42 58,42 58,57 43,57" fill="#e6edf0" fill-opacity="0.35" stroke="#4a6f7e" stroke-width="0.9" stroke-linejoin="round"/>
<polygon points="74.7,37 89.7,37 89.7,52 74.7,52" fill="#e6edf0" fill-opacity="0.9" stroke="#4a6f7e" stroke-width="0.9" stroke-linejoin="round"/>
<polygon points="69.7,57 74.7,52 89.7,52 84.7,57" fill="#52889c" fill-opacity="1" stroke="#4a6f7e" stroke-width="0.9" stroke-linejoin="round"/>
<polygon points="74.7,37 89.7,37 89.7,52 74.7,52" fill="none" fill-opacity="1" stroke="#4a6f7e" stroke-width="0.9" stroke-linejoin="round"/>
<line x1="69.7" y1="42" x2="74.7" y2="37" stroke="#4a6f7e" stroke-width="0.9"/>
<line x1="84.7" y1="42" x2="89.7" y2="37" stroke="#4a6f7e" stroke-width="0.9"/>
<line x1="84.7" y1="57" x2="89.7" y2="52" stroke="#4a6f7e" stroke-width="0.9"/>
<line x1="69.7" y1="57" x2="74.7" y2="52" stroke="#4a6f7e" stroke-width="0.9"/>
<polygon points="69.7,42 84.7,42 84.7,57 69.7,57" fill="#e6edf0" fill-opacity="0.35" stroke="#4a6f7e" stroke-width="0.9" stroke-linejoin="round"/>
<polygon points="101,37 116,37 116,52 101,52" fill="#e6edf0" fill-opacity="0.9" stroke="#4a6f7e" stroke-width="0.9" stroke-linejoin="round"/>
<polygon points="96,42 101,37 101,52 96,57" fill="#52889c" fill-opacity="1" stroke="#4a6f7e" stroke-width="0.9" stroke-linejoin="round"/>
<polygon points="101,37 116,37 116,52 101,52" fill="none" fill-opacity="1" stroke="#4a6f7e" stroke-width="0.9" stroke-linejoin="round"/>
<line x1="96" y1="42" x2="101" y2="37" stroke="#4a6f7e" stroke-width="0.9"/>
<line x1="111" y1="42" x2="116" y2="37" stroke="#4a6f7e" stroke-width="0.9"/>
<line x1="111" y1="57" x2="116" y2="52" stroke="#4a6f7e" stroke-width="0.9"/>
<line x1="96" y1="57" x2="101" y2="52" stroke="#4a6f7e" stroke-width="0.9"/>
<polygon points="96,42 111,42 111,57 96,57" fill="#e6edf0" fill-opacity="0.35" stroke="#4a6f7e" stroke-width="0.9" stroke-linejoin="round"/>
<polygon points="127.80000000000001,37 142.8,37 142.8,52 127.80000000000001,52" fill="#e6edf0" fill-opacity="0.9" stroke="#4a6f7e" stroke-width="0.9" stroke-linejoin="round"/>
<polygon points="127.80000000000001,37 142.8,37 142.8,52 127.80000000000001,52" fill="none" fill-opacity="1" stroke="#4a6f7e" stroke-width="0.9" stroke-linejoin="round"/>
<line x1="122.80000000000001" y1="42" x2="127.80000000000001" y2="37" stroke="#4a6f7e" stroke-width="0.9"/>
<line x1="137.8" y1="42" x2="142.8" y2="37" stroke="#4a6f7e" stroke-width="0.9"/>
<line x1="137.8" y1="57" x2="142.8" y2="52" stroke="#4a6f7e" stroke-width="0.9"/>
<line x1="122.80000000000001" y1="57" x2="127.80000000000001" y2="52" stroke="#4a6f7e" stroke-width="0.9"/>
<polygon points="137.8,42 142.8,37 142.8,52 137.8,57" fill="#52889c" fill-opacity="1" stroke="#4a6f7e" stroke-width="0.9" stroke-linejoin="round"/>
<polygon points="122.80000000000001,42 137.8,42 137.8,57 122.80000000000001,57" fill="#e6edf0" fill-opacity="0.35" stroke="#4a6f7e" stroke-width="0.9" stroke-linejoin="round"/>
<polygon points="154,37 169,37 169,52 154,52" fill="#e6edf0" fill-opacity="0.9" stroke="#4a6f7e" stroke-width="0.9" stroke-linejoin="round"/>
<polygon points="154,37 169,37 169,52 154,52" fill="none" fill-opacity="1" stroke="#4a6f7e" stroke-width="0.9" stroke-linejoin="round"/>
<line x1="149" y1="42" x2="154" y2="37" stroke="#4a6f7e" stroke-width="0.9"/>
<line x1="164" y1="42" x2="169" y2="37" stroke="#4a6f7e" stroke-width="0.9"/>
<line x1="164" y1="57" x2="169" y2="52" stroke="#4a6f7e" stroke-width="0.9"/>
<line x1="149" y1="57" x2="154" y2="52" stroke="#4a6f7e" stroke-width="0.9"/>
<polygon points="149,42 164,42 164,57 149,57" fill="#52889c" fill-opacity="1" stroke="#4a6f7e" stroke-width="0.9" stroke-linejoin="round"/>
<polygon points="180.7,37 195.7,37 195.7,52 180.7,52" fill="#e6edf0" fill-opacity="0.9" stroke="#4a6f7e" stroke-width="0.9" stroke-linejoin="round"/>
<polygon points="180.7,37 195.7,37 195.7,52 180.7,52" fill="#52889c" fill-opacity="1" stroke="#4a6f7e" stroke-width="0.9" stroke-linejoin="round"/>
<line x1="175.7" y1="42" x2="180.7" y2="37" stroke="#4a6f7e" stroke-width="0.9"/>
<line x1="190.7" y1="42" x2="195.7" y2="37" stroke="#4a6f7e" stroke-width="0.9"/>
<line x1="190.7" y1="57" x2="195.7" y2="52" stroke="#4a6f7e" stroke-width="0.9"/>
<line x1="175.7" y1="57" x2="180.7" y2="52" stroke="#4a6f7e" stroke-width="0.9"/>
<polygon points="175.7,42 190.7,42 190.7,57 175.7,57" fill="#e6edf0" fill-opacity="0.35" stroke="#4a6f7e" stroke-width="0.9" stroke-linejoin="round"/>
<polygon points="222,37.5 228,42 228,52.5 222,57 216,52.5 216,42" fill="#52889c" stroke="#3f6f82" stroke-width="0.9"/>
<polyline points="216,42 222,46.5 228,42" fill="none" stroke="#3f6f82" stroke-width="0.9"/><line x1="222" y1="46.5" x2="222" y2="57" stroke="#3f6f82" stroke-width="0.9"/>
<path d="M269.4,39 L269.4,54 L286,54" fill="none" stroke="#2a3a48" stroke-width="1"/>
<path d="M267.5,41 L269.4,37.5 L271.3,41 Z M284,52 L287.5,54 L284,56 Z" fill="#1e3a52"/>
<rect x="270.5" y="42" width="13" height="11" fill="none" stroke="#7f8a94" stroke-width="0.8"/>
<circle cx="278" cy="48.3" r="5.6" fill="none" stroke="#c84848" stroke-width="1"/>
<line x1="272.4" y1="48.3" x2="283.6" y2="48.3" stroke="#c84848" stroke-width="0.8"/>
<line x1="278" y1="42.7" x2="278" y2="53.9" stroke="#c84848" stroke-width="0.8"/>
<line x1="325" y1="39" x2="325" y2="57" stroke="#222" stroke-width="1.1" stroke-dasharray="1.5,1"/>
<path d="M317,46.5 L321.5,43.8 L321.5,49.2 Z" fill="#2746b8"/>
<line x1="321" y1="46.5" x2="325" y2="46.5" stroke="#2746b8" stroke-width="1.2"/>
<path d="M327.5,42.5 L336,46.5 L327.5,51" fill="none" stroke="#e05050" stroke-width="0.9"/>
<path d="M366,40 L366,55 M372,43 L372,55 M366,47 L372,47 M366,51 L372,51 M366,40 L371,38 L377,40 M376,41 L376,55 M386,41 L386,55 M376,41 L386,41 M376,48 L386,48" fill="none" stroke="#7a8fd0" stroke-width="1.2"/>
<path d="M420.5,42 L425.5,37 L437.5,37 L432.5,42 Z M420.5,42 L420.5,57 M432.5,42 L432.5,57 M437.5,37 L437.5,52 M425.5,37 L425.5,51 M420.5,48 L432.5,48 L437.5,43" fill="none" stroke="#555" stroke-width="1.6"/>
<path d="M462,42 L467,37 L479,37 L474,42 Z M462,42 L462,57 M474,42 L474,57 M479,37 L479,52 M467,37 L467,51 M462,48 L474,48 L479,43" fill="none" stroke="#aaa" stroke-width="0.9"/>
<path d="M494,42.5 Q494,41 495.5,41 L499,41 L501,38.5 L507,38.5 L509,41 L513,41 Q514.5,41 514.5,42.5 L514.5,55.5 Q514.5,57 513,57 L495.5,57 Q494,57 494,55.5 Z" fill="#5a88a8" stroke="#4a7090" stroke-width="0.6"/>
<circle cx="504.3" cy="48.8" r="4.4" fill="#fff"/>
<path d="M523,43 L528,38 L538,38 L533,43 Z M523,43 L523,57 M533,43 L533,57 M538,38 L538,52 M528,38 L528,51 M523,49 L533,49 L538,44" fill="none" stroke="#5c78d8" stroke-width="0.9"/>
<circle cx="523" cy="57" r="0.9" fill="#62c044"/>
<circle cx="528" cy="55" r="0.9" fill="#62c044"/>
<circle cx="538" cy="57" r="0.9" fill="#62c044"/>
<rect x="555.0" y="39.7" width="19" height="15" fill="#ffffff" stroke="#8a8a8a" stroke-width="1.3"/>
<rect x="555.7" y="40.400000000000006" width="17.6" height="2" fill="#e4e4e4"/>
<rect x="571.5" y="40.2" width="1.8" height="1.8" fill="#f05050"/>
<path d="M563,51 L567.5,51 M566.5,48.5 L570.5,51 L566.5,53.5 Z" fill="#1d3b50" stroke="#1d3b50" stroke-width="1"/>
<rect x="583.5" y="39.7" width="19" height="15" fill="#ffffff" stroke="#8a8a8a" stroke-width="1.3"/>
<rect x="584.2" y="40.400000000000006" width="17.6" height="2" fill="#e4e4e4"/>
<rect x="600" y="40.2" width="1.8" height="1.8" fill="#f05050"/>
<path d="M596,51 L591.5,51 M592.5,48.5 L588.5,51 L592.5,53.5 Z" fill="#1d3b50" stroke="#1d3b50" stroke-width="1"/>
<rect x="616.5" y="39.7" width="19" height="15" fill="#ffffff" stroke="#8a8a8a" stroke-width="1.3"/>
<rect x="617.2" y="40.400000000000006" width="17.6" height="2" fill="#e4e4e4"/>
<rect x="633" y="40.2" width="1.8" height="1.8" fill="#f05050"/>
<path d="M619,52 L619,46 L625,43 L625,52 M619,47.5 L625,47.5 M628,43 L628,54 M628,47 L633,47 M628,51 L633,51" fill="none" stroke="#7f93b8" stroke-width="1"/>
<rect x="642.5" y="39.7" width="19" height="15" fill="#ffffff" stroke="#8a8a8a" stroke-width="1.3"/>
<rect x="643.2" y="40.400000000000006" width="17.6" height="2" fill="#e4e4e4"/>
<rect x="659" y="40.2" width="1.8" height="1.8" fill="#f05050"/>
<path d="M645,44 L659,44 L655,48 L649,48 Z M646,49 L651,49 L651,53 L646,53 Z M653,49 L658,49 L658,53 L653,53 Z" fill="none" stroke="#6a7a8a" stroke-width="0.9"/>
<rect x="674.5" y="39.7" width="19" height="15" fill="#ffffff" stroke="#8a8a8a" stroke-width="1.3"/>
<rect x="675.2" y="40.400000000000006" width="17.6" height="2" fill="#e4e4e4"/>
<rect x="691" y="40.2" width="1.8" height="1.8" fill="#f05050"/>
<path d="M677,45 L680,45 L680,47 L677,47 Z M677,48.5 L680,48.5 L680,50.5 L677,50.5 Z M677,52 L680,52 L680,54 L677,54 Z M682,46 L691,46 M682,49.5 L691,49.5 M682,53 L691,53" fill="none" stroke="#6a7a8a" stroke-width="0.9"/>
<rect x="707" y="39" width="19" height="16.5" fill="none" stroke="#8a9aaa" stroke-width="0.9" stroke-dasharray="1.2,1"/>
<rect x="707" y="46" width="9.5" height="9.5" fill="#fff" stroke="#6a8090" stroke-width="1"/>
<path d="M717.5,45 L724.5,39.5 M720,39.5 L724.5,39.5 L724.5,44" fill="none" stroke="#6a8aa0" stroke-width="1"/>
<rect x="748.0" y="39.7" width="19" height="15" fill="#ffffff" stroke="#8a8a8a" stroke-width="1.3"/>
<rect x="748.7" y="40.400000000000006" width="17.6" height="2" fill="#e4e4e4"/>
<rect x="764.5" y="40.2" width="1.8" height="1.8" fill="#f05050"/>
<line x1="756" y1="43" x2="756" y2="54" stroke="#506070" stroke-width="0.9" stroke-dasharray="1,1"/>
<line x1="756" y1="47" x2="766" y2="47" stroke="#506070" stroke-width="0.9" stroke-dasharray="1,1"/>
<rect x="804.5" y="37.5" width="13" height="19" fill="#fff" stroke="#7a7a7a" stroke-width="1.2"/>
<rect x="815" y="38" width="1.8" height="1.8" fill="#f05050"/>
<line x1="808.5" y1="41" x2="808.5" y2="55" stroke="#333" stroke-width="0.8"/>
<line x1="808.5" y1="43.5" x2="813" y2="43.5" stroke="#4466aa" stroke-width="0.8"/>
<line x1="808.5" y1="47.5" x2="813" y2="47.5" stroke="#4466aa" stroke-width="0.8"/>
<line x1="808.5" y1="51.5" x2="813" y2="51.5" stroke="#4466aa" stroke-width="0.8"/>
<line x1="808.5" y1="55" x2="813" y2="55" stroke="#4466aa" stroke-width="0.8"/>
<rect x="851.0" y="39.7" width="20" height="15" fill="#ffffff" stroke="#8a8a8a" stroke-width="1.3"/>
<rect x="851.7" y="40.400000000000006" width="18.6" height="2" fill="#e4e4e4"/>
<rect x="868.5" y="40.2" width="1.8" height="1.8" fill="#f05050"/>
<rect x="856" y="45" width="10" height="2.5" fill="#dde" stroke="#6a7a8a" stroke-width="0.6"/>
<rect x="856" y="50" width="10" height="2.5" fill="#dde" stroke="#6a7a8a" stroke-width="0.6"/>
<text x="853" y="48" font-size="3.5" fill="#333" text-anchor="start" font-weight="normal" stroke="#333" stroke-width="0.06">x</text>
<text x="853" y="53" font-size="3.5" fill="#333" text-anchor="start" font-weight="normal" stroke="#333" stroke-width="0.06">y</text>
<rect x="900.5" y="37.5" width="11.5" height="19.5" fill="#fff" stroke="#7a7a7a" stroke-width="1.2"/>
<path d="M904,40 L907,41.5 L904,43 Z" fill="#333"/><circle cx="906" cy="47" r="2" fill="none" stroke="#333" stroke-width="0.9"/><path d="M903.5,51 L908.5,51 M906,51 L906,55" stroke="#333" stroke-width="1.2"/>
<path d="M911,48 L918,53 L915,53.5 L917,57 L915.5,57.5 L913.5,54.5 L911.5,56 Z" fill="#1d3650"/>
<circle cx="945.5" cy="47.5" r="4.3" fill="none" stroke="#555" stroke-width="1"/>
<line x1="948.5" y1="50.5" x2="951.8" y2="54.8" stroke="#555" stroke-width="1.2"/>
<line x1="951" y1="40.5" x2="956" y2="40.5" stroke="#555" stroke-width="0.9"/>
<line x1="953.5" y1="38" x2="953.5" y2="43" stroke="#555" stroke-width="0.9"/>
<line x1="951" y1="45" x2="956" y2="45" stroke="#555" stroke-width="0.9"/>
<rect x="968" y="44" width="6" height="6" fill="#fff" stroke="#555" stroke-width="0.9"/>
<circle cx="976.5" cy="49" r="4.3" fill="none" stroke="#555" stroke-width="1"/>
<line x1="979.5" y1="52" x2="984" y2="56" stroke="#555" stroke-width="1.2"/>
<circle cx="993" cy="40.5" r="3.3" fill="none" stroke="#333" stroke-width="1"/>
<line x1="995.3" y1="42.8" x2="998" y2="45.5" stroke="#333" stroke-width="1.2"/>
<rect x="991" y="39" width="4" height="3" fill="none" stroke="#333" stroke-width="0.7"/>
<rect x="989.5" y="49.5" width="9.5" height="9.5" fill="none" stroke="#6a7f95" stroke-width="1" rx=" stroke-dasharray="1.5,1""/>
<circle cx="994" cy="54" r="2.3" fill="none" stroke="#333" stroke-width="0.9"/>
<path d="M990,70 L990,64 L994,64 M996,62 L999,65 L996,66" fill="none" stroke="#333" stroke-width="1"/>
<line x1="1033" y1="42" x2="1033" y2="55" stroke="#e01010" stroke-width="1"/>
<path d="M1030,52 L1036,52 L1033,57 Z" fill="#e01010"/>
<line x1="1030" y1="57.3" x2="1037" y2="57.3" stroke="#e01010" stroke-width="0.8"/>
<line x1="1040" y1="42" x2="1040" y2="55" stroke="#e01010" stroke-width="1"/>
<path d="M1037,46 L1043,46 L1040,41 Z" fill="#e01010"/>
<line x1="1036" y1="40.2" x2="1045" y2="40.2" stroke="#e01010" stroke-width="0.9"/>
<line x1="1091" y1="46.5" x2="1112" y2="46.5" stroke="#b0a090" stroke-width="1"/>
<line x1="1101" y1="37" x2="1101" y2="57" stroke="#b0a090" stroke-width="1"/>
<circle cx="1100.8" cy="46.5" r="4.6" fill="#1c7fd8" stroke="#0d5aa8" stroke-width="0.7"/>
<circle cx="1099.5" cy="45" r="1.6" fill="#8cc8ff" fill-opacity="0.7"/>
<circle cx="14.8" cy="15.2" r="11.8" fill="#c8c8c8" stroke="#a0a0a0" stroke-width="0.6"/>
<circle cx="14.8" cy="15.2" r="10.8" fill="url(#gLogo)"/>
<text x="16.8" y="17.8" font-size="7" fill="#e31e24" text-anchor="middle" font-weight="bold" textLength="13" lengthAdjust="spacingAndGlyphs">CAD</text>
<text x="4.3" y="17.3" font-size="4.2" fill="#555" text-anchor="start" font-weight="normal" textLength="5.5" lengthAdjust="spacingAndGlyphs" stroke="#555" stroke-width="0.06">ide</text>
<path d="M34.1,5.5 L39.5,5.5 L42,8 L42,14 L34.1,14 Z" fill="#fff" stroke="#222" stroke-width="0.9"/>
<path d="M47.7,7 L50.7,7 L51.7,8 L55.9,8 L55.9,14 L47.7,14 Z" fill="#b9d3e4" stroke="#4a7a9a" stroke-width="0.8"/>
<path d="M48.7,14 L50.7,10 L56.9,10 L54.9,14 Z" fill="#8cb8d4"/>
<rect x="61.8" y="5.5" width="9.200000000000003" height="8.5" fill="#7ab0c8" stroke="#4a7a90" stroke-width="0.8"/>
<rect x="63.8" y="5.5" width="5.200000000000003" height="3.5" fill="#eaf4f8"/>
<rect x="63.8" y="10.5" width="5.200000000000003" height="3.5" fill="#d8e8f0"/>
<rect x="77.3" y="4" width="7.700000000000003" height="8" fill="#9cc4d6" stroke="#5a8aa0" stroke-width="0.7"/>
<rect x="75.3" y="6.5" width="7.700000000000003" height="8" fill="#7ab0c8" stroke="#4a7a90" stroke-width="0.8"/>
<rect x="77.3" y="7.5" width="3.700000000000003" height="3" fill="#eaf4f8"/>
<path d="M91,7 Q94.0,4.5 98,9 Q97,12.5 94.0,12" fill="none" stroke="#6a6ad0" stroke-width="1.1"/><path d="M90,6 L93.5,5.5 L92,9 Z" fill="#6a6ad0"/>
<path d="M110.6,7 Q107.55,4.5 103.5,9 Q104.5,12.5 107.55,12" fill="none" stroke="#8a8ad8" stroke-width="1.1"/><path d="M111.6,6 L108.1,5.5 L109.6,9 Z" fill="#8a8ad8"/>
<rect x="116" y="6" width="10.799999999999997" height="7" fill="#dfe4ea" stroke="#7a8a9a" stroke-width="0.9"/>
<path d="M119,8 Q121.4,6.5 124.8,9.5 Q123.8,12 121.4,11.5" fill="none" stroke="#6a6ad0" stroke-width="0.9"/>
<line x1="130.2" y1="4" x2="130.2" y2="15" stroke="#c0c6cf" stroke-width="0.8"/>
<path d="M134,5 L137,5 L137,14 M137,8 L142,12 L140,13" fill="none" stroke="#222" stroke-width="1"/><circle cx="140" cy="12" r="1.6" fill="#222"/>
<path d="M151,5 L151,13 L147,13 L155,13 M149,10 L153,10" fill="none" stroke="#222" stroke-width="1.1"/>
<path d="M161,8 L170,8 M161,11 L170,11 M167,6 L170,8 L167,10 M164,9 L161,11 L164,13" fill="none" stroke="#222" stroke-width="1"/>
<path d="M174.5,5 L174.5,13.5 L182,13.5 M176.5,10 L176.5,12" fill="none" stroke="#222" stroke-width="1.2"/><path d="M178,12 L181,12 L181,9 Z" fill="#2a9ad0"/>
<line x1="188" y1="4" x2="188" y2="15" stroke="#c0c6cf" stroke-width="0.8"/>
<path d="M193,6 L203,6 L203,13 L193,13 Z M196.3,6 L196.3,13 M199.7,6 L199.7,13 M193,9.5 L203,9.5" fill="none" stroke="#1d6a5a" stroke-width="0.9"/>
<path d="M207,7 L211,7 L211,11 L207,11 Z M213,5 L217,5 L217,9 L213,9 Z M209,11 L215,9 M211,12 L215,14" fill="none" stroke="#1d6a5a" stroke-width="0.9"/>
<rect x="218.3" y="3.5" width="11.699999999999989" height="11.5" fill="#fcd38a" stroke="#e8b058" stroke-width="0.7"/>
<path d="M219,12 L229,6 M224,5 L224,12" fill="none" stroke="#222" stroke-width="1"/><circle cx="224" cy="9" r="1.5" fill="#d02020"/>
<path d="M233,11 L243,7 M238,5 L238,13" fill="none" stroke="#222" stroke-width="1"/><circle cx="238" cy="9" r="1.3" fill="#d02020"/>
<path d="M247,9 L257,9 M252,5 L252,14" fill="none" stroke="#222" stroke-width="1"/><circle cx="252" cy="9" r="1.2" fill="#d02020"/>
<line x1="259" y1="4" x2="259" y2="15" stroke="#c0c6cf" stroke-width="0.8"/>
<rect x="260.8" y="3.5" width="12.949999999999989" height="11.5" fill="#fcd38a" stroke="#e8b058" stroke-width="0.7"/>
<path d="M263,5 L271,5 M267,5 L267,13 M263,13 L271,13 M265,8 L267,5 L269,8" fill="none" stroke="#d02020" stroke-width="1.1"/>
<path d="M280,4.5 L285,4.5 L282,9 L285,9 L278,15 L280,10 L277.5,10 Z" fill="#f2d430" stroke="#333" stroke-width="0.7"/>
<path d="M290,8 L293,8 L291.5,10 Z" fill="#777"/>
<path d="M305,7.5 L309.5,7.5" stroke="#555" stroke-width="0.9"/><path d="M305,10 L309.5,10 L307.25,12.5 Z" fill="#555"/>
<rect x="3.25" y="93.0" width="1" height="1" fill="#8a909a"/>
<rect x="3.25" y="95.6" width="1" height="1" fill="#8a909a"/>
<rect x="3.25" y="98.2" width="1" height="1" fill="#8a909a"/>
<rect x="3.25" y="100.8" width="1" height="1" fill="#8a909a"/>
<circle cx="11.9" cy="97" r="3.6" fill="none" stroke="#444" stroke-width="1"/><line x1="14.4" y1="99.5" x2="17.4" y2="102.5" stroke="#444" stroke-width="1.3"/><rect x="9.9" y="95.5" width="4" height="3" fill="none" stroke="#444" stroke-width="0.7"/>
<rect x="22.0" y="92.5" width="11" height="11" fill="none" stroke="#6a7f95" stroke-width="1" rx=" stroke-dasharray="1.5,1""/>
<circle cx="27.5" cy="98" r="2.5" fill="none" stroke="#555" stroke-width="0.9"/>
<line x1="37" y1="92.5" x2="37" y2="104" stroke="#c5cbd3" stroke-width="0.8"/>
<line x1="37.8" y1="92.5" x2="37.8" y2="104" stroke="#fff" stroke-width="0.6"/>
<path d="M41.3,92.5 L41.3,103.5 M43.3,92.5 L43.3,103.5" stroke="#5a6a80" stroke-width="1.3"/><path d="M50.8,92.5 L44.8,101" stroke="#1a2a40" stroke-width="2"/>
<path d="M64.5,93.5 L57,101.5" stroke="#1a2a40" stroke-width="2.4"/><path d="M57,101.5 L55.5,103" stroke="#666" stroke-width="0.8"/>
<rect x="74" y="93.5" width="6" height="5" fill="#e8d23a" stroke="#555" stroke-width="0.7"/>
<path d="M74,98 L70,102" stroke="#222" stroke-width="0.9"/>
<line x1="83.3" y1="92.5" x2="83.3" y2="104" stroke="#c5cbd3" stroke-width="0.8"/>
<line x1="84.1" y1="92.5" x2="84.1" y2="104" stroke="#fff" stroke-width="0.6"/>
<path d="M86.8,103.5 L92.3,92.5 L97.8,103.5 M89.3,100 L95.3,100" fill="none" stroke="#222" stroke-width="1.2"/><circle cx="88.8" cy="102.5" r="1" fill="#36c0e0"/>
<path d="M101.8,98 L111.8,93.5 L112.8,102.5 Z" fill="none" stroke="#333" stroke-width="0.9"/><circle cx="111.8" cy="93.5" r="1" fill="#36c0e0"/>
<line x1="116.7" y1="92.5" x2="116.7" y2="104" stroke="#c5cbd3" stroke-width="0.8"/>
<line x1="117.5" y1="92.5" x2="117.5" y2="104" stroke="#fff" stroke-width="0.6"/>
<path d="M120.1,98 L131.1,98 M125.6,92.5 L125.6,103.5" stroke="#111" stroke-width="1.3"/><path d="M119.6,98 L122.6,95.5 L122.6,100.5Z M131.6,98 L128.6,95.5 L128.6,100.5Z M125.6,92.0 L123.1,95.0 L128.1,95.0Z M125.6,104.0 L123.1,101.0 L128.1,101.0Z" fill="#111"/>
<path d="M134.1,98 L145.1,98 M139.6,92.5 L139.6,103.5" stroke="#aab" stroke-width="1.1"/><rect x="136.6" y="95" width="6" height="6" fill="none" stroke="#bbc" stroke-width="0.8"/>
<path d="M157.0,95 A4.5,4.5 0 1 1 151.5,93.7" fill="none" stroke="#111" stroke-width="1.8"/><path d="M149.5,92 L153.5,93.5 L150.5,96.5Z" fill="#111"/>
<path d="M161.8,99 L172.8,99 M167.3,92.5 L167.3,103.5 M163.8,96 L167.3,101 L170.8,96" fill="none" stroke="#6a8ab0" stroke-width="0.9"/>
<path d="M179.8,92.5 L175.3,103.5 L179.8,103.5Z M181.8,92.5 L186.3,103.5 L181.8,103.5Z" fill="#fff" stroke="#222" stroke-width="0.9"/><rect x="179.8" y="92.5" width="2" height="11" fill="#d8a0a8"/>
<rect x="189.3" y="93.5" width="11" height="3" fill="#1d4a5a"/>
<rect x="190.8" y="97" width="8" height="3" fill="#1d4a5a"/>
<rect x="189.3" y="101.0" width="11" height="2" fill="#1d4a5a"/>
<line x1="194.8" y1="92.5" x2="194.8" y2="103.5" stroke="#e02020" stroke-width="1"/>
<circle cx="209" cy="98" r="4.5" fill="none" stroke="#3a6aa0" stroke-width="0.9" stroke-dasharray="1.5,1"/><path d="M204.5,98 L213.5,98 M209,93.5 L209,102.5" stroke="#e02020" stroke-width="1.2"/>
<line x1="217.7" y1="92.5" x2="217.7" y2="104" stroke="#c5cbd3" stroke-width="0.8"/>
<line x1="218.5" y1="92.5" x2="218.5" y2="104" stroke="#fff" stroke-width="0.6"/>
<path d="M222.2,99 L233.2,97 M228.7,92.5 L225.7,103.5" stroke="#222" stroke-width="1.1"/><path d="M229.2,97 L233.2,96.5" stroke="#e03030" stroke-width="1.2"/>
<path d="M236.2,98 L241.7,98 M245.7,92.5 L241.7,103.5" stroke="#222" stroke-width="1.1"/><path d="M238.7,98 L242.7,98" stroke="#e03030" stroke-width="1.2"/>
<path d="M249.9,101 L260.9,101 L259.9,98 L257.4,98 L257.4,94.5 L253.4,94.5 L253.4,98 L250.9,98 Z" fill="#f4d0d0" stroke="#b02020" stroke-width="0.9"/>
<rect x="265.1" y="101" width="9" height="1.3" fill="#111"/>
<rect x="267.1" y="97" width="2" height="4" fill="#2233aa"/>
<rect x="270.1" y="93.5" width="2" height="8" fill="#d02020"/>
<path d="M277.4,98 L288.4,98 M282.9,92.5 L282.9,95.5 M282.9,101 L282.9,103.5" stroke="#222" stroke-width="1.1"/><path d="M280.4,95 L285.4,95" stroke="#e03030" stroke-width="0.9" stroke-dasharray="1,1"/>
<path d="M291.2,94.5 L302.2,102.5 M302.2,94.5 L291.2,102.5" stroke="#222" stroke-width="1.1"/><circle cx="296.7" cy="97" r="1.2" fill="#e03030"/>
<path d="M305.1,98 L316.1,98" stroke="#222" stroke-width="1.1"/><path d="M308.6,95 L308.6,101 M312.6,95 L312.6,101" stroke="#36c0e0" stroke-width="1.3"/>
<path d="M319.7,103.5 L319.7,97.5 Q319.7,93.5 323.7,93.5 L329.7,93.5" fill="none" stroke="#222" stroke-width="1.1"/>
<path d="M333.2,103.5 L333.2,97.5 L337.2,93.5 L343.2,93.5" fill="none" stroke="#444" stroke-width="1"/>
<rect x="346.8" y="92.5" width="11" height="11" fill="#dce4ee" stroke="#4a6a8a" stroke-width="1"/>
<rect x="348.8" y="94.5" width="7" height="7" fill="#fff" stroke="#7a9ab0" stroke-width="0.7"/>
<path d="M371.75,92.5 L361.75,102.5" stroke="#c02020" stroke-width="2.6"/><path d="M368.75,92.5 L371.75,95.5" stroke="#fff" stroke-width="0.7"/>
<line x1="375.8" y1="92.5" x2="375.8" y2="104" stroke="#c5cbd3" stroke-width="0.8"/>
<line x1="376.6" y1="92.5" x2="376.6" y2="104" stroke="#fff" stroke-width="0.6"/>
<path d="M381.1,94.5 L390.1,94.5 L390.1,102.5 L381.1,102.5 Z" fill="none" stroke="#1d3b50" stroke-width="1" stroke-dasharray="2,1"/>
<rect x="394.25" y="92.5" width="9" height="11" fill="#3a6a8a" stroke="#1d3b50" stroke-width="0.8"/>
<rect x="396.25" y="95.5" width="5" height="1.5" fill="#dde"/>
<path d="M407.2,96 L418.2,96 M407.2,100 L418.2,100 M410.7,92.5 L410.7,103.5 M414.7,92.5 L414.7,103.5" stroke="#1d5a7a" stroke-width="1.3"/>
<line x1="422" y1="92.5" x2="422" y2="104" stroke="#c5cbd3" stroke-width="0.8"/>
<line x1="422.8" y1="92.5" x2="422.8" y2="104" stroke="#fff" stroke-width="0.6"/>
<rect x="426.0" y="92.5" width="11" height="11" fill="#dde8f0" stroke="#3a5a7a" stroke-width="1"/>
<path d="M427.0,102.5 L430.0,98.5 L433.0,101.5 L436.0,97.5 L436.0,102.5Z" fill="#3a6a8a"/><rect x="432.0" y="94.5" width="3" height="2" fill="#e8c020"/>
<text x="445" y="102" font-size="11" fill="#1d3650" text-anchor="middle" font-weight="bold" font-family="Liberation Serif">A</text>
<path d="M453.0,98 Q456.0,93 458.5,98 T464.0,98" fill="none" stroke="#333" stroke-width="1"/>
<path d="M467.5,103.5 Q469.5,93.5 478.5,93.5" fill="none" stroke="#333" stroke-width="1.1"/><circle cx="478.5" cy="93.5" r="1" fill="#222"/>
<circle cx="487.7" cy="98" r="5" fill="none" stroke="#222" stroke-width="1"/>
<rect x="496.0" y="94.5" width="11" height="7" fill="#fff" stroke="#222" stroke-width="1" rx="2"/>
<path d="M509.5,103.5 L511.5,93.5 L520.5,103.5Z" fill="#1d4a6a"/><path d="M511.5,93.5 L520.5,101.5" stroke="#6a9ac0" stroke-width="1"/>
<path d="M523.0,98 L525.0,95 L527.0,101 L529.0,95 L531.0,101 L534.0,98" fill="none" stroke="#333" stroke-width="0.9"/>
<path d="M537.5,98 L545.5,98 M540.5,95 L537.5,98 L540.5,101 M545.5,94 L545.5,102" fill="none" stroke="#333" stroke-width="1"/>
<path d="M552.2,94.5 L555.2,93.5 L555.2,102.5" fill="none" stroke="#333" stroke-width="1"/><rect x="558.2" y="92.5" width="3" height="11" fill="#5a3a10"/>
<rect x="564.7" y="92.5" width="11" height="11" fill="#f4f4f4" stroke="#555" stroke-width="0.9"/>
<path d="M566.7,101.5 L569.7,97.5 L571.7,99.5 L574.7,94.5" fill="none" stroke="#333" stroke-width="0.8"/>
<path d="M578.25,103.5 L589.25,103.5 M578.25,103.5 L588.25,93.5 M584.25,103.5 Q584.25,99.5 582.25,99.5" fill="none" stroke="#555" stroke-width="0.9"/>
<rect x="592.5" y="92.5" width="11" height="11" fill="#eee" stroke="#444" stroke-width="0.9"/>
<rect x="593.5" y="93.5" width="9" height="2" fill="#555"/>
<path d="M593.5,99 L602.5,99 M596.5,97 L596.5,102.5 M599.5,97 L599.5,102.5" stroke="#444" stroke-width="0.8"/>
<line x1="607.7" y1="92.5" x2="607.7" y2="104" stroke="#c5cbd3" stroke-width="0.8"/>
<line x1="608.5" y1="92.5" x2="608.5" y2="104" stroke="#fff" stroke-width="0.6"/>
<path d="M611.5,100 L614.5,97 L616.5,100 L622.5,100" fill="none" stroke="#333" stroke-width="0.9"/>
<path d="M625.1,102 L636.1,102 L635.1,99 L626.1,99 Z" fill="#ccc" stroke="#333" stroke-width="0.9"/><circle cx="630.6" cy="96" r="3" fill="#ddd" stroke="#333" stroke-width="0.9"/>
<line x1="640" y1="92.5" x2="640" y2="104" stroke="#c5cbd3" stroke-width="0.8"/>
<line x1="640.8" y1="92.5" x2="640.8" y2="104" stroke="#fff" stroke-width="0.6"/>
<path d="M643.9,95.5 L646.9,92.5 L654.9,92.5 L654.9,100.5 L651.9,103.5 L643.9,103.5 Z M643.9,95.5 L651.9,95.5 L651.9,103.5 M651.9,95.5 L654.9,92.5" fill="#fff" stroke="#333" stroke-width="0.9"/>
<path d="M657.8,95.5 L660.8,92.5 L668.8,92.5 L668.8,103.5 L657.8,103.5 Z" fill="#e8eef4" stroke="#333" stroke-width="0.9"/><path d="M663.3,94.5 L663.3,103.5 M657.8,98 L668.8,98" stroke="#333" stroke-width="0.9"/>
<line x1="673" y1="92.5" x2="673" y2="104" stroke="#c5cbd3" stroke-width="0.8"/>
<line x1="673.8" y1="92.5" x2="673.8" y2="104" stroke="#fff" stroke-width="0.6"/>
<path d="M678.2,103.5 L678.2,93.5 M676.2,95.5 L678.2,93.5 L680.2,95.5 M678.2,101.5 L687.2,101.5 M685.2,99.5 L687.2,101.5 L685.2,103.5" fill="none" stroke="#222" stroke-width="1"/>
<path d="M693.75,103.5 L693.75,92.5 M690.75,100.5 L701.75,100.5" stroke="#333" stroke-width="1" stroke-dasharray="1.5,1"/>
<line x1="706.7" y1="92.5" x2="706.7" y2="104" stroke="#c5cbd3" stroke-width="0.8"/>
<line x1="707.5" y1="92.5" x2="707.5" y2="104" stroke="#fff" stroke-width="0.6"/>
<path d="M710.5,92.5 L710.5,102.5 L720.5,102.5" fill="none" stroke="#333" stroke-width="1"/>
<text x="716" y="101.5" font-size="5" fill="#d02020" text-anchor="middle" font-weight="bold">XY</text>
<path d="M724.2,92.5 L724.2,102.5 L734.2,102.5" fill="none" stroke="#333" stroke-width="1"/>
<text x="730.2" y="101" font-size="6" fill="#d02020" text-anchor="middle" font-weight="bold">Z</text>
<path d="M738.2,92.5 L738.2,102.5 L748.2,102.5" fill="none" stroke="#333" stroke-width="1"/>
<text x="743.7" y="101" font-size="5" fill="#d02020" text-anchor="middle" font-weight="bold">3D</text>
<path d="M752.2,92.5 L752.2,102.5 L762.2,102.5" fill="none" stroke="#333" stroke-width="1"/><circle cx="757.7" cy="99" r="3" fill="none" stroke="#d02020" stroke-width="1"/>
<rect x="774.3" y="93.0" width="1" height="1" fill="#8a909a"/>
<rect x="774.3" y="95.6" width="1" height="1" fill="#8a909a"/>
<rect x="774.3" y="98.2" width="1" height="1" fill="#8a909a"/>
<rect x="774.3" y="100.8" width="1" height="1" fill="#8a909a"/>
<rect x="780.7" y="92.5" width="7" height="11" fill="#f0e040" stroke="#555" stroke-width="0.9" rx="3"/>
<path d="M793.25,103.5 L804.25,92.5" stroke="#222" stroke-width="3"/><path d="M794.25,101.5 L803.25,93.5" stroke="#e8d030" stroke-width="1.5" stroke-dasharray="2,1"/>
<path d="M806.8,102.5 A5.5,5.5 0 0 1 817.8,102.5 Z" fill="#e0c830" stroke="#333" stroke-width="0.9"/>
<path d="M822.3,102.5 L825.8,93.5 L829.3,102.5 Z" fill="#e8d040" stroke="#555" stroke-width="0.8"/>
<path d="M842.9,92.5 L842.9,101.5 L835.9,101.5" fill="none" stroke="#d8c020" stroke-width="2.5"/><path d="M844.4,92.5 L844.4,103.0 L835.9,103.0" fill="none" stroke="#222" stroke-width="0.9"/>
<path d="M848.5,94.5 L855.5,94.5 L859.5,98 L855.5,101.5 L848.5,101.5Z" fill="#2a6ad0" stroke="#1a3a80" stroke-width="0.7"/>
<path d="M864.0,103.5 L864.0,93.5 M862.0,95.5 L864.0,93.5 L866.0,95.5 M864.0,101.5 L873.0,101.5 M871.0,99.5 L873.0,101.5 L871.0,103.5" fill="none" stroke="#222" stroke-width="1"/>
<path d="M877.2,92.5 L877.2,102.5 L887.2,102.5" fill="none" stroke="#333" stroke-width="1"/><path d="M878.2,101.5 L881.2,94.5 L887.2,101.5" fill="none" stroke="#20a040" stroke-width="1"/><path d="M878.2,101.5 L882.2,97.5 L887.2,101.5" fill="none" stroke="#d02020" stroke-width="0.8"/>
<path d="M891.1,92.5 L891.1,102.5 L901.1,102.5" fill="none" stroke="#333" stroke-width="1"/><circle cx="896.6" cy="99" r="3" fill="none" stroke="#d02020" stroke-width="1"/>
<path d="M904.7,92.5 L904.7,102.5 L914.7,102.5" fill="none" stroke="#333" stroke-width="1"/><path d="M905.7,101.5 L908.7,94.5 L914.7,101.5" fill="none" stroke="#20a040" stroke-width="1"/><path d="M905.7,101.5 L909.7,97.5 L914.7,101.5" fill="none" stroke="#d02020" stroke-width="0.8"/>
<path d="M923.25,92.5 L928.25,92.5 L925.25,97 L928.25,97 L920.25,103.5 L922.25,99 L919.25,99 Z" fill="#d8d040" stroke="#333" stroke-width="0.8"/>
<line x1="932.5" y1="92.5" x2="932.5" y2="104" stroke="#c5cbd3" stroke-width="0.8"/>
<line x1="933.3" y1="92.5" x2="933.3" y2="104" stroke="#fff" stroke-width="0.6"/>
<rect x="935.0" y="91.0" width="13" height="13.5" fill="#fcd38a" stroke="#e8b058" stroke-width="0.7"/>
<path d="M936.0,94.5 L947.0,94.5 M936.0,98 L947.0,98 M938.0,92.5 L938.0,103.5 M942.0,92.5 L942.0,103.5" stroke="#333" stroke-width="0.9"/><circle cx="945.0" cy="101.5" r="2.3" fill="#e02020"/>
<path d="M950.5,94.5 L961.5,94.5 M950.5,98 L961.5,98 M952.5,92.5 L952.5,103.5 M959.5,92.5 L959.5,103.5 M950.5,100.5 L961.5,100.5" stroke="#333" stroke-width="0.9"/>
<path d="M767,100 L770,100 L768.5,102 Z" fill="#555"/><path d="M967,100 L970,100 L968.5,102 Z" fill="#555"/>
<rect x="4.5" y="109.5" width="1" height="1" fill="#8a909a"/>
<rect x="6.7" y="109.5" width="1" height="1" fill="#8a909a"/>
<rect x="8.9" y="109.5" width="1" height="1" fill="#8a909a"/>
<rect x="11.100000000000001" y="109.5" width="1" height="1" fill="#8a909a"/>
<line x1="3" y1="127" x2="13.5" y2="127" stroke="#b8bec8" stroke-width="0.8"/>
<line x1="3" y1="200" x2="13.5" y2="200" stroke="#b8bec8" stroke-width="0.8"/>
<line x1="3" y1="217.5" x2="13.5" y2="217.5" stroke="#b8bec8" stroke-width="0.8"/>
<line x1="3" y1="235" x2="13.5" y2="235" stroke="#b8bec8" stroke-width="0.8"/>
<line x1="3" y1="333.75" x2="13.5" y2="333.75" stroke="#b8bec8" stroke-width="0.8"/>
<line x1="3" y1="390" x2="13.5" y2="390" stroke="#b8bec8" stroke-width="0.8"/>
<line x1="3" y1="407.5" x2="13.5" y2="407.5" stroke="#b8bec8" stroke-width="0.8"/>
<line x1="3" y1="425" x2="13.5" y2="425" stroke="#b8bec8" stroke-width="0.8"/>
<rect x="1152" y="113" width="13.6" height="272" fill="#dfe3e9"/>
<rect x="1168" y="113" width="13.6" height="284" fill="#dfe3e9"/>
<rect x="1168" y="413" width="13.6" height="185" fill="#dfe3e9"/>
<rect x="1184" y="113" width="13.6" height="574" fill="#dfe3e9"/>
<rect x="1152.5" y="113.4" width="10" height="9" fill="#fff" stroke="#5a5a5a" stroke-width="0.9"/>
<line x1="1152.5" y1="117.9" x2="1162.5" y2="117.9" stroke="#5a5a5a" stroke-width="0.8"/>
<line x1="1157.5" y1="113.4" x2="1157.5" y2="122.4" stroke="#5a5a5a" stroke-width="0.8"/>
<path d="M1159.5,119.9 L1164,123.9" stroke="#2a3a90" stroke-width="1.5"/>
<rect x="1152.5" y="128.15" width="10" height="6" fill="#eee" stroke="#5a5a5a" stroke-width="0.9"/>
<line x1="1154.5" y1="131.15" x2="1160.5" y2="131.15" stroke="#5a5a5a" stroke-width="0.8"/>
<path d="M1159.5,133.15 L1164,137.15" stroke="#2a3a90" stroke-width="1.5"/>
<rect x="1152.5" y="139.4" width="10" height="10" fill="#ccc" stroke="#5a5a5a" stroke-width="0.9"/>
<rect x="1154.5" y="141.4" width="4" height="4" fill="#fff" stroke="#5a5a5a" stroke-width="0.6"/>
<path d="M1159.5,146.4 L1164,150.4" stroke="#2a3a90" stroke-width="1.5"/>
<circle cx="1157.5" cy="157.65" r="4.5" fill="#eee" stroke="#5a5a5a" stroke-width="0.9"/>
<line x1="1153.5" y1="157.65" x2="1161.5" y2="157.65" stroke="#5a5a5a" stroke-width="0.8"/>
<path d="M1159.5,159.65 L1164,163.65" stroke="#2a3a90" stroke-width="1.5"/>
<path d="M1153.5,175.9 L1153.5,165.9 M1155.5,165.9 L1155.5,175.9" stroke="#c02020" stroke-width="1"/><path d="M1156.5,168.9 L1161.5,173.9 L1156.5,173.9Z" fill="#fff" stroke="#5a5a5a" stroke-width="0.8"/>
<path d="M1159.5,172.9 L1164,176.9" stroke="#2a3a90" stroke-width="1.5"/>
<path d="M1152.5,188.15 L1156.5,179.15 L1160.5,188.15 Z" fill="#fff" stroke="#5a5a5a" stroke-width="0.9"/>
<path d="M1159.5,186.15 L1164,190.15" stroke="#2a3a90" stroke-width="1.5"/>
<path d="M1153.5,202.4 L1153.5,193.4 L1161.5,193.4 L1161.5,202.4" fill="none" stroke="#5a5a5a" stroke-width="1.6"/>
<path d="M1159.5,199.4 L1164,203.4" stroke="#2a3a90" stroke-width="1.5"/>
<path d="M1152.5,215.65 L1152.5,205.65 L1162.5,205.65 L1162.5,215.65 Z" fill="#ddd" stroke="#5a5a5a" stroke-width="0.9"/><path d="M1154.5,207.65 L1160.5,207.65 L1160.5,213.65 L1154.5,213.65Z" fill="#aaa"/>
<path d="M1159.5,212.65 L1164,216.65" stroke="#2a3a90" stroke-width="1.5"/>
<rect x="1152.5" y="219.9" width="6" height="8" fill="#999" stroke="#4a4a4a" stroke-width="0.8"/>
<rect x="1156.5" y="221.9" width="5" height="7" fill="#fff" stroke="#5a5a5a" stroke-width="0.8"/>
<path d="M1159.5,225.9 L1164,229.9" stroke="#2a3a90" stroke-width="1.5"/>
<path d="M1152.5,234.15 L1162.5,234.15 L1160.5,241.15 L1154.5,241.15 Z" fill="#e8e8e8" stroke="#5a5a5a" stroke-width="0.9"/>
<path d="M1159.5,239.15 L1164,243.15" stroke="#2a3a90" stroke-width="1.5"/>
<rect x="1152.5" y="245.9" width="10" height="9" fill="#fff" stroke="#5a5a5a" stroke-width="0.9"/>
<line x1="1152.5" y1="250.4" x2="1162.5" y2="250.4" stroke="#5a5a5a" stroke-width="0.8"/>
<line x1="1157.5" y1="245.9" x2="1157.5" y2="254.9" stroke="#5a5a5a" stroke-width="0.8"/>
<path d="M1159.5,252.4 L1164,256.4" stroke="#2a3a90" stroke-width="1.5"/>
<rect x="1152.5" y="260.65" width="10" height="6" fill="#eee" stroke="#5a5a5a" stroke-width="0.9"/>
<line x1="1154.5" y1="263.65" x2="1160.5" y2="263.65" stroke="#5a5a5a" stroke-width="0.8"/>
<path d="M1159.5,265.65 L1164,269.65" stroke="#2a3a90" stroke-width="1.5"/>
<rect x="1152.5" y="271.9" width="10" height="10" fill="#ccc" stroke="#5a5a5a" stroke-width="0.9"/>
<rect x="1154.5" y="273.9" width="4" height="4" fill="#fff" stroke="#5a5a5a" stroke-width="0.6"/>
<path d="M1159.5,278.9 L1164,282.9" stroke="#2a3a90" stroke-width="1.5"/>
<circle cx="1157.5" cy="290.15" r="4.5" fill="#eee" stroke="#5a5a5a" stroke-width="0.9"/>
<line x1="1153.5" y1="290.15" x2="1161.5" y2="290.15" stroke="#5a5a5a" stroke-width="0.8"/>
<path d="M1159.5,292.15 L1164,296.15" stroke="#2a3a90" stroke-width="1.5"/>
<path d="M1153.5,308.4 L1153.5,298.4 M1155.5,298.4 L1155.5,308.4" stroke="#c02020" stroke-width="1"/><path d="M1156.5,301.4 L1161.5,306.4 L1156.5,306.4Z" fill="#fff" stroke="#5a5a5a" stroke-width="0.8"/>
<path d="M1159.5,305.4 L1164,309.4" stroke="#2a3a90" stroke-width="1.5"/>
<path d="M1152.5,320.65 L1156.5,311.65 L1160.5,320.65 Z" fill="#fff" stroke="#5a5a5a" stroke-width="0.9"/>
<path d="M1159.5,318.65 L1164,322.65" stroke="#2a3a90" stroke-width="1.5"/>
<path d="M1153.5,334.9 L1153.5,325.9 L1161.5,325.9 L1161.5,334.9" fill="none" stroke="#5a5a5a" stroke-width="1.6"/>
<path d="M1159.5,331.9 L1164,335.9" stroke="#2a3a90" stroke-width="1.5"/>
<path d="M1152.5,348.15 L1152.5,338.15 L1162.5,338.15 L1162.5,348.15 Z" fill="#ddd" stroke="#5a5a5a" stroke-width="0.9"/><path d="M1154.5,340.15 L1160.5,340.15 L1160.5,346.15 L1154.5,346.15Z" fill="#aaa"/>
<path d="M1159.5,345.15 L1164,349.15" stroke="#2a3a90" stroke-width="1.5"/>
<rect x="1152.5" y="352.4" width="6" height="8" fill="#999" stroke="#4a4a4a" stroke-width="0.8"/>
<rect x="1156.5" y="354.4" width="5" height="7" fill="#fff" stroke="#5a5a5a" stroke-width="0.8"/>
<path d="M1159.5,358.4 L1164,362.4" stroke="#2a3a90" stroke-width="1.5"/>
<path d="M1152.5,366.65 L1162.5,366.65 L1160.5,373.65 L1154.5,373.65 Z" fill="#e8e8e8" stroke="#5a5a5a" stroke-width="0.9"/>
<path d="M1159.5,371.65 L1164,375.65" stroke="#2a3a90" stroke-width="1.5"/>
<rect x="1152.5" y="378.4" width="10" height="9" fill="#fff" stroke="#5a5a5a" stroke-width="0.9"/>
<line x1="1152.5" y1="382.9" x2="1162.5" y2="382.9" stroke="#5a5a5a" stroke-width="0.8"/>
<line x1="1157.5" y1="378.4" x2="1157.5" y2="387.4" stroke="#5a5a5a" stroke-width="0.8"/>
<path d="M1159.5,384.9 L1164,388.9" stroke="#2a3a90" stroke-width="1.5"/>
<path d="M1169.6,123.4 L1169.6,113.4 L1179.6,113.4 L1179.6,123.4 Z" fill="#ddd" stroke="#5a5a5a" stroke-width="0.9"/><path d="M1171.6,115.4 L1177.6,115.4 L1177.6,121.4 L1171.6,121.4Z" fill="#aaa"/>
<path d="M1168.5,116.4 L1168.5,124.4 L1171,124.4 M1178,112.4 L1181,112.4 L1181,115.4" fill="none" stroke="#30c8e0" stroke-width="1"/>
<path d="M1170.6,137.3 L1170.6,128.3 L1178.6,128.3 L1178.6,137.3" fill="none" stroke="#5a5a5a" stroke-width="1.6"/>
<path d="M1168.5,130.3 L1168.5,138.3 L1171,138.3 M1178,126.30000000000001 L1181,126.30000000000001 L1181,129.3" fill="none" stroke="#30c8e0" stroke-width="1"/>
<path d="M1169.6,149.4 L1173.6,140.4 L1177.6,149.4 Z" fill="#fff" stroke="#5a5a5a" stroke-width="0.9"/>
<path d="M1168.5,143.4 L1168.5,151.4 L1171,151.4 M1178,139.4 L1181,139.4 L1181,142.4" fill="none" stroke="#30c8e0" stroke-width="1"/>
<path d="M1170.6,163.6 L1170.6,153.6 M1172.6,153.6 L1172.6,163.6" stroke="#c02020" stroke-width="1"/><path d="M1173.6,156.6 L1178.6,161.6 L1173.6,161.6Z" fill="#fff" stroke="#5a5a5a" stroke-width="0.8"/>
<path d="M1168.5,156.6 L1168.5,164.6 L1171,164.6 M1178,152.6 L1181,152.6 L1181,155.6" fill="none" stroke="#30c8e0" stroke-width="1"/>
<circle cx="1174.6" cy="176.1" r="4.5" fill="#eee" stroke="#5a5a5a" stroke-width="0.9"/>
<line x1="1170.6" y1="176.1" x2="1178.6" y2="176.1" stroke="#5a5a5a" stroke-width="0.8"/>
<path d="M1168.5,174.1 L1168.5,182.1 L1171,182.1 M1178,170.1 L1181,170.1 L1181,173.1" fill="none" stroke="#30c8e0" stroke-width="1"/>
<rect x="1169.6" y="185" width="10" height="10" fill="#ccc" stroke="#5a5a5a" stroke-width="0.9"/>
<rect x="1171.6" y="187" width="4" height="4" fill="#fff" stroke="#5a5a5a" stroke-width="0.6"/>
<path d="M1168.5,188 L1168.5,196 L1171,196 M1178,184 L1181,184 L1181,187" fill="none" stroke="#30c8e0" stroke-width="1"/>
<rect x="1169.6" y="200.5" width="10" height="6" fill="#eee" stroke="#5a5a5a" stroke-width="0.9"/>
<line x1="1171.6" y1="203.5" x2="1177.6" y2="203.5" stroke="#5a5a5a" stroke-width="0.8"/>
<path d="M1168.5,201.5 L1168.5,209.5 L1171,209.5 M1178,197.5 L1181,197.5 L1181,200.5" fill="none" stroke="#30c8e0" stroke-width="1"/>
<rect x="1169.6" y="212.5" width="10" height="9" fill="#fff" stroke="#5a5a5a" stroke-width="0.9"/>
<line x1="1169.6" y1="217" x2="1179.6" y2="217" stroke="#5a5a5a" stroke-width="0.8"/>
<line x1="1174.6" y1="212.5" x2="1174.6" y2="221.5" stroke="#5a5a5a" stroke-width="0.8"/>
<path d="M1168.5,215 L1168.5,223 L1171,223 M1178,211 L1181,211 L1181,214" fill="none" stroke="#30c8e0" stroke-width="1"/>
<path d="M1169.6,227.5 L1179.6,227.5 L1177.6,234.5 L1171.6,234.5 Z" fill="#e8e8e8" stroke="#5a5a5a" stroke-width="0.9"/>
<path d="M1168.5,228.5 L1168.5,236.5 L1171,236.5 M1178,224.5 L1181,224.5 L1181,227.5" fill="none" stroke="#30c8e0" stroke-width="1"/>
<rect x="1169.6" y="240" width="6" height="8" fill="#999" stroke="#4a4a4a" stroke-width="0.8"/>
<rect x="1173.6" y="242" width="5" height="7" fill="#fff" stroke="#5a5a5a" stroke-width="0.8"/>
<path d="M1168.5,242 L1168.5,250 L1171,250 M1178,238 L1181,238 L1181,241" fill="none" stroke="#30c8e0" stroke-width="1"/>
<path d="M1169.6,266.8 L1169.6,256.8 L1179.6,256.8 L1179.6,266.8 Z" fill="#ddd" stroke="#5a5a5a" stroke-width="0.9"/><path d="M1171.6,258.8 L1177.6,258.8 L1177.6,264.8 L1171.6,264.8Z" fill="#aaa"/>
<path d="M1168.5,259.8 L1168.5,267.8 L1171,267.8 M1178,255.8 L1181,255.8 L1181,258.8" fill="none" stroke="#30c8e0" stroke-width="1"/>
<path d="M1170.6,279.4 L1170.6,270.4 L1178.6,270.4 L1178.6,279.4" fill="none" stroke="#5a5a5a" stroke-width="1.6"/>
<path d="M1168.5,272.4 L1168.5,280.4 L1171,280.4 M1178,268.4 L1181,268.4 L1181,271.4" fill="none" stroke="#30c8e0" stroke-width="1"/>
<path d="M1169.6,291.8 L1173.6,282.8 L1177.6,291.8 Z" fill="#fff" stroke="#5a5a5a" stroke-width="0.9"/>
<path d="M1168.5,285.8 L1168.5,293.8 L1171,293.8 M1178,281.8 L1181,281.8 L1181,284.8" fill="none" stroke="#30c8e0" stroke-width="1"/>
<path d="M1170.6,310.6 L1170.6,300.6 M1172.6,300.6 L1172.6,310.6" stroke="#c02020" stroke-width="1"/><path d="M1173.6,303.6 L1178.6,308.6 L1173.6,308.6Z" fill="#fff" stroke="#5a5a5a" stroke-width="0.8"/>
<path d="M1168.5,303.6 L1168.5,311.6 L1171,311.6 M1178,299.6 L1181,299.6 L1181,302.6" fill="none" stroke="#30c8e0" stroke-width="1"/>
<circle cx="1174.6" cy="318.9" r="4.5" fill="#eee" stroke="#5a5a5a" stroke-width="0.9"/>
<line x1="1170.6" y1="318.9" x2="1178.6" y2="318.9" stroke="#5a5a5a" stroke-width="0.8"/>
<path d="M1168.5,316.9 L1168.5,324.9 L1171,324.9 M1178,312.9 L1181,312.9 L1181,315.9" fill="none" stroke="#30c8e0" stroke-width="1"/>
<rect x="1169.6" y="327.2" width="10" height="10" fill="#ccc" stroke="#5a5a5a" stroke-width="0.9"/>
<rect x="1171.6" y="329.2" width="4" height="4" fill="#fff" stroke="#5a5a5a" stroke-width="0.6"/>
<path d="M1168.5,330.2 L1168.5,338.2 L1171,338.2 M1178,326.2 L1181,326.2 L1181,329.2" fill="none" stroke="#30c8e0" stroke-width="1"/>
<rect x="1169.6" y="342.6" width="10" height="6" fill="#eee" stroke="#5a5a5a" stroke-width="0.9"/>
<line x1="1171.6" y1="345.6" x2="1177.6" y2="345.6" stroke="#5a5a5a" stroke-width="0.8"/>
<path d="M1168.5,343.6 L1168.5,351.6 L1171,351.6 M1178,339.6 L1181,339.6 L1181,342.6" fill="none" stroke="#30c8e0" stroke-width="1"/>
<rect x="1169.6" y="354.4" width="10" height="9" fill="#fff" stroke="#5a5a5a" stroke-width="0.9"/>
<line x1="1169.6" y1="358.9" x2="1179.6" y2="358.9" stroke="#5a5a5a" stroke-width="0.8"/>
<line x1="1174.6" y1="354.4" x2="1174.6" y2="363.4" stroke="#5a5a5a" stroke-width="0.8"/>
<path d="M1168.5,356.9 L1168.5,364.9 L1171,364.9 M1178,352.9 L1181,352.9 L1181,355.9" fill="none" stroke="#30c8e0" stroke-width="1"/>
<path d="M1169.6,372.6 L1179.6,372.6 L1177.6,379.6 L1171.6,379.6 Z" fill="#e8e8e8" stroke="#5a5a5a" stroke-width="0.9"/>
<path d="M1168.5,373.6 L1168.5,381.6 L1171,381.6 M1178,369.6 L1181,369.6 L1181,372.6" fill="none" stroke="#30c8e0" stroke-width="1"/>
<rect x="1169.6" y="386" width="6" height="8" fill="#999" stroke="#4a4a4a" stroke-width="0.8"/>
<rect x="1173.6" y="388" width="5" height="7" fill="#fff" stroke="#5a5a5a" stroke-width="0.8"/>
<path d="M1168.5,388 L1168.5,396 L1171,396 M1178,384 L1181,384 L1181,387" fill="none" stroke="#30c8e0" stroke-width="1"/>
<line x1="1169" y1="168" x2="1180" y2="168" stroke="#b5bbc5" stroke-width="0.8"/>
<line x1="1169" y1="296" x2="1180" y2="296" stroke="#b5bbc5" stroke-width="0.8"/>
<line x1="1169" y1="369" x2="1180" y2="369" stroke="#b5bbc5" stroke-width="0.8"/>
<path d="M1170.6,422.7 L1170.6,412.7 M1172.6,412.7 L1172.6,422.7" stroke="#c02020" stroke-width="1"/><path d="M1173.6,415.7 L1178.6,420.7 L1173.6,420.7Z" fill="#fff" stroke="#5a5a5a" stroke-width="0.8"/>
<path d="M1168.5,414.7 L1168.5,423.7 L1172,423.7" fill="none" stroke="#e8cf3a" stroke-width="1"/>
<path d="M1169.6,435.59999999999997 L1173.6,426.59999999999997 L1177.6,435.59999999999997 Z" fill="#fff" stroke="#5a5a5a" stroke-width="0.9"/>
<path d="M1168.5,428.59999999999997 L1168.5,437.59999999999997 L1172,437.59999999999997" fill="none" stroke="#e8cf3a" stroke-width="1"/>
<path d="M1170.6,450.5 L1170.6,441.5 L1178.6,441.5 L1178.6,450.5" fill="none" stroke="#5a5a5a" stroke-width="1.6"/>
<path d="M1168.5,442.5 L1168.5,451.5 L1172,451.5" fill="none" stroke="#e8cf3a" stroke-width="1"/>
<path d="M1169.6,464.4 L1169.6,454.4 L1179.6,454.4 L1179.6,464.4 Z" fill="#ddd" stroke="#5a5a5a" stroke-width="0.9"/><path d="M1171.6,456.4 L1177.6,456.4 L1177.6,462.4 L1171.6,462.4Z" fill="#aaa"/>
<path d="M1168.5,456.4 L1168.5,465.4 L1172,465.4" fill="none" stroke="#e8cf3a" stroke-width="1"/>
<rect x="1169.6" y="469.3" width="6" height="8" fill="#999" stroke="#4a4a4a" stroke-width="0.8"/>
<rect x="1173.6" y="471.3" width="5" height="7" fill="#fff" stroke="#5a5a5a" stroke-width="0.8"/>
<path d="M1168.5,470.3 L1168.5,479.3 L1172,479.3" fill="none" stroke="#e8cf3a" stroke-width="1"/>
<path d="M1169.6,484.2 L1179.6,484.2 L1177.6,491.2 L1171.6,491.2 Z" fill="#e8e8e8" stroke="#5a5a5a" stroke-width="0.9"/>
<path d="M1168.5,484.2 L1168.5,493.2 L1172,493.2" fill="none" stroke="#e8cf3a" stroke-width="1"/>
<rect x="1169.6" y="496.6" width="10" height="9" fill="#fff" stroke="#5a5a5a" stroke-width="0.9"/>
<line x1="1169.6" y1="501.1" x2="1179.6" y2="501.1" stroke="#5a5a5a" stroke-width="0.8"/>
<line x1="1174.6" y1="496.6" x2="1174.6" y2="505.6" stroke="#5a5a5a" stroke-width="0.8"/>
<path d="M1168.5,498.1 L1168.5,507.1 L1172,507.1" fill="none" stroke="#e8cf3a" stroke-width="1"/>
<rect x="1169.6" y="512.0" width="10" height="6" fill="#eee" stroke="#5a5a5a" stroke-width="0.9"/>
<line x1="1171.6" y1="515.0" x2="1177.6" y2="515.0" stroke="#5a5a5a" stroke-width="0.8"/>
<path d="M1168.5,512.0 L1168.5,521.0 L1172,521.0" fill="none" stroke="#e8cf3a" stroke-width="1"/>
<rect x="1169.6" y="523.9" width="10" height="10" fill="#ccc" stroke="#5a5a5a" stroke-width="0.9"/>
<rect x="1171.6" y="525.9" width="4" height="4" fill="#fff" stroke="#5a5a5a" stroke-width="0.6"/>
<path d="M1168.5,525.9 L1168.5,534.9 L1172,534.9" fill="none" stroke="#e8cf3a" stroke-width="1"/>
<circle cx="1174.6" cy="542.8" r="4.5" fill="#eee" stroke="#5a5a5a" stroke-width="0.9"/>
<line x1="1170.6" y1="542.8" x2="1178.6" y2="542.8" stroke="#5a5a5a" stroke-width="0.8"/>
<path d="M1168.5,539.8 L1168.5,548.8 L1172,548.8" fill="none" stroke="#e8cf3a" stroke-width="1"/>
<path d="M1170.6,561.7 L1170.6,551.7 M1172.6,551.7 L1172.6,561.7" stroke="#c02020" stroke-width="1"/><path d="M1173.6,554.7 L1178.6,559.7 L1173.6,559.7Z" fill="#fff" stroke="#5a5a5a" stroke-width="0.8"/>
<path d="M1168.5,553.7 L1168.5,562.7 L1172,562.7" fill="none" stroke="#e8cf3a" stroke-width="1"/>
<path d="M1169.6,574.6 L1173.6,565.6 L1177.6,574.6 Z" fill="#fff" stroke="#5a5a5a" stroke-width="0.9"/>
<path d="M1168.5,567.6 L1168.5,576.6 L1172,576.6" fill="none" stroke="#e8cf3a" stroke-width="1"/>
<path d="M1170.6,589.5 L1170.6,580.5 L1178.6,580.5 L1178.6,589.5" fill="none" stroke="#5a5a5a" stroke-width="1.6"/>
<path d="M1168.5,581.5 L1168.5,590.5 L1172,590.5" fill="none" stroke="#e8cf3a" stroke-width="1"/>
<rect x="1184.5" y="114.5" width="10" height="6" fill="#eee" stroke="#5a5a5a" stroke-width="0.9"/>
<line x1="1186.5" y1="117.5" x2="1192.5" y2="117.5" stroke="#5a5a5a" stroke-width="0.8"/>
<rect x="1191.5" y="118.5" width="5.5" height="5" fill="#eee" stroke="#666" stroke-width="0.6"/>
<rect x="1184.5" y="131.5" width="10" height="9" fill="#fff" stroke="#5a5a5a" stroke-width="0.9"/>
<line x1="1184.5" y1="136.0" x2="1194.5" y2="136.0" stroke="#5a5a5a" stroke-width="0.8"/>
<line x1="1189.5" y1="131.5" x2="1189.5" y2="140.5" stroke="#5a5a5a" stroke-width="0.8"/>
<rect x="1191.5" y="137.0" width="5.5" height="5" fill="#eee" stroke="#666" stroke-width="0.6"/>
<path d="M1184.5,146.5 L1194.5,146.5 L1192.5,153.5 L1186.5,153.5 Z" fill="#e8e8e8" stroke="#5a5a5a" stroke-width="0.9"/>
<rect x="1191.5" y="150.5" width="5.5" height="5" fill="#eee" stroke="#666" stroke-width="0.6"/>
<rect x="1184.5" y="159.0" width="6" height="8" fill="#999" stroke="#4a4a4a" stroke-width="0.8"/>
<rect x="1188.5" y="161.0" width="5" height="7" fill="#fff" stroke="#5a5a5a" stroke-width="0.8"/>
<rect x="1191.5" y="164.0" width="5.5" height="5" fill="#eee" stroke="#666" stroke-width="0.6"/>
<path d="M1184.5,181.5 L1184.5,171.5 L1194.5,171.5 L1194.5,181.5 Z" fill="#ddd" stroke="#5a5a5a" stroke-width="0.9"/><path d="M1186.5,173.5 L1192.5,173.5 L1192.5,179.5 L1186.5,179.5Z" fill="#aaa"/>
<rect x="1191.5" y="177.5" width="5.5" height="5" fill="#eee" stroke="#666" stroke-width="0.6"/>
<path d="M1185.5,195.0 L1185.5,186.0 L1193.5,186.0 L1193.5,195.0" fill="none" stroke="#5a5a5a" stroke-width="1.6"/>
<rect x="1191.5" y="191.0" width="5.5" height="5" fill="#eee" stroke="#666" stroke-width="0.6"/>
<path d="M1184.5,207.5 L1188.5,198.5 L1192.5,207.5 Z" fill="#fff" stroke="#5a5a5a" stroke-width="0.9"/>
<rect x="1191.5" y="204.5" width="5.5" height="5" fill="#eee" stroke="#666" stroke-width="0.6"/>
<path d="M1185.5,222.0 L1185.5,212.0 M1187.5,212.0 L1187.5,222.0" stroke="#c02020" stroke-width="1"/><path d="M1188.5,215.0 L1193.5,220.0 L1188.5,220.0Z" fill="#fff" stroke="#5a5a5a" stroke-width="0.8"/>
<rect x="1191.5" y="218.0" width="5.5" height="5" fill="#eee" stroke="#666" stroke-width="0.6"/>
<circle cx="1189.5" cy="230.5" r="4.5" fill="#eee" stroke="#5a5a5a" stroke-width="0.9"/>
<line x1="1185.5" y1="230.5" x2="1193.5" y2="230.5" stroke="#5a5a5a" stroke-width="0.8"/>
<rect x="1191.5" y="231.5" width="5.5" height="5" fill="#eee" stroke="#666" stroke-width="0.6"/>
<rect x="1184.5" y="239.0" width="10" height="10" fill="#ccc" stroke="#5a5a5a" stroke-width="0.9"/>
<rect x="1186.5" y="241.0" width="4" height="4" fill="#fff" stroke="#5a5a5a" stroke-width="0.6"/>
<rect x="1191.5" y="245.0" width="5.5" height="5" fill="#eee" stroke="#666" stroke-width="0.6"/>
<rect x="1184.5" y="254.5" width="10" height="6" fill="#eee" stroke="#5a5a5a" stroke-width="0.9"/>
<line x1="1186.5" y1="257.5" x2="1192.5" y2="257.5" stroke="#5a5a5a" stroke-width="0.8"/>
<rect x="1191.5" y="258.5" width="5.5" height="5" fill="#eee" stroke="#666" stroke-width="0.6"/>
<rect x="1184.5" y="266.5" width="10" height="9" fill="#fff" stroke="#5a5a5a" stroke-width="0.9"/>
<line x1="1184.5" y1="271.0" x2="1194.5" y2="271.0" stroke="#5a5a5a" stroke-width="0.8"/>
<line x1="1189.5" y1="266.5" x2="1189.5" y2="275.5" stroke="#5a5a5a" stroke-width="0.8"/>
<rect x="1191.5" y="272.0" width="5.5" height="5" fill="#eee" stroke="#666" stroke-width="0.6"/>
<path d="M1184.5,281.5 L1194.5,281.5 L1192.5,288.5 L1186.5,288.5 Z" fill="#e8e8e8" stroke="#5a5a5a" stroke-width="0.9"/>
<rect x="1191.5" y="285.5" width="5.5" height="5" fill="#eee" stroke="#666" stroke-width="0.6"/>
<rect x="1184.5" y="294.0" width="6" height="8" fill="#999" stroke="#4a4a4a" stroke-width="0.8"/>
<rect x="1188.5" y="296.0" width="5" height="7" fill="#fff" stroke="#5a5a5a" stroke-width="0.8"/>
<rect x="1191.5" y="299.0" width="5.5" height="5" fill="#eee" stroke="#666" stroke-width="0.6"/>
<path d="M1184.5,316.5 L1184.5,306.5 L1194.5,306.5 L1194.5,316.5 Z" fill="#ddd" stroke="#5a5a5a" stroke-width="0.9"/><path d="M1186.5,308.5 L1192.5,308.5 L1192.5,314.5 L1186.5,314.5Z" fill="#aaa"/>
<rect x="1191.5" y="312.5" width="5.5" height="5" fill="#eee" stroke="#666" stroke-width="0.6"/>
<path d="M1185.5,330.0 L1185.5,321.0 L1193.5,321.0 L1193.5,330.0" fill="none" stroke="#5a5a5a" stroke-width="1.6"/>
<rect x="1191.5" y="326.0" width="5.5" height="5" fill="#eee" stroke="#666" stroke-width="0.6"/>
<path d="M1184.5,342.5 L1188.5,333.5 L1192.5,342.5 Z" fill="#fff" stroke="#5a5a5a" stroke-width="0.9"/>
<rect x="1191.5" y="339.5" width="5.5" height="5" fill="#eee" stroke="#666" stroke-width="0.6"/>
<path d="M1185.5,357.0 L1185.5,347.0 M1187.5,347.0 L1187.5,357.0" stroke="#c02020" stroke-width="1"/><path d="M1188.5,350.0 L1193.5,355.0 L1188.5,355.0Z" fill="#fff" stroke="#5a5a5a" stroke-width="0.8"/>
<rect x="1191.5" y="353.0" width="5.5" height="5" fill="#eee" stroke="#666" stroke-width="0.6"/>
<circle cx="1189.5" cy="365.5" r="4.5" fill="#eee" stroke="#5a5a5a" stroke-width="0.9"/>
<line x1="1185.5" y1="365.5" x2="1193.5" y2="365.5" stroke="#5a5a5a" stroke-width="0.8"/>
<rect x="1191.5" y="366.5" width="5.5" height="5" fill="#eee" stroke="#666" stroke-width="0.6"/>
<rect x="1184.5" y="374.0" width="10" height="10" fill="#ccc" stroke="#5a5a5a" stroke-width="0.9"/>
<rect x="1186.5" y="376.0" width="4" height="4" fill="#fff" stroke="#5a5a5a" stroke-width="0.6"/>
<rect x="1191.5" y="380.0" width="5.5" height="5" fill="#eee" stroke="#666" stroke-width="0.6"/>
<rect x="1184.5" y="389.5" width="10" height="6" fill="#eee" stroke="#5a5a5a" stroke-width="0.9"/>
<line x1="1186.5" y1="392.5" x2="1192.5" y2="392.5" stroke="#5a5a5a" stroke-width="0.8"/>
<rect x="1191.5" y="393.5" width="5.5" height="5" fill="#eee" stroke="#666" stroke-width="0.6"/>
<rect x="1184.5" y="401.5" width="10" height="9" fill="#fff" stroke="#5a5a5a" stroke-width="0.9"/>
<line x1="1184.5" y1="406.0" x2="1194.5" y2="406.0" stroke="#5a5a5a" stroke-width="0.8"/>
<line x1="1189.5" y1="401.5" x2="1189.5" y2="410.5" stroke="#5a5a5a" stroke-width="0.8"/>
<rect x="1191.5" y="407.0" width="5.5" height="5" fill="#eee" stroke="#666" stroke-width="0.6"/>
<path d="M1184.5,416.5 L1194.5,416.5 L1192.5,423.5 L1186.5,423.5 Z" fill="#e8e8e8" stroke="#5a5a5a" stroke-width="0.9"/>
<rect x="1191.5" y="420.5" width="5.5" height="5" fill="#eee" stroke="#666" stroke-width="0.6"/>
<rect x="1184.5" y="429.0" width="6" height="8" fill="#999" stroke="#4a4a4a" stroke-width="0.8"/>
<rect x="1188.5" y="431.0" width="5" height="7" fill="#fff" stroke="#5a5a5a" stroke-width="0.8"/>
<rect x="1191.5" y="434.0" width="5.5" height="5" fill="#eee" stroke="#666" stroke-width="0.6"/>
<path d="M1184.5,451.5 L1184.5,441.5 L1194.5,441.5 L1194.5,451.5 Z" fill="#ddd" stroke="#5a5a5a" stroke-width="0.9"/><path d="M1186.5,443.5 L1192.5,443.5 L1192.5,449.5 L1186.5,449.5Z" fill="#aaa"/>
<rect x="1191.5" y="447.5" width="5.5" height="5" fill="#eee" stroke="#666" stroke-width="0.6"/>
<path d="M1185.5,465.0 L1185.5,456.0 L1193.5,456.0 L1193.5,465.0" fill="none" stroke="#5a5a5a" stroke-width="1.6"/>
<rect x="1191.5" y="461.0" width="5.5" height="5" fill="#eee" stroke="#666" stroke-width="0.6"/>
<path d="M1184.5,477.5 L1188.5,468.5 L1192.5,477.5 Z" fill="#fff" stroke="#5a5a5a" stroke-width="0.9"/>
<rect x="1191.5" y="474.5" width="5.5" height="5" fill="#eee" stroke="#666" stroke-width="0.6"/>
<path d="M1185.5,492.0 L1185.5,482.0 M1187.5,482.0 L1187.5,492.0" stroke="#c02020" stroke-width="1"/><path d="M1188.5,485.0 L1193.5,490.0 L1188.5,490.0Z" fill="#fff" stroke="#5a5a5a" stroke-width="0.8"/>
<rect x="1191.5" y="488.0" width="5.5" height="5" fill="#eee" stroke="#666" stroke-width="0.6"/>
<circle cx="1189.5" cy="500.5" r="4.5" fill="#eee" stroke="#5a5a5a" stroke-width="0.9"/>
<line x1="1185.5" y1="500.5" x2="1193.5" y2="500.5" stroke="#5a5a5a" stroke-width="0.8"/>
<rect x="1191.5" y="501.5" width="5.5" height="5" fill="#eee" stroke="#666" stroke-width="0.6"/>
<rect x="1184.5" y="509.0" width="10" height="10" fill="#ccc" stroke="#5a5a5a" stroke-width="0.9"/>
<rect x="1186.5" y="511.0" width="4" height="4" fill="#fff" stroke="#5a5a5a" stroke-width="0.6"/>
<rect x="1191.5" y="515.0" width="5.5" height="5" fill="#eee" stroke="#666" stroke-width="0.6"/>
<rect x="1184.5" y="524.5" width="10" height="6" fill="#eee" stroke="#5a5a5a" stroke-width="0.9"/>
<line x1="1186.5" y1="527.5" x2="1192.5" y2="527.5" stroke="#5a5a5a" stroke-width="0.8"/>
<rect x="1191.5" y="528.5" width="5.5" height="5" fill="#eee" stroke="#666" stroke-width="0.6"/>
<rect x="1184.5" y="536.5" width="10" height="9" fill="#fff" stroke="#5a5a5a" stroke-width="0.9"/>
<line x1="1184.5" y1="541.0" x2="1194.5" y2="541.0" stroke="#5a5a5a" stroke-width="0.8"/>
<line x1="1189.5" y1="536.5" x2="1189.5" y2="545.5" stroke="#5a5a5a" stroke-width="0.8"/>
<rect x="1191.5" y="542.0" width="5.5" height="5" fill="#eee" stroke="#666" stroke-width="0.6"/>
<path d="M1184.5,551.5 L1194.5,551.5 L1192.5,558.5 L1186.5,558.5 Z" fill="#e8e8e8" stroke="#5a5a5a" stroke-width="0.9"/>
<rect x="1191.5" y="555.5" width="5.5" height="5" fill="#eee" stroke="#666" stroke-width="0.6"/>
<rect x="1184.5" y="564.0" width="6" height="8" fill="#999" stroke="#4a4a4a" stroke-width="0.8"/>
<rect x="1188.5" y="566.0" width="5" height="7" fill="#fff" stroke="#5a5a5a" stroke-width="0.8"/>
<rect x="1191.5" y="569.0" width="5.5" height="5" fill="#eee" stroke="#666" stroke-width="0.6"/>
<path d="M1184.5,586.5 L1184.5,576.5 L1194.5,576.5 L1194.5,586.5 Z" fill="#ddd" stroke="#5a5a5a" stroke-width="0.9"/><path d="M1186.5,578.5 L1192.5,578.5 L1192.5,584.5 L1186.5,584.5Z" fill="#aaa"/>
<rect x="1191.5" y="582.5" width="5.5" height="5" fill="#eee" stroke="#666" stroke-width="0.6"/>
<path d="M1185.5,600.0 L1185.5,591.0 L1193.5,591.0 L1193.5,600.0" fill="none" stroke="#5a5a5a" stroke-width="1.6"/>
<rect x="1191.5" y="596.0" width="5.5" height="5" fill="#eee" stroke="#666" stroke-width="0.6"/>
<path d="M1184.5,612.5 L1188.5,603.5 L1192.5,612.5 Z" fill="#fff" stroke="#5a5a5a" stroke-width="0.9"/>
<rect x="1191.5" y="609.5" width="5.5" height="5" fill="#eee" stroke="#666" stroke-width="0.6"/>
<path d="M1185.5,627.0 L1185.5,617.0 M1187.5,617.0 L1187.5,627.0" stroke="#c02020" stroke-width="1"/><path d="M1188.5,620.0 L1193.5,625.0 L1188.5,625.0Z" fill="#fff" stroke="#5a5a5a" stroke-width="0.8"/>
<rect x="1191.5" y="623.0" width="5.5" height="5" fill="#eee" stroke="#666" stroke-width="0.6"/>
<circle cx="1189.5" cy="635.5" r="4.5" fill="#eee" stroke="#5a5a5a" stroke-width="0.9"/>
<line x1="1185.5" y1="635.5" x2="1193.5" y2="635.5" stroke="#5a5a5a" stroke-width="0.8"/>
<rect x="1191.5" y="636.5" width="5.5" height="5" fill="#eee" stroke="#666" stroke-width="0.6"/>
<rect x="1184.5" y="644.0" width="10" height="10" fill="#ccc" stroke="#5a5a5a" stroke-width="0.9"/>
<rect x="1186.5" y="646.0" width="4" height="4" fill="#fff" stroke="#5a5a5a" stroke-width="0.6"/>
<rect x="1191.5" y="650.0" width="5.5" height="5" fill="#eee" stroke="#666" stroke-width="0.6"/>
<rect x="1184.5" y="659.5" width="10" height="6" fill="#eee" stroke="#5a5a5a" stroke-width="0.9"/>
<line x1="1186.5" y1="662.5" x2="1192.5" y2="662.5" stroke="#5a5a5a" stroke-width="0.8"/>
<rect x="1191.5" y="663.5" width="5.5" height="5" fill="#eee" stroke="#666" stroke-width="0.6"/>
<rect x="1184.5" y="671.5" width="10" height="9" fill="#fff" stroke="#5a5a5a" stroke-width="0.9"/>
<line x1="1184.5" y1="676.0" x2="1194.5" y2="676.0" stroke="#5a5a5a" stroke-width="0.8"/>
<line x1="1189.5" y1="671.5" x2="1189.5" y2="680.5" stroke="#5a5a5a" stroke-width="0.8"/>
<rect x="1191.5" y="677.0" width="5.5" height="5" fill="#eee" stroke="#666" stroke-width="0.6"/>
<line x1="1185" y1="128" x2="1196" y2="128" stroke="#b5bbc5" stroke-width="0.8"/>
<rect x="1198.8" y="56" width="1.2" height="49" fill="#8298b8"/>
<rect x="0" y="56" width="1" height="50" fill="#8a98b0"/>
<path d="M3.3000000000000007,123.75 L3.3000000000000007,113.75 L13.3,113.75 L13.3,123.75 Z" fill="#ddd" stroke="#5a5a5a" stroke-width="0.9"/><path d="M5.300000000000001,115.75 L11.3,115.75 L11.3,121.75 L5.300000000000001,121.75Z" fill="#aaa"/>
<path d="M9.5,120.25 L13.5,123.75" stroke="#2a3a90" stroke-width="1.3"/>
<rect x="3.3000000000000007" y="133.5" width="6" height="8" fill="#999" stroke="#4a4a4a" stroke-width="0.8"/>
<rect x="7.300000000000001" y="135.5" width="5" height="7" fill="#fff" stroke="#5a5a5a" stroke-width="0.8"/>
<rect x="9.5" y="138.5" width="4" height="4" fill="#e8e8e8" stroke="#666" stroke-width="0.6"/>
<path d="M3.3000000000000007,148.25 L13.3,148.25 L11.3,155.25 L5.300000000000001,155.25 Z" fill="#e8e8e8" stroke="#5a5a5a" stroke-width="0.9"/>
<rect x="3.3000000000000007" y="160.5" width="10" height="9" fill="#fff" stroke="#5a5a5a" stroke-width="0.9"/>
<line x1="3.3000000000000007" y1="165" x2="13.3" y2="165" stroke="#5a5a5a" stroke-width="0.8"/>
<line x1="8.3" y1="160.5" x2="8.3" y2="169.5" stroke="#5a5a5a" stroke-width="0.8"/>
<path d="M9.5,166.5 L13.5,170" stroke="#2a3a90" stroke-width="1.3"/>
<rect x="3.3000000000000007" y="173.25" width="10" height="6" fill="#eee" stroke="#5a5a5a" stroke-width="0.9"/>
<line x1="5.300000000000001" y1="176.25" x2="11.3" y2="176.25" stroke="#5a5a5a" stroke-width="0.8"/>
<rect x="9.5" y="177.25" width="4" height="4" fill="#e8e8e8" stroke="#666" stroke-width="0.6"/>
<rect x="3.3000000000000007" y="185" width="10" height="10" fill="#ccc" stroke="#5a5a5a" stroke-width="0.9"/>
<rect x="5.300000000000001" y="187" width="4" height="4" fill="#fff" stroke="#5a5a5a" stroke-width="0.6"/>
<circle cx="8.3" cy="207.5" r="4.5" fill="#eee" stroke="#5a5a5a" stroke-width="0.9"/>
<line x1="4.300000000000001" y1="207.5" x2="12.3" y2="207.5" stroke="#5a5a5a" stroke-width="0.8"/>
<path d="M9.5,209.0 L13.5,212.5" stroke="#2a3a90" stroke-width="1.3"/>
<path d="M4.300000000000001,231.25 L4.300000000000001,221.25 M6.300000000000001,221.25 L6.300000000000001,231.25" stroke="#c02020" stroke-width="1"/><path d="M7.300000000000001,224.25 L12.3,229.25 L7.300000000000001,229.25Z" fill="#fff" stroke="#5a5a5a" stroke-width="0.8"/>
<rect x="9.5" y="227.25" width="4" height="4" fill="#e8e8e8" stroke="#666" stroke-width="0.6"/>
<path d="M3.3000000000000007,249 L7.300000000000001,240 L11.3,249 Z" fill="#fff" stroke="#5a5a5a" stroke-width="0.9"/>
<path d="M4.300000000000001,262.5 L4.300000000000001,253.5 L12.3,253.5 L12.3,262.5" fill="none" stroke="#5a5a5a" stroke-width="1.6"/>
<path d="M9.5,259.0 L13.5,262.5" stroke="#2a3a90" stroke-width="1.3"/>
<path d="M3.3000000000000007,276.25 L3.3000000000000007,266.25 L13.3,266.25 L13.3,276.25 Z" fill="#ddd" stroke="#5a5a5a" stroke-width="0.9"/><path d="M5.300000000000001,268.25 L11.3,268.25 L11.3,274.25 L5.300000000000001,274.25Z" fill="#aaa"/>
<rect x="9.5" y="272.25" width="4" height="4" fill="#e8e8e8" stroke="#666" stroke-width="0.6"/>
<rect x="3.3000000000000007" y="279.75" width="6" height="8" fill="#999" stroke="#4a4a4a" stroke-width="0.8"/>
<rect x="7.300000000000001" y="281.75" width="5" height="7" fill="#fff" stroke="#5a5a5a" stroke-width="0.8"/>
<path d="M3.3000000000000007,293.25 L13.3,293.25 L11.3,300.25 L5.300000000000001,300.25 Z" fill="#e8e8e8" stroke="#5a5a5a" stroke-width="0.9"/>
<path d="M9.5,297.75 L13.5,301.25" stroke="#2a3a90" stroke-width="1.3"/>
<rect x="3.3000000000000007" y="305.5" width="10" height="9" fill="#fff" stroke="#5a5a5a" stroke-width="0.9"/>
<line x1="3.3000000000000007" y1="310" x2="13.3" y2="310" stroke="#5a5a5a" stroke-width="0.8"/>
<line x1="8.3" y1="305.5" x2="8.3" y2="314.5" stroke="#5a5a5a" stroke-width="0.8"/>
<rect x="9.5" y="311" width="4" height="4" fill="#e8e8e8" stroke="#666" stroke-width="0.6"/>
<rect x="3.3000000000000007" y="320.75" width="10" height="6" fill="#eee" stroke="#5a5a5a" stroke-width="0.9"/>
<line x1="5.300000000000001" y1="323.75" x2="11.3" y2="323.75" stroke="#5a5a5a" stroke-width="0.8"/>
<rect x="3.3000000000000007" y="336.25" width="10" height="10" fill="#ccc" stroke="#5a5a5a" stroke-width="0.9"/>
<rect x="5.300000000000001" y="338.25" width="4" height="4" fill="#fff" stroke="#5a5a5a" stroke-width="0.6"/>
<path d="M9.5,342.75 L13.5,346.25" stroke="#2a3a90" stroke-width="1.3"/>
<circle cx="8.3" cy="355" r="4.5" fill="#eee" stroke="#5a5a5a" stroke-width="0.9"/>
<line x1="4.300000000000001" y1="355" x2="12.3" y2="355" stroke="#5a5a5a" stroke-width="0.8"/>
<rect x="9.5" y="356" width="4" height="4" fill="#e8e8e8" stroke="#666" stroke-width="0.6"/>
<path d="M4.300000000000001,373.75 L4.300000000000001,363.75 M6.300000000000001,363.75 L6.300000000000001,373.75" stroke="#c02020" stroke-width="1"/><path d="M7.300000000000001,366.75 L12.3,371.75 L7.300000000000001,371.75Z" fill="#fff" stroke="#5a5a5a" stroke-width="0.8"/>
<path d="M3.3000000000000007,385.25 L7.300000000000001,376.25 L11.3,385.25 Z" fill="#fff" stroke="#5a5a5a" stroke-width="0.9"/>
<path d="M9.5,382.75 L13.5,386.25" stroke="#2a3a90" stroke-width="1.3"/>
<path d="M4.300000000000001,405 L4.300000000000001,396 L12.3,396 L12.3,405" fill="none" stroke="#5a5a5a" stroke-width="1.6"/>
<rect x="9.5" y="401" width="4" height="4" fill="#e8e8e8" stroke="#666" stroke-width="0.6"/>
<path d="M3.3000000000000007,421.25 L3.3000000000000007,411.25 L13.3,411.25 L13.3,421.25 Z" fill="#ddd" stroke="#5a5a5a" stroke-width="0.9"/><path d="M5.300000000000001,413.25 L11.3,413.25 L11.3,419.25 L5.300000000000001,419.25Z" fill="#aaa"/>
<rect x="3.3000000000000007" y="432.25" width="6" height="8" fill="#999" stroke="#4a4a4a" stroke-width="0.8"/>
<rect x="7.300000000000001" y="434.25" width="5" height="7" fill="#fff" stroke="#5a5a5a" stroke-width="0.8"/>
<path d="M9.5,437.75 L13.5,441.25" stroke="#2a3a90" stroke-width="1.3"/>
<rect x="0" y="0" width="1200" height="1" fill="#bcbcbc"/>
<rect x="324.5" y="17.5" width="44" height="17" fill="none" stroke="#e00000" stroke-width="2"/>
</svg></body></html>
